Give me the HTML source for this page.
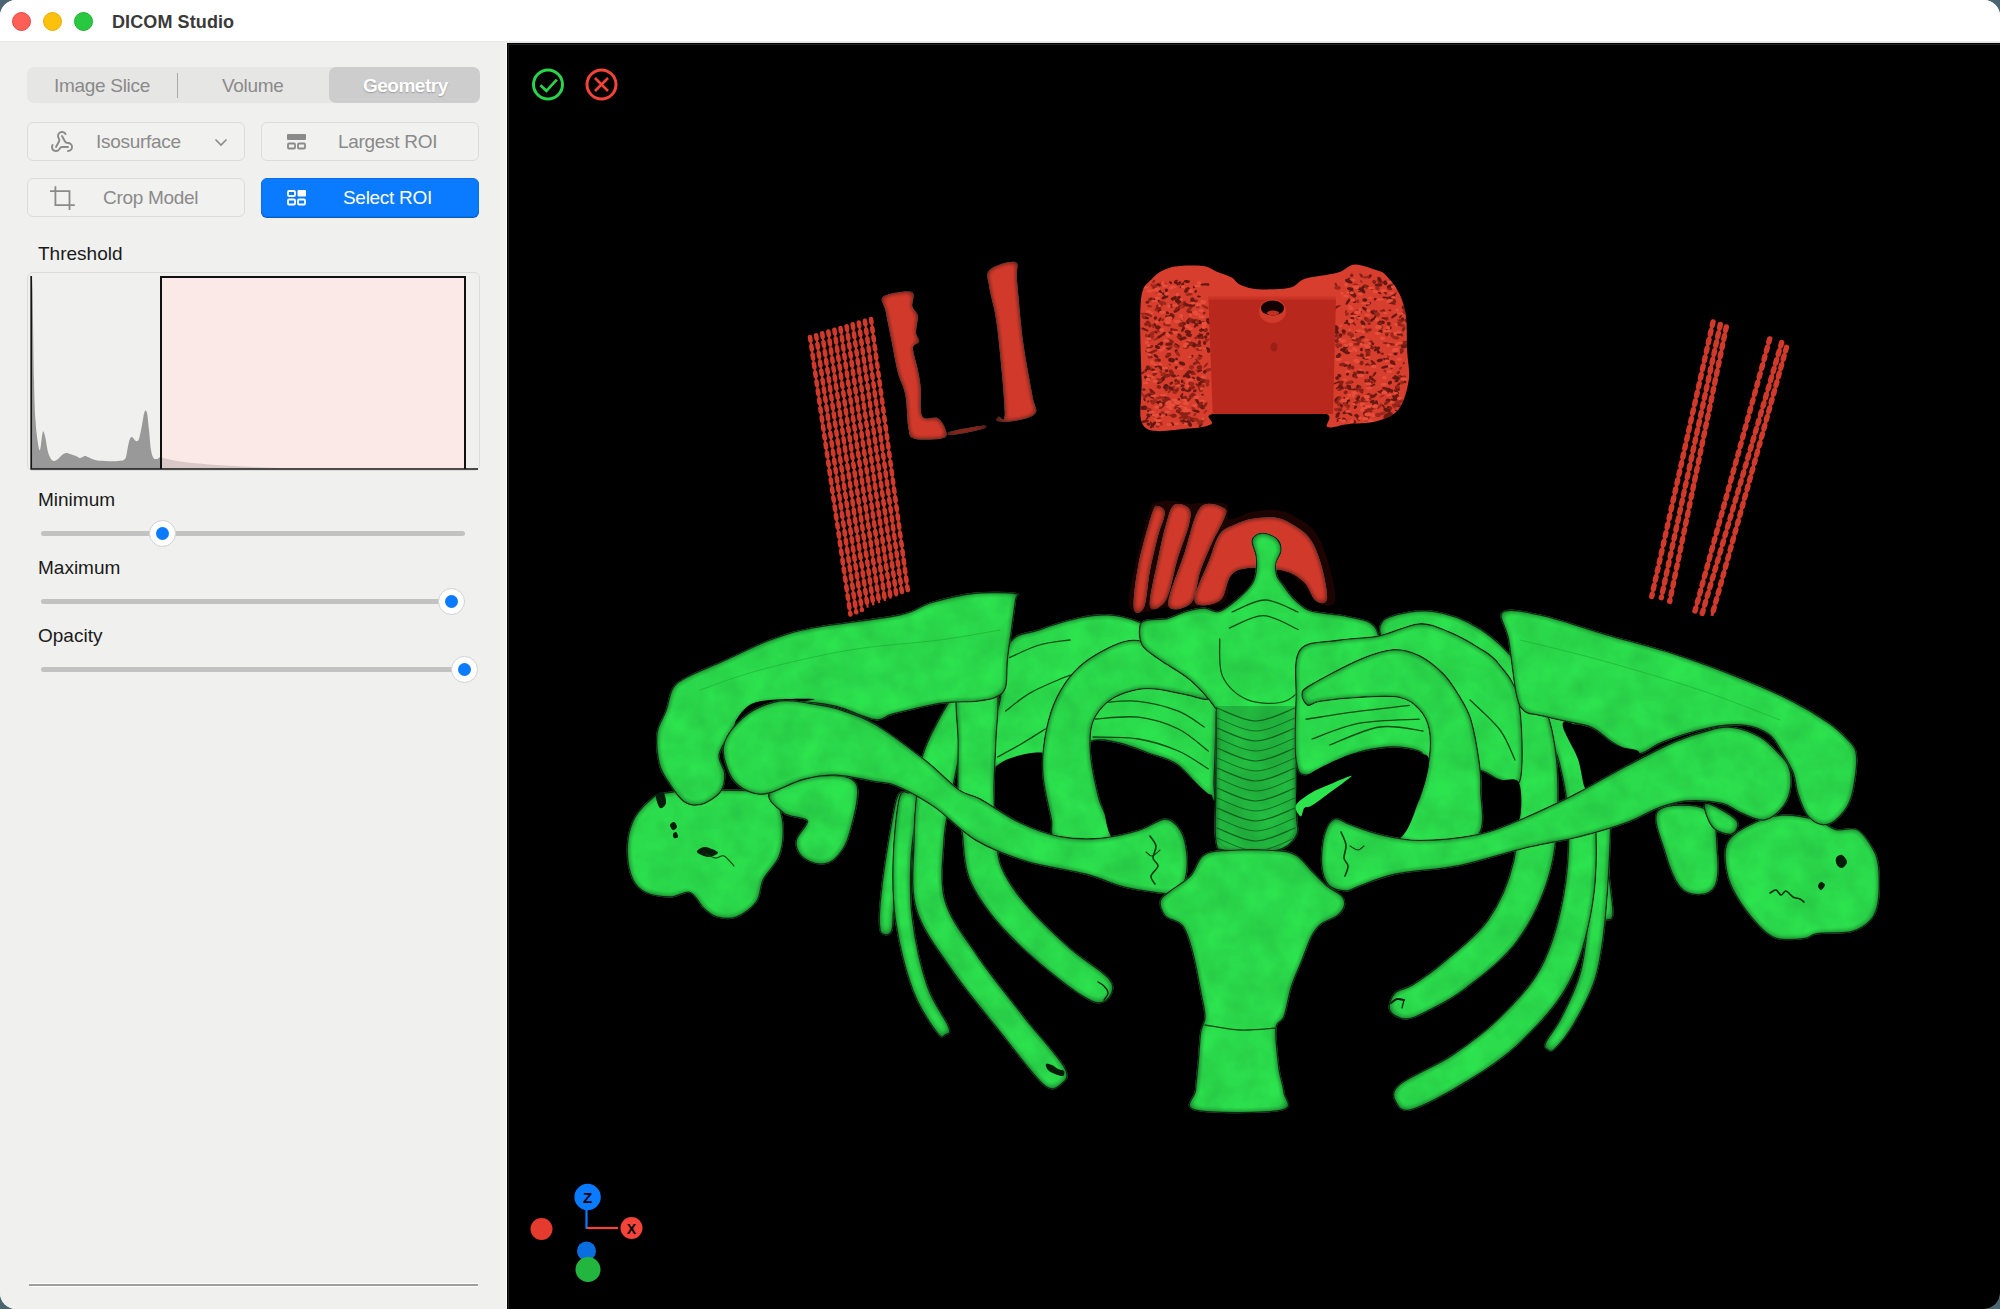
<!DOCTYPE html>
<html><head><meta charset="utf-8">
<style>
*{margin:0;padding:0;box-sizing:border-box}
html,body{width:2000px;height:1309px;overflow:hidden;background:#4a6670}
body{font-family:"Liberation Sans",sans-serif;position:relative}
#win{position:absolute;left:0;top:0;width:2000px;height:1309px;border-radius:16px;overflow:hidden;background:#f0f0ef}
#title{position:absolute;left:0;top:0;width:2000px;height:43px;background:#fff;border-bottom:2px solid #e7e7e6}
.tl{position:absolute;top:11.5px;width:19px;height:19px;border-radius:50%}
#ttext{position:absolute;left:112px;top:12px;font-size:18px;font-weight:bold;color:#3a3a3a;letter-spacing:0.1px}
#side{position:absolute;left:0;top:42px;width:507px;height:1267px;background:#f0f0ef;border-right:1px solid #fafafa}
#view{position:absolute;left:507px;top:43px;width:1493px;height:1266px;background:#000;overflow:hidden}
#view .inb{position:absolute;left:1px;top:1px;right:0;bottom:0;border-left:1px solid #222;border-top:1px solid #222}
.seg{position:absolute;left:27px;top:67px;width:453px;height:36px;border-radius:7px;background:#e6e6e5}
.seg .sel{position:absolute;left:302px;top:0;width:151px;height:36px;border-radius:7px;background:#cdcdcd}
.seg .dv{position:absolute;left:150px;top:6px;width:1px;height:25px;background:#a8a8a8}
.seg span{position:absolute;top:8px;font-size:19px;color:#8a8a8a;white-space:nowrap;letter-spacing:-0.3px}
.btn{position:absolute;width:218px;height:39px;border-radius:6px;border:1px solid #dcdcdc;background:#f1f1f0}
.btn span{position:absolute;top:8px;letter-spacing:-0.3px;font-size:19px;color:#8a8a8a;white-space:nowrap}
.btn svg{position:absolute}
.lbl{position:absolute;left:38px;font-size:19px;color:#1a1a1a}
.track{position:absolute;left:41px;width:424px;height:5px;border-radius:3px;background:#c2c2c2}
.knob{position:absolute;width:27px;height:27px;border-radius:50%;background:#fff;border:1px solid #d2d2d2}
.knob:after{content:"";position:absolute;left:6px;top:6px;width:13px;height:13px;border-radius:50%;background:#0a7aff}
</style></head><body>
<div id="win">
 <div id="title">
  <div class="tl" style="left:11.5px;background:#ff5f57;border:1px solid #e9453e"></div>
  <div class="tl" style="left:42.5px;background:#fbc10c;border:1px solid #e8ab06"></div>
  <div class="tl" style="left:73.5px;background:#28c840;border:1px solid #1eae33"></div>
  <div id="ttext">DICOM Studio</div>
 </div>
 <div id="side"></div>
 <div class="seg"><div class="sel"></div><div class="dv"></div>
  <span style="left:27px">Image Slice</span>
  <span style="left:195px">Volume</span>
  <span style="left:336px;color:#fff;font-weight:bold;letter-spacing:-0.5px;text-shadow:0 0.5px 1.5px rgba(0,0,0,.25)">Geometry</span>
 </div>
 <div class="btn" style="left:27px;top:122px">
  <svg style="left:22px;top:7px" width="24" height="24" viewBox="0 0 24 24" fill="none" stroke="#8a8a8a" stroke-width="1.9" stroke-linecap="round" stroke-linejoin="round"><path d="M18 16.98h-5.99c-1.1 0-1.95.94-2.48 1.9A4 4 0 0 1 2 17c.01-.7.2-1.4.57-2"/><path d="m6 17 3.13-5.78c.53-.97.1-2.18-.5-3.1a4 4 0 1 1 6.89-4.06"/><path d="m12 6 3.13 5.73C15.66 12.7 16.9 13 18 13a4 4 0 0 1 0 8"/></svg>
  <span style="left:68px">Isosurface</span>
  <svg style="left:186px;top:14px" width="14" height="10" viewBox="0 0 14 10" fill="none" stroke="#8a8a8a" stroke-width="1.6"><path d="M1.5 2.5 L7 8 L12.5 2.5"/></svg>
 </div>
 <div class="btn" style="left:261px;top:122px">
  <svg style="left:25px;top:11px" width="20" height="16" viewBox="0 0 20 16"><rect x="0" y="0" width="19" height="6" rx="1" fill="#8a8a8a"/><rect x="1" y="9.5" width="7" height="5" rx="1" fill="none" stroke="#8a8a8a" stroke-width="1.8"/><rect x="11" y="9.5" width="7" height="5" rx="1" fill="none" stroke="#8a8a8a" stroke-width="1.8"/></svg>
  <span style="left:76px">Largest ROI</span>
 </div>
 <div class="btn" style="left:27px;top:178px">
  <svg style="left:22px;top:6px" width="28" height="28" viewBox="0 0 28 28" fill="none" stroke="#8a8a8a" stroke-width="1.8"><path d="M5.4 1.3 V20.2 H24.8 M0 6.2 H19.5 V25"/></svg>
  <span style="left:75px">Crop Model</span>
 </div>
 <div class="btn" style="left:261px;top:178px;background:#0a7aff;border-color:#0a70ea;box-shadow:0 1px 0 #0858c0">
  <svg style="left:25px;top:11px" width="20" height="16" viewBox="0 0 20 16"><rect x="1" y="1" width="7" height="5" rx="1" fill="none" stroke="#fff" stroke-width="1.8"/><rect x="10.5" y="0" width="8.5" height="6.5" rx="1" fill="#fff"/><rect x="1" y="9.5" width="7" height="5" rx="1" fill="none" stroke="#fff" stroke-width="1.8"/><rect x="11" y="9.5" width="7" height="5" rx="1" fill="none" stroke="#fff" stroke-width="1.8"/></svg>
  <span style="left:81px;color:#fff">Select ROI</span>
 </div>
 <div class="lbl" style="top:243px">Threshold</div>
 <div style="position:absolute;left:27px;top:272px;width:453px;height:199px;border:1px solid #dcdcdc;border-radius:6px"></div>
 <svg style="position:absolute;left:0;top:0" width="507" height="700">
  <rect x="160" y="276" width="306" height="193" fill="#fbe9e7"/>
  <path d="M31.5 276.0 C31.7 278.3 32.1 272.7 32.5 290.0 C32.9 307.3 33.5 358.3 34.0 380.0 C34.5 401.7 34.9 410.0 35.5 420.0 C36.1 430.0 36.8 435.0 37.5 440.0 C38.2 445.0 39.1 451.3 40.0 450.0 C40.9 448.7 41.9 434.3 42.7 432.0 C43.5 429.7 44.1 432.7 45.0 436.0 C45.9 439.3 47.0 448.2 48.0 452.0 C49.0 455.8 50.0 457.5 51.0 459.0 C52.0 460.5 52.8 461.0 54.0 461.0 C55.2 461.0 56.7 460.0 58.0 459.0 C59.3 458.0 60.7 456.0 62.0 455.0 C63.3 454.0 64.7 453.2 66.0 453.0 C67.3 452.8 68.3 453.5 70.0 454.0 C71.7 454.5 74.3 455.3 76.0 456.0 C77.7 456.7 78.5 458.0 80.0 458.0 C81.5 458.0 83.4 456.2 84.7 456.0 C86.0 455.8 86.3 456.3 88.0 457.0 C89.7 457.7 92.2 459.3 95.0 460.0 C97.8 460.7 101.2 460.8 105.0 461.0 C108.8 461.2 114.7 461.3 118.0 461.0 C121.3 460.7 123.4 461.0 125.0 459.0 C126.6 457.0 126.8 452.2 127.5 449.0 C128.2 445.8 128.8 442.0 129.5 440.0 C130.2 438.0 130.9 436.8 132.0 437.0 C133.1 437.2 134.8 440.7 136.0 441.0 C137.2 441.3 138.0 441.7 139.0 439.0 C140.0 436.3 141.1 429.5 142.0 425.0 C142.9 420.5 143.7 414.0 144.5 412.0 C145.3 410.0 146.2 410.0 147.0 413.0 C147.8 416.0 148.3 423.8 149.0 430.0 C149.7 436.2 150.2 445.3 151.0 450.0 C151.8 454.7 152.5 456.5 153.5 458.0 C154.5 459.5 155.9 459.2 157.0 459.0 C158.1 458.8 159.5 457.3 160.0 457.0 L160 469 L31 469 Z" fill="#999"/>
  <path d="M160 457 C175 462 200 465 280 468 L160 469 Z" fill="#d8c9c8"/>
  <path d="M31.2 276 V469 H478" fill="none" stroke="#151515" stroke-width="1.7"/>
  <path d="M161 469 V277 H465 V469" fill="none" stroke="#111" stroke-width="2"/>
 </svg>
 <div class="lbl" style="top:489px">Minimum</div>
 <div class="track" style="top:530.5px"></div>
 <div class="knob" style="left:149px;top:519.5px"></div>
 <div class="lbl" style="top:557px">Maximum</div>
 <div class="track" style="top:598.5px"></div>
 <div class="knob" style="left:438px;top:587.5px"></div>
 <div class="lbl" style="top:625px">Opacity</div>
 <div class="track" style="top:666.5px"></div>
 <div class="knob" style="left:451px;top:655.5px"></div>
 <div style="position:absolute;left:29px;top:1283px;width:449px;height:4px;border-top:1px solid #fff;border-bottom:1px solid #fff;background:#9e9e9e"></div>

 <div id="view"><!--SCENE--><svg id="scene" style="position:absolute;left:0;top:0" width="1493" height="1266" viewBox="507 43 1493 1266">
<defs><filter id="sh" x="-10%" y="-10%" width="120%" height="120%" color-interpolation-filters="sRGB">
<feGaussianBlur in="SourceAlpha" stdDeviation="4" result="b"/>
<feColorMatrix in="b" type="matrix" values="0 0 0 0.95 0.12  0 0 0 0.95 0.12  0 0 0 0.95 0.12  0 0 0 0 1" result="g"/>
<feTurbulence type="fractalNoise" baseFrequency="0.035" numOctaves="3" seed="7" result="n"/>
<feColorMatrix in="n" type="matrix" values="0.18 0 0 0 0.86  0.18 0 0 0 0.86  0.18 0 0 0 0.86  0 0 0 0 1" result="n2"/>
<feBlend in="g" in2="n2" mode="multiply" result="g2"/>
<feBlend in="SourceGraphic" in2="g2" mode="multiply" result="m"/>
<feComposite in="m" in2="SourceAlpha" operator="in"/>
</filter><filter id="shr" x="-10%" y="-10%" width="120%" height="120%" color-interpolation-filters="sRGB">
<feGaussianBlur in="SourceAlpha" stdDeviation="3" result="b"/>
<feColorMatrix in="b" type="matrix" values="0 0 0 0.8 0.25  0 0 0 0.8 0.25  0 0 0 0.8 0.25  0 0 0 0 1" result="g"/>
<feBlend in="SourceGraphic" in2="g" mode="multiply" result="m"/>
<feComposite in="m" in2="SourceAlpha" operator="in"/>
</filter></defs>
<path d="M883.3 296.6 C887.6 293.4 906.8 290.4 911.6 292.0 C916.4 293.6 911.3 302.6 912.3 306.5 C913.3 310.4 917.1 311.4 917.7 315.7 C918.3 320.0 915.8 328.2 916.0 332.5 C916.2 336.8 919.7 339.1 919.2 341.7 C918.7 344.2 913.2 343.2 913.0 347.8 C912.8 352.4 916.4 362.6 917.7 369.2 C919.0 375.8 920.0 379.6 920.7 387.5 C921.5 395.4 919.4 411.5 922.2 416.6 C925.0 421.7 933.7 416.0 937.5 418.0 C941.3 420.0 944.2 425.5 945.2 428.8 C946.2 432.1 948.7 436.4 943.6 438.0 C938.5 439.6 920.5 440.2 914.6 438.7 C908.8 437.2 910.0 436.1 908.5 428.8 C907.0 421.6 907.2 404.6 905.4 395.2 C903.6 385.8 900.1 381.2 897.8 372.3 C895.5 363.4 893.7 351.9 891.7 341.7 C889.7 331.5 887.0 318.5 885.6 311.0 C884.2 303.5 879.0 299.8 883.3 296.6 Z" fill="#d13a2b" filter="url(#shr)"/>
<path d="M949.8 431.8 C954.6 430.2 976.2 426.2 981.8 425.7 C987.4 425.2 988.2 427.2 983.4 428.8 C978.6 430.4 958.4 434.5 952.8 435.0 C947.2 435.5 945.0 433.4 949.8 431.8 Z" fill="#d13a2b" filter="url(#shr)"/>
<path d="M989.5 269.9 C993.8 265.6 1010.9 260.4 1015.5 262.2 C1020.1 264.0 1015.7 267.4 1017.0 280.6 C1018.3 293.9 1020.6 322.6 1023.1 341.7 C1025.7 360.8 1030.3 383.2 1032.3 395.2 C1034.3 407.2 1038.3 409.2 1035.3 413.5 C1032.2 417.8 1020.4 419.8 1014.0 421.1 C1007.6 422.4 999.6 421.9 997.1 421.1 C994.6 420.4 997.4 418.1 998.7 416.6 C1000.0 415.1 1005.1 427.0 1004.8 412.0 C1004.5 397.0 999.6 347.0 997.1 326.4 C994.6 305.8 990.8 297.6 989.5 288.2 C988.2 278.8 985.2 274.2 989.5 269.9 Z" fill="#d13a2b" filter="url(#shr)"/>
<path d="M1140.9 300.8 C1142.6 283.9 1146.8 284.6 1151.8 279.0 C1156.8 273.4 1162.1 269.6 1170.6 267.4 C1179.1 265.2 1194.9 265.3 1202.6 266.0 C1210.3 266.7 1212.2 269.9 1217.0 271.8 C1221.8 273.7 1227.7 275.4 1231.6 277.6 C1235.5 279.8 1235.9 282.9 1240.3 284.8 C1244.7 286.7 1249.5 288.7 1257.7 289.2 C1265.9 289.7 1282.0 289.4 1289.7 287.7 C1297.5 286.0 1297.9 281.2 1304.2 279.0 C1310.5 276.8 1321.4 275.9 1327.4 274.7 C1333.4 273.5 1335.8 273.5 1340.4 271.8 C1345.0 270.1 1349.0 264.8 1355.0 264.5 C1361.0 264.2 1371.6 268.6 1376.7 270.3 C1381.8 272.0 1381.8 271.1 1385.4 274.7 C1389.0 278.3 1395.1 285.2 1398.5 292.0 C1401.9 298.8 1404.3 305.4 1405.8 315.3 C1407.2 325.2 1406.7 340.7 1407.2 351.6 C1407.7 362.5 1410.2 370.9 1408.7 380.6 C1407.2 390.3 1403.8 402.8 1398.5 409.6 C1393.2 416.4 1385.2 418.9 1376.7 421.3 C1368.2 423.7 1355.9 423.2 1347.7 424.2 C1339.5 425.1 1331.0 428.7 1327.4 427.0 C1323.8 425.3 1334.7 416.2 1326.0 414.0 C1317.3 411.8 1293.9 414.0 1275.0 414.0 C1256.1 414.0 1223.3 412.3 1212.7 414.0 C1202.1 415.7 1215.4 421.8 1211.3 424.2 C1207.2 426.6 1199.1 428.0 1188.0 428.5 C1176.9 429.0 1152.2 435.0 1144.5 427.0 C1136.8 419.0 1142.2 401.6 1141.6 380.6 C1141.0 359.6 1139.2 317.7 1140.9 300.8 Z" fill="#d83e2e" />
<clipPath id="blkclip"><path d="M1140.9 300.8 C1142.6 283.9 1146.8 284.6 1151.8 279.0 C1156.8 273.4 1162.1 269.6 1170.6 267.4 C1179.1 265.2 1194.9 265.3 1202.6 266.0 C1210.3 266.7 1212.2 269.9 1217.0 271.8 C1221.8 273.7 1227.7 275.4 1231.6 277.6 C1235.5 279.8 1235.9 282.9 1240.3 284.8 C1244.7 286.7 1249.5 288.7 1257.7 289.2 C1265.9 289.7 1282.0 289.4 1289.7 287.7 C1297.5 286.0 1297.9 281.2 1304.2 279.0 C1310.5 276.8 1321.4 275.9 1327.4 274.7 C1333.4 273.5 1335.8 273.5 1340.4 271.8 C1345.0 270.1 1349.0 264.8 1355.0 264.5 C1361.0 264.2 1371.6 268.6 1376.7 270.3 C1381.8 272.0 1381.8 271.1 1385.4 274.7 C1389.0 278.3 1395.1 285.2 1398.5 292.0 C1401.9 298.8 1404.3 305.4 1405.8 315.3 C1407.2 325.2 1406.7 340.7 1407.2 351.6 C1407.7 362.5 1410.2 370.9 1408.7 380.6 C1407.2 390.3 1403.8 402.8 1398.5 409.6 C1393.2 416.4 1385.2 418.9 1376.7 421.3 C1368.2 423.7 1355.9 423.2 1347.7 424.2 C1339.5 425.1 1331.0 428.7 1327.4 427.0 C1323.8 425.3 1334.7 416.2 1326.0 414.0 C1317.3 411.8 1293.9 414.0 1275.0 414.0 C1256.1 414.0 1223.3 412.3 1212.7 414.0 C1202.1 415.7 1215.4 421.8 1211.3 424.2 C1207.2 426.6 1199.1 428.0 1188.0 428.5 C1176.9 429.0 1152.2 435.0 1144.5 427.0 C1136.8 419.0 1142.2 401.6 1141.6 380.6 C1141.0 359.6 1139.2 317.7 1140.9 300.8 Z"/></clipPath>
<g opacity="0.62" clip-path="url(#blkclip)"><ellipse cx="1158.7" cy="360.0" rx="2.2" ry="1.6" fill="#2a0402" transform="rotate(13 1158.7 360.0)"/><ellipse cx="1399.6" cy="344.9" rx="2.7" ry="1.1" fill="#7a1a10" transform="rotate(5 1399.6 344.9)"/><ellipse cx="1179.3" cy="338.4" rx="3.6" ry="1.1" fill="#5a0f08" transform="rotate(44 1179.3 338.4)"/><ellipse cx="1372.6" cy="385.4" rx="3.1" ry="0.9" fill="#2a0402" transform="rotate(-24 1372.6 385.4)"/><ellipse cx="1145.0" cy="407.2" rx="2.5" ry="1.8" fill="#7a1a10" transform="rotate(26 1145.0 407.2)"/><ellipse cx="1400.5" cy="333.8" rx="3.4" ry="1.4" fill="#5a0f08" transform="rotate(45 1400.5 333.8)"/><ellipse cx="1149.4" cy="300.0" rx="1.8" ry="2.2" fill="#7a1a10" transform="rotate(33 1149.4 300.0)"/><ellipse cx="1395.9" cy="337.8" rx="3.5" ry="1.6" fill="#7a1a10" transform="rotate(10 1395.9 337.8)"/><ellipse cx="1202.7" cy="380.3" rx="3.8" ry="2.0" fill="#5a0f08" transform="rotate(24 1202.7 380.3)"/><ellipse cx="1358.8" cy="355.7" rx="2.8" ry="0.9" fill="#5a0f08" transform="rotate(16 1358.8 355.7)"/><ellipse cx="1208.2" cy="319.3" rx="1.5" ry="1.5" fill="#7a1a10" transform="rotate(-49 1208.2 319.3)"/><ellipse cx="1392.0" cy="336.2" rx="1.6" ry="1.2" fill="#7a1a10" transform="rotate(45 1392.0 336.2)"/><ellipse cx="1145.9" cy="370.3" rx="1.3" ry="1.8" fill="#1a0200" transform="rotate(6 1145.9 370.3)"/><ellipse cx="1400.5" cy="316.6" rx="1.9" ry="0.9" fill="#2a0402" transform="rotate(-51 1400.5 316.6)"/><ellipse cx="1182.6" cy="284.6" rx="1.8" ry="1.4" fill="#1a0200" transform="rotate(-41 1182.6 284.6)"/><ellipse cx="1339.0" cy="404.3" rx="2.1" ry="2.1" fill="#7a1a10" transform="rotate(-15 1339.0 404.3)"/><ellipse cx="1200.4" cy="336.8" rx="3.6" ry="1.8" fill="#2a0402" transform="rotate(14 1200.4 336.8)"/><ellipse cx="1401.8" cy="350.5" rx="2.4" ry="1.8" fill="#5a0f08" transform="rotate(52 1401.8 350.5)"/><ellipse cx="1171.9" cy="318.0" rx="2.0" ry="1.3" fill="#7a1a10" transform="rotate(58 1171.9 318.0)"/><ellipse cx="1358.0" cy="331.1" rx="2.8" ry="1.0" fill="#1a0200" transform="rotate(-4 1358.0 331.1)"/><ellipse cx="1187.8" cy="331.8" rx="3.2" ry="1.8" fill="#2a0402" transform="rotate(11 1187.8 331.8)"/><ellipse cx="1402.8" cy="278.2" rx="2.2" ry="1.7" fill="#1a0200" transform="rotate(11 1402.8 278.2)"/><ellipse cx="1164.1" cy="333.5" rx="2.1" ry="1.3" fill="#1a0200" transform="rotate(-24 1164.1 333.5)"/><ellipse cx="1362.4" cy="390.1" rx="1.3" ry="1.6" fill="#5a0f08" transform="rotate(-23 1362.4 390.1)"/><ellipse cx="1157.7" cy="398.2" rx="1.9" ry="1.1" fill="#7a1a10" transform="rotate(18 1157.7 398.2)"/><ellipse cx="1342.8" cy="364.5" rx="3.9" ry="1.7" fill="#5a0f08" transform="rotate(-7 1342.8 364.5)"/><ellipse cx="1199.5" cy="304.9" rx="2.1" ry="1.7" fill="#7a1a10" transform="rotate(-28 1199.5 304.9)"/><ellipse cx="1391.1" cy="280.1" rx="3.9" ry="1.2" fill="#5a0f08" transform="rotate(44 1391.1 280.1)"/><ellipse cx="1165.4" cy="401.7" rx="1.4" ry="1.7" fill="#5a0f08" transform="rotate(-9 1165.4 401.7)"/><ellipse cx="1372.3" cy="401.6" rx="2.5" ry="1.7" fill="#1a0200" transform="rotate(-10 1372.3 401.6)"/><ellipse cx="1170.0" cy="415.3" rx="1.6" ry="0.8" fill="#7a1a10" transform="rotate(7 1170.0 415.3)"/><ellipse cx="1405.0" cy="381.9" rx="1.3" ry="1.4" fill="#1a0200" transform="rotate(5 1405.0 381.9)"/><ellipse cx="1201.7" cy="406.6" rx="3.6" ry="2.2" fill="#2a0402" transform="rotate(37 1201.7 406.6)"/><ellipse cx="1339.2" cy="409.6" rx="3.1" ry="2.1" fill="#7a1a10" transform="rotate(9 1339.2 409.6)"/><ellipse cx="1143.9" cy="389.6" rx="1.7" ry="1.2" fill="#2a0402" transform="rotate(3 1143.9 389.6)"/><ellipse cx="1365.0" cy="414.9" rx="2.9" ry="1.3" fill="#1a0200" transform="rotate(57 1365.0 414.9)"/><ellipse cx="1178.7" cy="399.3" rx="1.4" ry="1.1" fill="#2a0402" transform="rotate(4 1178.7 399.3)"/><ellipse cx="1393.2" cy="300.5" rx="3.4" ry="2.1" fill="#5a0f08" transform="rotate(39 1393.2 300.5)"/><ellipse cx="1143.5" cy="372.4" rx="3.6" ry="0.9" fill="#1a0200" transform="rotate(-30 1143.5 372.4)"/><ellipse cx="1379.3" cy="352.4" rx="1.3" ry="1.3" fill="#2a0402" transform="rotate(43 1379.3 352.4)"/><ellipse cx="1194.2" cy="286.8" rx="1.3" ry="1.5" fill="#2a0402" transform="rotate(43 1194.2 286.8)"/><ellipse cx="1342.0" cy="349.8" rx="2.1" ry="1.2" fill="#1a0200" transform="rotate(-14 1342.0 349.8)"/><ellipse cx="1168.7" cy="324.7" rx="1.9" ry="2.2" fill="#7a1a10" transform="rotate(-45 1168.7 324.7)"/><ellipse cx="1374.9" cy="381.7" rx="2.3" ry="0.9" fill="#5a0f08" transform="rotate(-55 1374.9 381.7)"/><ellipse cx="1173.4" cy="375.6" rx="2.7" ry="1.7" fill="#2a0402" transform="rotate(15 1173.4 375.6)"/><ellipse cx="1366.2" cy="330.5" rx="2.6" ry="1.8" fill="#7a1a10" transform="rotate(54 1366.2 330.5)"/><ellipse cx="1170.6" cy="282.6" rx="1.8" ry="1.2" fill="#2a0402" transform="rotate(36 1170.6 282.6)"/><ellipse cx="1351.7" cy="294.4" rx="1.3" ry="1.3" fill="#1a0200" transform="rotate(-45 1351.7 294.4)"/><ellipse cx="1188.6" cy="418.0" rx="3.2" ry="2.0" fill="#7a1a10" transform="rotate(20 1188.6 418.0)"/><ellipse cx="1387.4" cy="359.0" rx="1.5" ry="1.6" fill="#2a0402" transform="rotate(-3 1387.4 359.0)"/><ellipse cx="1158.6" cy="337.1" rx="2.7" ry="1.6" fill="#7a1a10" transform="rotate(-39 1158.6 337.1)"/><ellipse cx="1337.6" cy="400.4" rx="1.5" ry="2.0" fill="#7a1a10" transform="rotate(40 1337.6 400.4)"/><ellipse cx="1205.9" cy="365.1" rx="3.4" ry="0.9" fill="#5a0f08" transform="rotate(-47 1205.9 365.1)"/><ellipse cx="1388.4" cy="414.2" rx="1.4" ry="1.3" fill="#5a0f08" transform="rotate(39 1388.4 414.2)"/><ellipse cx="1159.0" cy="306.4" rx="1.9" ry="1.7" fill="#7a1a10" transform="rotate(-30 1159.0 306.4)"/><ellipse cx="1378.0" cy="414.9" rx="2.8" ry="2.2" fill="#7a1a10" transform="rotate(0 1378.0 414.9)"/><ellipse cx="1207.2" cy="340.7" rx="3.3" ry="1.0" fill="#7a1a10" transform="rotate(-41 1207.2 340.7)"/><ellipse cx="1364.1" cy="407.2" rx="1.7" ry="1.5" fill="#7a1a10" transform="rotate(50 1364.1 407.2)"/><ellipse cx="1177.1" cy="345.1" rx="3.2" ry="1.1" fill="#1a0200" transform="rotate(30 1177.1 345.1)"/><ellipse cx="1346.3" cy="351.8" rx="3.8" ry="2.0" fill="#1a0200" transform="rotate(21 1346.3 351.8)"/><ellipse cx="1199.4" cy="367.5" rx="2.8" ry="2.2" fill="#5a0f08" transform="rotate(-23 1199.4 367.5)"/><ellipse cx="1354.8" cy="394.8" rx="1.8" ry="1.6" fill="#5a0f08" transform="rotate(-21 1354.8 394.8)"/><ellipse cx="1194.1" cy="301.1" rx="4.0" ry="1.5" fill="#5a0f08" transform="rotate(-4 1194.1 301.1)"/><ellipse cx="1394.4" cy="397.4" rx="2.8" ry="1.5" fill="#2a0402" transform="rotate(43 1394.4 397.4)"/><ellipse cx="1169.4" cy="387.8" rx="3.9" ry="1.5" fill="#5a0f08" transform="rotate(47 1169.4 387.8)"/><ellipse cx="1381.4" cy="390.8" rx="1.4" ry="1.1" fill="#1a0200" transform="rotate(-31 1381.4 390.8)"/><ellipse cx="1155.5" cy="318.0" rx="1.7" ry="1.8" fill="#2a0402" transform="rotate(48 1155.5 318.0)"/><ellipse cx="1353.9" cy="403.9" rx="2.1" ry="1.4" fill="#2a0402" transform="rotate(-46 1353.9 403.9)"/><ellipse cx="1160.4" cy="414.3" rx="1.3" ry="1.4" fill="#1a0200" transform="rotate(-59 1160.4 414.3)"/><ellipse cx="1359.4" cy="340.0" rx="2.6" ry="1.1" fill="#7a1a10" transform="rotate(-13 1359.4 340.0)"/><ellipse cx="1178.9" cy="297.5" rx="2.0" ry="1.7" fill="#2a0402" transform="rotate(-7 1178.9 297.5)"/><ellipse cx="1372.9" cy="312.4" rx="2.7" ry="1.8" fill="#1a0200" transform="rotate(31 1372.9 312.4)"/><ellipse cx="1162.5" cy="379.4" rx="3.0" ry="1.9" fill="#1a0200" transform="rotate(-47 1162.5 379.4)"/><ellipse cx="1402.1" cy="325.4" rx="2.8" ry="1.5" fill="#7a1a10" transform="rotate(1 1402.1 325.4)"/><ellipse cx="1146.9" cy="323.3" rx="3.2" ry="1.8" fill="#5a0f08" transform="rotate(-39 1146.9 323.3)"/><ellipse cx="1398.3" cy="372.7" rx="1.5" ry="2.1" fill="#5a0f08" transform="rotate(50 1398.3 372.7)"/><ellipse cx="1185.6" cy="375.5" rx="2.4" ry="1.2" fill="#5a0f08" transform="rotate(-5 1185.6 375.5)"/><ellipse cx="1357.9" cy="301.3" rx="1.4" ry="1.8" fill="#7a1a10" transform="rotate(-17 1357.9 301.3)"/><ellipse cx="1160.5" cy="336.4" rx="3.6" ry="0.9" fill="#1a0200" transform="rotate(-30 1160.5 336.4)"/><ellipse cx="1389.8" cy="327.8" rx="2.1" ry="1.4" fill="#2a0402" transform="rotate(-18 1389.8 327.8)"/><ellipse cx="1198.9" cy="296.5" rx="2.0" ry="0.9" fill="#2a0402" transform="rotate(8 1198.9 296.5)"/><ellipse cx="1399.7" cy="291.7" rx="3.2" ry="1.6" fill="#7a1a10" transform="rotate(38 1399.7 291.7)"/><ellipse cx="1192.4" cy="367.0" rx="1.6" ry="1.4" fill="#5a0f08" transform="rotate(5 1192.4 367.0)"/><ellipse cx="1347.9" cy="301.7" rx="3.6" ry="1.3" fill="#1a0200" transform="rotate(-56 1347.9 301.7)"/><ellipse cx="1196.0" cy="411.0" rx="3.9" ry="1.3" fill="#1a0200" transform="rotate(16 1196.0 411.0)"/><ellipse cx="1404.4" cy="377.3" rx="2.0" ry="2.0" fill="#7a1a10" transform="rotate(-56 1404.4 377.3)"/><ellipse cx="1155.6" cy="373.2" rx="1.5" ry="1.9" fill="#5a0f08" transform="rotate(-1 1155.6 373.2)"/><ellipse cx="1372.7" cy="343.6" rx="1.7" ry="1.5" fill="#2a0402" transform="rotate(38 1372.7 343.6)"/><ellipse cx="1204.1" cy="419.2" rx="1.5" ry="1.2" fill="#5a0f08" transform="rotate(-44 1204.1 419.2)"/><ellipse cx="1391.5" cy="367.9" rx="1.3" ry="1.3" fill="#5a0f08" transform="rotate(1 1391.5 367.9)"/><ellipse cx="1175.9" cy="282.8" rx="2.2" ry="1.3" fill="#1a0200" transform="rotate(23 1175.9 282.8)"/><ellipse cx="1345.4" cy="402.9" rx="2.9" ry="2.1" fill="#2a0402" transform="rotate(29 1345.4 402.9)"/><ellipse cx="1165.7" cy="398.6" rx="3.8" ry="2.0" fill="#7a1a10" transform="rotate(24 1165.7 398.6)"/><ellipse cx="1351.5" cy="322.1" rx="3.4" ry="1.4" fill="#5a0f08" transform="rotate(25 1351.5 322.1)"/><ellipse cx="1168.8" cy="349.6" rx="1.4" ry="2.0" fill="#5a0f08" transform="rotate(18 1168.8 349.6)"/><ellipse cx="1357.3" cy="344.2" rx="3.3" ry="1.4" fill="#5a0f08" transform="rotate(-5 1357.3 344.2)"/><ellipse cx="1145.5" cy="317.7" rx="3.6" ry="1.4" fill="#1a0200" transform="rotate(12 1145.5 317.7)"/><ellipse cx="1351.7" cy="275.4" rx="1.8" ry="1.9" fill="#5a0f08" transform="rotate(43 1351.7 275.4)"/><ellipse cx="1178.2" cy="303.4" rx="1.3" ry="1.6" fill="#5a0f08" transform="rotate(16 1178.2 303.4)"/><ellipse cx="1345.7" cy="365.7" rx="2.4" ry="1.1" fill="#2a0402" transform="rotate(-12 1345.7 365.7)"/><ellipse cx="1164.0" cy="284.8" rx="3.2" ry="1.1" fill="#2a0402" transform="rotate(-12 1164.0 284.8)"/><ellipse cx="1337.9" cy="418.9" rx="1.8" ry="0.9" fill="#7a1a10" transform="rotate(-37 1337.9 418.9)"/><ellipse cx="1165.0" cy="297.1" rx="3.8" ry="1.6" fill="#1a0200" transform="rotate(-27 1165.0 297.1)"/><ellipse cx="1391.1" cy="344.3" rx="3.8" ry="1.2" fill="#5a0f08" transform="rotate(7 1391.1 344.3)"/><ellipse cx="1145.0" cy="329.5" rx="4.0" ry="1.2" fill="#2a0402" transform="rotate(22 1145.0 329.5)"/><ellipse cx="1403.8" cy="363.2" rx="1.2" ry="0.8" fill="#2a0402" transform="rotate(-58 1403.8 363.2)"/><ellipse cx="1176.2" cy="350.8" rx="1.7" ry="1.5" fill="#1a0200" transform="rotate(-36 1176.2 350.8)"/><ellipse cx="1404.2" cy="346.1" rx="3.5" ry="2.1" fill="#2a0402" transform="rotate(-14 1404.2 346.1)"/><ellipse cx="1192.6" cy="372.8" rx="2.3" ry="2.1" fill="#5a0f08" transform="rotate(42 1192.6 372.8)"/><ellipse cx="1344.0" cy="333.1" rx="2.1" ry="1.8" fill="#7a1a10" transform="rotate(-39 1344.0 333.1)"/><ellipse cx="1191.8" cy="387.9" rx="3.5" ry="1.6" fill="#5a0f08" transform="rotate(-16 1191.8 387.9)"/><ellipse cx="1365.0" cy="309.2" rx="3.4" ry="1.5" fill="#1a0200" transform="rotate(39 1365.0 309.2)"/><ellipse cx="1176.5" cy="390.7" rx="3.8" ry="1.8" fill="#7a1a10" transform="rotate(-55 1176.5 390.7)"/><ellipse cx="1348.0" cy="387.0" rx="3.5" ry="0.9" fill="#2a0402" transform="rotate(-22 1348.0 387.0)"/><ellipse cx="1182.6" cy="397.8" rx="1.4" ry="1.7" fill="#2a0402" transform="rotate(-6 1182.6 397.8)"/><ellipse cx="1398.8" cy="384.2" rx="2.1" ry="1.3" fill="#2a0402" transform="rotate(-37 1398.8 384.2)"/><ellipse cx="1194.9" cy="414.6" rx="2.1" ry="1.2" fill="#7a1a10" transform="rotate(-50 1194.9 414.6)"/><ellipse cx="1381.4" cy="310.9" rx="1.3" ry="1.0" fill="#5a0f08" transform="rotate(10 1381.4 310.9)"/><ellipse cx="1143.8" cy="313.8" rx="3.9" ry="1.1" fill="#7a1a10" transform="rotate(1 1143.8 313.8)"/><ellipse cx="1399.5" cy="322.5" rx="3.7" ry="1.9" fill="#7a1a10" transform="rotate(-39 1399.5 322.5)"/><ellipse cx="1148.2" cy="401.4" rx="1.5" ry="0.8" fill="#2a0402" transform="rotate(-36 1148.2 401.4)"/><ellipse cx="1398.5" cy="287.8" rx="2.5" ry="1.1" fill="#2a0402" transform="rotate(17 1398.5 287.8)"/><ellipse cx="1193.3" cy="408.1" rx="2.2" ry="1.6" fill="#7a1a10" transform="rotate(33 1193.3 408.1)"/><ellipse cx="1356.4" cy="415.8" rx="2.4" ry="1.3" fill="#2a0402" transform="rotate(5 1356.4 415.8)"/><ellipse cx="1173.6" cy="387.0" rx="1.4" ry="1.3" fill="#7a1a10" transform="rotate(30 1173.6 387.0)"/><ellipse cx="1400.7" cy="377.3" rx="2.2" ry="1.9" fill="#2a0402" transform="rotate(13 1400.7 377.3)"/><ellipse cx="1157.1" cy="331.5" rx="4.0" ry="1.3" fill="#7a1a10" transform="rotate(-7 1157.1 331.5)"/><ellipse cx="1353.6" cy="323.2" rx="3.3" ry="1.1" fill="#5a0f08" transform="rotate(45 1353.6 323.2)"/><ellipse cx="1208.1" cy="370.0" rx="3.8" ry="1.6" fill="#7a1a10" transform="rotate(-16 1208.1 370.0)"/><ellipse cx="1349.4" cy="367.9" rx="2.3" ry="2.1" fill="#7a1a10" transform="rotate(-4 1349.4 367.9)"/><ellipse cx="1181.8" cy="285.1" rx="3.9" ry="0.8" fill="#2a0402" transform="rotate(-57 1181.8 285.1)"/><ellipse cx="1346.5" cy="350.0" rx="1.4" ry="1.5" fill="#5a0f08" transform="rotate(29 1346.5 350.0)"/><ellipse cx="1161.2" cy="343.6" rx="2.2" ry="1.8" fill="#1a0200" transform="rotate(-43 1161.2 343.6)"/><ellipse cx="1367.1" cy="410.4" rx="2.4" ry="1.1" fill="#7a1a10" transform="rotate(32 1367.1 410.4)"/><ellipse cx="1189.2" cy="423.5" rx="3.9" ry="2.0" fill="#1a0200" transform="rotate(53 1189.2 423.5)"/><ellipse cx="1366.2" cy="415.1" rx="2.5" ry="2.2" fill="#5a0f08" transform="rotate(-17 1366.2 415.1)"/><ellipse cx="1199.3" cy="321.9" rx="2.5" ry="2.0" fill="#1a0200" transform="rotate(30 1199.3 321.9)"/><ellipse cx="1401.1" cy="352.4" rx="1.2" ry="1.7" fill="#5a0f08" transform="rotate(4 1401.1 352.4)"/><ellipse cx="1153.9" cy="287.4" rx="1.8" ry="1.9" fill="#7a1a10" transform="rotate(-17 1153.9 287.4)"/><ellipse cx="1403.6" cy="329.1" rx="2.7" ry="1.5" fill="#5a0f08" transform="rotate(-58 1403.6 329.1)"/><ellipse cx="1171.5" cy="329.7" rx="1.3" ry="1.6" fill="#2a0402" transform="rotate(-6 1171.5 329.7)"/><ellipse cx="1354.3" cy="375.1" rx="2.6" ry="1.8" fill="#1a0200" transform="rotate(-55 1354.3 375.1)"/><ellipse cx="1171.4" cy="372.2" rx="3.1" ry="2.1" fill="#5a0f08" transform="rotate(54 1171.4 372.2)"/><ellipse cx="1388.1" cy="400.4" rx="2.4" ry="1.9" fill="#1a0200" transform="rotate(6 1388.1 400.4)"/><ellipse cx="1161.5" cy="304.8" rx="1.2" ry="1.7" fill="#7a1a10" transform="rotate(-4 1161.5 304.8)"/><ellipse cx="1382.6" cy="413.4" rx="3.5" ry="1.6" fill="#7a1a10" transform="rotate(-15 1382.6 413.4)"/><ellipse cx="1184.7" cy="323.2" rx="1.4" ry="1.0" fill="#2a0402" transform="rotate(-11 1184.7 323.2)"/><ellipse cx="1360.6" cy="342.8" rx="3.4" ry="1.4" fill="#5a0f08" transform="rotate(9 1360.6 342.8)"/><ellipse cx="1152.2" cy="285.6" rx="2.6" ry="1.1" fill="#7a1a10" transform="rotate(52 1152.2 285.6)"/><ellipse cx="1378.9" cy="279.6" rx="2.8" ry="1.6" fill="#7a1a10" transform="rotate(-45 1378.9 279.6)"/><ellipse cx="1194.8" cy="390.8" rx="1.9" ry="1.4" fill="#2a0402" transform="rotate(-15 1194.8 390.8)"/><ellipse cx="1372.0" cy="408.5" rx="3.9" ry="1.7" fill="#5a0f08" transform="rotate(-23 1372.0 408.5)"/><ellipse cx="1165.8" cy="376.1" rx="3.8" ry="1.4" fill="#2a0402" transform="rotate(-27 1165.8 376.1)"/><ellipse cx="1402.5" cy="415.6" rx="2.1" ry="1.3" fill="#1a0200" transform="rotate(-56 1402.5 415.6)"/><ellipse cx="1170.5" cy="340.8" rx="3.7" ry="1.5" fill="#5a0f08" transform="rotate(28 1170.5 340.8)"/><ellipse cx="1384.9" cy="292.2" rx="3.0" ry="1.0" fill="#2a0402" transform="rotate(53 1384.9 292.2)"/><ellipse cx="1207.3" cy="381.7" rx="2.4" ry="2.2" fill="#7a1a10" transform="rotate(-28 1207.3 381.7)"/><ellipse cx="1374.2" cy="282.0" rx="1.9" ry="2.1" fill="#5a0f08" transform="rotate(-42 1374.2 282.0)"/><ellipse cx="1189.6" cy="381.4" rx="2.5" ry="1.4" fill="#2a0402" transform="rotate(-43 1189.6 381.4)"/><ellipse cx="1339.8" cy="388.2" rx="1.7" ry="1.1" fill="#5a0f08" transform="rotate(45 1339.8 388.2)"/><ellipse cx="1146.2" cy="421.2" rx="2.7" ry="1.3" fill="#2a0402" transform="rotate(-8 1146.2 421.2)"/><ellipse cx="1348.7" cy="278.9" rx="1.5" ry="1.0" fill="#1a0200" transform="rotate(-45 1348.7 278.9)"/><ellipse cx="1166.3" cy="414.5" rx="1.4" ry="1.1" fill="#1a0200" transform="rotate(60 1166.3 414.5)"/><ellipse cx="1404.6" cy="311.6" rx="2.2" ry="2.1" fill="#7a1a10" transform="rotate(-48 1404.6 311.6)"/><ellipse cx="1198.9" cy="349.5" rx="3.3" ry="1.5" fill="#7a1a10" transform="rotate(8 1198.9 349.5)"/><ellipse cx="1368.5" cy="355.2" rx="2.4" ry="1.5" fill="#7a1a10" transform="rotate(-36 1368.5 355.2)"/><ellipse cx="1182.2" cy="417.1" rx="3.6" ry="1.1" fill="#5a0f08" transform="rotate(-22 1182.2 417.1)"/><ellipse cx="1394.8" cy="294.4" rx="2.9" ry="0.9" fill="#5a0f08" transform="rotate(-46 1394.8 294.4)"/><ellipse cx="1143.9" cy="407.9" rx="3.4" ry="2.2" fill="#1a0200" transform="rotate(3 1143.9 407.9)"/><ellipse cx="1389.6" cy="288.8" rx="2.7" ry="1.4" fill="#5a0f08" transform="rotate(11 1389.6 288.8)"/><ellipse cx="1157.4" cy="347.1" rx="2.8" ry="1.7" fill="#1a0200" transform="rotate(24 1157.4 347.1)"/><ellipse cx="1390.0" cy="382.7" rx="2.2" ry="1.8" fill="#1a0200" transform="rotate(-26 1390.0 382.7)"/><ellipse cx="1207.5" cy="319.7" rx="1.5" ry="1.5" fill="#1a0200" transform="rotate(27 1207.5 319.7)"/><ellipse cx="1353.4" cy="339.8" rx="1.9" ry="1.0" fill="#1a0200" transform="rotate(4 1353.4 339.8)"/><ellipse cx="1200.7" cy="425.0" rx="2.7" ry="1.4" fill="#2a0402" transform="rotate(-52 1200.7 425.0)"/><ellipse cx="1365.8" cy="401.3" rx="3.4" ry="0.9" fill="#7a1a10" transform="rotate(-14 1365.8 401.3)"/><ellipse cx="1207.8" cy="333.9" rx="1.8" ry="1.6" fill="#2a0402" transform="rotate(-8 1207.8 333.9)"/><ellipse cx="1396.7" cy="381.0" rx="2.2" ry="1.2" fill="#1a0200" transform="rotate(-12 1396.7 381.0)"/><ellipse cx="1167.6" cy="375.8" rx="3.7" ry="1.6" fill="#5a0f08" transform="rotate(-21 1167.6 375.8)"/><ellipse cx="1336.0" cy="284.6" rx="1.2" ry="2.0" fill="#5a0f08" transform="rotate(-22 1336.0 284.6)"/><ellipse cx="1161.7" cy="284.3" rx="2.7" ry="2.1" fill="#7a1a10" transform="rotate(28 1161.7 284.3)"/><ellipse cx="1394.0" cy="399.8" rx="3.8" ry="1.4" fill="#2a0402" transform="rotate(1 1394.0 399.8)"/><ellipse cx="1204.2" cy="313.1" rx="1.6" ry="1.2" fill="#5a0f08" transform="rotate(-46 1204.2 313.1)"/><ellipse cx="1348.2" cy="406.5" rx="2.4" ry="1.9" fill="#7a1a10" transform="rotate(-59 1348.2 406.5)"/><ellipse cx="1197.9" cy="307.0" rx="2.0" ry="1.3" fill="#7a1a10" transform="rotate(10 1197.9 307.0)"/><ellipse cx="1402.5" cy="319.4" rx="2.0" ry="1.7" fill="#2a0402" transform="rotate(-52 1402.5 319.4)"/><ellipse cx="1200.9" cy="389.7" rx="2.1" ry="2.0" fill="#1a0200" transform="rotate(-2 1200.9 389.7)"/><ellipse cx="1365.5" cy="408.3" rx="3.5" ry="1.3" fill="#7a1a10" transform="rotate(46 1365.5 408.3)"/><ellipse cx="1157.9" cy="327.4" rx="3.0" ry="2.1" fill="#2a0402" transform="rotate(17 1157.9 327.4)"/><ellipse cx="1337.9" cy="414.3" rx="2.7" ry="1.6" fill="#2a0402" transform="rotate(-38 1337.9 414.3)"/><ellipse cx="1197.2" cy="401.2" rx="3.8" ry="1.4" fill="#1a0200" transform="rotate(58 1197.2 401.2)"/><ellipse cx="1382.3" cy="353.7" rx="1.8" ry="1.2" fill="#5a0f08" transform="rotate(10 1382.3 353.7)"/><ellipse cx="1167.1" cy="356.2" rx="2.1" ry="2.0" fill="#5a0f08" transform="rotate(-6 1167.1 356.2)"/><ellipse cx="1386.5" cy="402.8" rx="3.0" ry="1.5" fill="#5a0f08" transform="rotate(-38 1386.5 402.8)"/><ellipse cx="1149.8" cy="347.2" rx="3.8" ry="1.5" fill="#5a0f08" transform="rotate(-22 1149.8 347.2)"/><ellipse cx="1388.8" cy="323.7" rx="1.9" ry="2.0" fill="#2a0402" transform="rotate(-32 1388.8 323.7)"/><ellipse cx="1167.2" cy="312.8" rx="2.0" ry="1.3" fill="#2a0402" transform="rotate(23 1167.2 312.8)"/><ellipse cx="1359.8" cy="291.6" rx="1.8" ry="1.4" fill="#5a0f08" transform="rotate(-31 1359.8 291.6)"/><ellipse cx="1189.2" cy="311.7" rx="3.1" ry="1.7" fill="#5a0f08" transform="rotate(22 1189.2 311.7)"/><ellipse cx="1373.1" cy="364.2" rx="2.4" ry="1.0" fill="#1a0200" transform="rotate(-7 1373.1 364.2)"/><ellipse cx="1146.7" cy="395.6" rx="3.6" ry="1.5" fill="#5a0f08" transform="rotate(-28 1146.7 395.6)"/><ellipse cx="1398.9" cy="377.2" rx="1.8" ry="1.9" fill="#7a1a10" transform="rotate(-18 1398.9 377.2)"/><ellipse cx="1208.7" cy="351.0" rx="1.7" ry="1.8" fill="#1a0200" transform="rotate(44 1208.7 351.0)"/><ellipse cx="1346.1" cy="322.9" rx="2.2" ry="1.0" fill="#1a0200" transform="rotate(-3 1346.1 322.9)"/><ellipse cx="1178.6" cy="406.9" rx="2.5" ry="1.5" fill="#1a0200" transform="rotate(39 1178.6 406.9)"/><ellipse cx="1350.2" cy="288.9" rx="3.3" ry="1.6" fill="#1a0200" transform="rotate(10 1350.2 288.9)"/><ellipse cx="1187.7" cy="322.4" rx="2.1" ry="1.4" fill="#1a0200" transform="rotate(51 1187.7 322.4)"/><ellipse cx="1365.6" cy="358.2" rx="3.3" ry="1.4" fill="#1a0200" transform="rotate(8 1365.6 358.2)"/><ellipse cx="1159.5" cy="382.5" rx="2.8" ry="1.3" fill="#2a0402" transform="rotate(-21 1159.5 382.5)"/><ellipse cx="1347.3" cy="411.4" rx="2.6" ry="1.6" fill="#7a1a10" transform="rotate(-36 1347.3 411.4)"/><ellipse cx="1169.9" cy="364.7" rx="1.5" ry="0.9" fill="#7a1a10" transform="rotate(24 1169.9 364.7)"/><ellipse cx="1347.6" cy="374.2" rx="1.5" ry="1.6" fill="#2a0402" transform="rotate(51 1347.6 374.2)"/><ellipse cx="1200.3" cy="355.8" rx="2.3" ry="0.9" fill="#1a0200" transform="rotate(22 1200.3 355.8)"/><ellipse cx="1352.1" cy="313.9" rx="1.8" ry="1.0" fill="#1a0200" transform="rotate(-8 1352.1 313.9)"/><ellipse cx="1160.3" cy="421.5" rx="1.7" ry="1.6" fill="#5a0f08" transform="rotate(20 1160.3 421.5)"/><ellipse cx="1353.3" cy="313.5" rx="2.2" ry="1.3" fill="#2a0402" transform="rotate(-48 1353.3 313.5)"/><ellipse cx="1189.4" cy="390.3" rx="1.8" ry="1.4" fill="#2a0402" transform="rotate(-21 1189.4 390.3)"/><ellipse cx="1389.4" cy="299.6" rx="3.1" ry="1.2" fill="#5a0f08" transform="rotate(-15 1389.4 299.6)"/><ellipse cx="1200.4" cy="389.5" rx="2.6" ry="1.8" fill="#7a1a10" transform="rotate(57 1200.4 389.5)"/><ellipse cx="1366.1" cy="319.0" rx="2.0" ry="2.1" fill="#5a0f08" transform="rotate(-54 1366.1 319.0)"/><ellipse cx="1154.2" cy="374.1" rx="1.8" ry="1.9" fill="#5a0f08" transform="rotate(42 1154.2 374.1)"/><ellipse cx="1386.9" cy="330.5" rx="1.3" ry="1.6" fill="#1a0200" transform="rotate(-36 1386.9 330.5)"/><ellipse cx="1153.5" cy="424.1" rx="3.3" ry="1.5" fill="#1a0200" transform="rotate(-42 1153.5 424.1)"/><ellipse cx="1374.1" cy="374.6" rx="2.9" ry="1.0" fill="#5a0f08" transform="rotate(-50 1374.1 374.6)"/><ellipse cx="1148.3" cy="380.0" rx="1.5" ry="1.8" fill="#7a1a10" transform="rotate(25 1148.3 380.0)"/><ellipse cx="1374.7" cy="373.8" rx="2.4" ry="1.0" fill="#2a0402" transform="rotate(-52 1374.7 373.8)"/><ellipse cx="1188.0" cy="341.0" rx="1.2" ry="1.3" fill="#1a0200" transform="rotate(40 1188.0 341.0)"/><ellipse cx="1361.3" cy="281.6" rx="1.8" ry="0.8" fill="#7a1a10" transform="rotate(52 1361.3 281.6)"/><ellipse cx="1190.6" cy="372.2" rx="2.4" ry="1.1" fill="#2a0402" transform="rotate(-19 1190.6 372.2)"/><ellipse cx="1352.1" cy="337.0" rx="1.5" ry="1.2" fill="#2a0402" transform="rotate(5 1352.1 337.0)"/><ellipse cx="1182.4" cy="322.6" rx="1.3" ry="0.8" fill="#1a0200" transform="rotate(-33 1182.4 322.6)"/><ellipse cx="1367.8" cy="351.1" rx="3.0" ry="2.2" fill="#7a1a10" transform="rotate(19 1367.8 351.1)"/><ellipse cx="1191.5" cy="356.7" rx="2.4" ry="1.2" fill="#2a0402" transform="rotate(-39 1191.5 356.7)"/><ellipse cx="1367.6" cy="354.0" rx="2.0" ry="2.1" fill="#5a0f08" transform="rotate(-7 1367.6 354.0)"/><ellipse cx="1151.3" cy="426.9" rx="1.7" ry="1.3" fill="#1a0200" transform="rotate(-45 1151.3 426.9)"/><ellipse cx="1371.0" cy="346.5" rx="1.9" ry="2.1" fill="#7a1a10" transform="rotate(-58 1371.0 346.5)"/><ellipse cx="1144.5" cy="371.4" rx="1.4" ry="1.5" fill="#7a1a10" transform="rotate(49 1144.5 371.4)"/><ellipse cx="1339.4" cy="375.6" rx="2.1" ry="1.5" fill="#1a0200" transform="rotate(33 1339.4 375.6)"/><ellipse cx="1195.9" cy="325.4" rx="2.8" ry="1.4" fill="#2a0402" transform="rotate(-46 1195.9 325.4)"/><ellipse cx="1383.7" cy="310.4" rx="1.6" ry="1.3" fill="#5a0f08" transform="rotate(16 1383.7 310.4)"/><ellipse cx="1148.5" cy="379.1" rx="2.6" ry="2.1" fill="#2a0402" transform="rotate(-0 1148.5 379.1)"/><ellipse cx="1361.4" cy="349.5" rx="1.4" ry="1.7" fill="#1a0200" transform="rotate(7 1361.4 349.5)"/><ellipse cx="1168.8" cy="348.4" rx="2.9" ry="0.8" fill="#1a0200" transform="rotate(-2 1168.8 348.4)"/><ellipse cx="1380.5" cy="392.2" rx="3.3" ry="1.1" fill="#2a0402" transform="rotate(18 1380.5 392.2)"/><ellipse cx="1192.1" cy="420.7" rx="2.5" ry="1.1" fill="#1a0200" transform="rotate(12 1192.1 420.7)"/><ellipse cx="1382.4" cy="423.7" rx="1.3" ry="1.4" fill="#7a1a10" transform="rotate(-38 1382.4 423.7)"/><ellipse cx="1149.5" cy="306.3" rx="2.6" ry="1.2" fill="#7a1a10" transform="rotate(8 1149.5 306.3)"/><ellipse cx="1359.8" cy="339.2" rx="1.3" ry="1.8" fill="#7a1a10" transform="rotate(-16 1359.8 339.2)"/><ellipse cx="1190.9" cy="320.1" rx="1.8" ry="1.1" fill="#5a0f08" transform="rotate(32 1190.9 320.1)"/><ellipse cx="1338.2" cy="336.6" rx="3.6" ry="1.6" fill="#7a1a10" transform="rotate(-3 1338.2 336.6)"/><ellipse cx="1168.0" cy="354.0" rx="2.4" ry="1.1" fill="#7a1a10" transform="rotate(-53 1168.0 354.0)"/><ellipse cx="1375.2" cy="299.1" rx="1.3" ry="1.6" fill="#2a0402" transform="rotate(58 1375.2 299.1)"/><ellipse cx="1152.1" cy="394.2" rx="3.7" ry="1.0" fill="#5a0f08" transform="rotate(54 1152.1 394.2)"/><ellipse cx="1356.5" cy="402.4" rx="3.7" ry="1.4" fill="#5a0f08" transform="rotate(-41 1356.5 402.4)"/><ellipse cx="1188.6" cy="372.1" rx="2.6" ry="1.7" fill="#2a0402" transform="rotate(-30 1188.6 372.1)"/><ellipse cx="1337.3" cy="416.4" rx="2.1" ry="1.3" fill="#2a0402" transform="rotate(-26 1337.3 416.4)"/><ellipse cx="1148.7" cy="410.5" rx="1.9" ry="1.1" fill="#1a0200" transform="rotate(-32 1148.7 410.5)"/><ellipse cx="1399.1" cy="324.6" rx="2.0" ry="1.1" fill="#5a0f08" transform="rotate(7 1399.1 324.6)"/><ellipse cx="1169.3" cy="354.6" rx="2.0" ry="2.0" fill="#5a0f08" transform="rotate(30 1169.3 354.6)"/><ellipse cx="1393.4" cy="285.5" rx="1.9" ry="1.1" fill="#5a0f08" transform="rotate(-19 1393.4 285.5)"/><ellipse cx="1157.3" cy="309.4" rx="3.0" ry="1.9" fill="#7a1a10" transform="rotate(-9 1157.3 309.4)"/><ellipse cx="1339.9" cy="409.8" rx="1.9" ry="1.2" fill="#5a0f08" transform="rotate(-6 1339.9 409.8)"/><ellipse cx="1156.5" cy="331.4" rx="1.4" ry="1.4" fill="#7a1a10" transform="rotate(26 1156.5 331.4)"/><ellipse cx="1391.6" cy="391.0" rx="1.9" ry="1.8" fill="#2a0402" transform="rotate(-57 1391.6 391.0)"/><ellipse cx="1200.5" cy="330.5" rx="1.7" ry="1.3" fill="#2a0402" transform="rotate(34 1200.5 330.5)"/><ellipse cx="1378.5" cy="285.1" rx="3.7" ry="1.6" fill="#2a0402" transform="rotate(-2 1378.5 285.1)"/><ellipse cx="1194.4" cy="344.3" rx="3.4" ry="1.5" fill="#2a0402" transform="rotate(34 1194.4 344.3)"/><ellipse cx="1361.9" cy="402.3" rx="2.0" ry="2.0" fill="#5a0f08" transform="rotate(42 1361.9 402.3)"/><ellipse cx="1167.8" cy="333.2" rx="2.2" ry="0.8" fill="#1a0200" transform="rotate(-3 1167.8 333.2)"/><ellipse cx="1370.7" cy="342.3" rx="2.5" ry="1.8" fill="#5a0f08" transform="rotate(-32 1370.7 342.3)"/><ellipse cx="1178.1" cy="377.0" rx="1.7" ry="1.8" fill="#1a0200" transform="rotate(-22 1178.1 377.0)"/><ellipse cx="1361.4" cy="275.7" rx="1.8" ry="1.3" fill="#2a0402" transform="rotate(58 1361.4 275.7)"/><ellipse cx="1146.5" cy="335.7" rx="1.5" ry="1.9" fill="#7a1a10" transform="rotate(-18 1146.5 335.7)"/><ellipse cx="1369.9" cy="276.3" rx="2.5" ry="1.4" fill="#2a0402" transform="rotate(-47 1369.9 276.3)"/><ellipse cx="1193.4" cy="377.9" rx="1.8" ry="0.9" fill="#2a0402" transform="rotate(19 1193.4 377.9)"/><ellipse cx="1338.0" cy="306.4" rx="3.2" ry="0.9" fill="#5a0f08" transform="rotate(-21 1338.0 306.4)"/><ellipse cx="1172.4" cy="424.0" rx="2.1" ry="1.3" fill="#2a0402" transform="rotate(43 1172.4 424.0)"/><ellipse cx="1385.1" cy="371.2" rx="1.2" ry="1.9" fill="#7a1a10" transform="rotate(-45 1385.1 371.2)"/><ellipse cx="1198.9" cy="345.4" rx="2.7" ry="1.7" fill="#5a0f08" transform="rotate(14 1198.9 345.4)"/><ellipse cx="1400.0" cy="320.1" rx="3.0" ry="0.9" fill="#5a0f08" transform="rotate(5 1400.0 320.1)"/><ellipse cx="1165.0" cy="398.6" rx="1.9" ry="2.1" fill="#1a0200" transform="rotate(-25 1165.0 398.6)"/><ellipse cx="1360.1" cy="386.9" rx="1.7" ry="1.3" fill="#5a0f08" transform="rotate(51 1360.1 386.9)"/><ellipse cx="1191.2" cy="367.4" rx="2.3" ry="2.1" fill="#7a1a10" transform="rotate(39 1191.2 367.4)"/><ellipse cx="1400.5" cy="368.3" rx="1.2" ry="1.8" fill="#7a1a10" transform="rotate(54 1400.5 368.3)"/><ellipse cx="1185.9" cy="347.4" rx="3.0" ry="1.6" fill="#7a1a10" transform="rotate(4 1185.9 347.4)"/><ellipse cx="1388.1" cy="390.8" rx="3.3" ry="2.0" fill="#1a0200" transform="rotate(-50 1388.1 390.8)"/><ellipse cx="1188.6" cy="399.5" rx="3.4" ry="1.4" fill="#5a0f08" transform="rotate(-36 1188.6 399.5)"/><ellipse cx="1354.4" cy="294.8" rx="2.8" ry="1.6" fill="#2a0402" transform="rotate(59 1354.4 294.8)"/><ellipse cx="1204.8" cy="371.9" rx="1.9" ry="1.7" fill="#2a0402" transform="rotate(-25 1204.8 371.9)"/><ellipse cx="1382.2" cy="396.1" rx="3.1" ry="0.8" fill="#7a1a10" transform="rotate(-24 1382.2 396.1)"/><ellipse cx="1182.5" cy="414.1" rx="3.0" ry="1.9" fill="#5a0f08" transform="rotate(15 1182.5 414.1)"/><ellipse cx="1376.9" cy="349.0" rx="3.6" ry="1.5" fill="#1a0200" transform="rotate(-31 1376.9 349.0)"/><ellipse cx="1156.3" cy="285.2" rx="3.7" ry="0.9" fill="#2a0402" transform="rotate(-39 1156.3 285.2)"/><ellipse cx="1369.2" cy="323.7" rx="1.7" ry="1.3" fill="#5a0f08" transform="rotate(-3 1369.2 323.7)"/><ellipse cx="1176.6" cy="359.1" rx="1.2" ry="1.6" fill="#1a0200" transform="rotate(-43 1176.6 359.1)"/><ellipse cx="1356.0" cy="312.1" rx="3.6" ry="1.9" fill="#7a1a10" transform="rotate(-42 1356.0 312.1)"/><ellipse cx="1171.3" cy="383.2" rx="1.4" ry="2.1" fill="#2a0402" transform="rotate(52 1171.3 383.2)"/><ellipse cx="1384.9" cy="367.0" rx="3.9" ry="1.2" fill="#1a0200" transform="rotate(-16 1384.9 367.0)"/><ellipse cx="1143.5" cy="421.6" rx="3.4" ry="1.4" fill="#2a0402" transform="rotate(-12 1143.5 421.6)"/><ellipse cx="1397.4" cy="388.2" rx="3.1" ry="2.0" fill="#2a0402" transform="rotate(54 1397.4 388.2)"/><ellipse cx="1205.2" cy="307.0" rx="3.7" ry="1.3" fill="#7a1a10" transform="rotate(29 1205.2 307.0)"/><ellipse cx="1401.0" cy="378.7" rx="2.2" ry="1.5" fill="#7a1a10" transform="rotate(-16 1401.0 378.7)"/><ellipse cx="1166.5" cy="370.3" rx="1.8" ry="2.0" fill="#2a0402" transform="rotate(-31 1166.5 370.3)"/><ellipse cx="1347.0" cy="314.2" rx="1.6" ry="2.0" fill="#7a1a10" transform="rotate(46 1347.0 314.2)"/><ellipse cx="1153.9" cy="401.6" rx="3.5" ry="2.2" fill="#7a1a10" transform="rotate(-49 1153.9 401.6)"/><ellipse cx="1362.4" cy="290.8" rx="3.6" ry="1.7" fill="#1a0200" transform="rotate(39 1362.4 290.8)"/><ellipse cx="1166.5" cy="324.5" rx="3.7" ry="1.7" fill="#7a1a10" transform="rotate(17 1166.5 324.5)"/><ellipse cx="1390.1" cy="297.9" rx="2.2" ry="0.9" fill="#1a0200" transform="rotate(46 1390.1 297.9)"/><ellipse cx="1193.1" cy="320.9" rx="1.7" ry="1.8" fill="#7a1a10" transform="rotate(18 1193.1 320.9)"/><ellipse cx="1350.9" cy="382.3" rx="2.7" ry="1.3" fill="#1a0200" transform="rotate(-6 1350.9 382.3)"/><ellipse cx="1185.8" cy="390.5" rx="4.0" ry="1.0" fill="#2a0402" transform="rotate(19 1185.8 390.5)"/><ellipse cx="1376.6" cy="402.1" rx="1.3" ry="1.9" fill="#1a0200" transform="rotate(-23 1376.6 402.1)"/><ellipse cx="1166.5" cy="389.3" rx="1.6" ry="2.1" fill="#5a0f08" transform="rotate(37 1166.5 389.3)"/><ellipse cx="1369.1" cy="387.5" rx="2.3" ry="1.5" fill="#5a0f08" transform="rotate(21 1369.1 387.5)"/><ellipse cx="1181.7" cy="395.2" rx="2.5" ry="1.1" fill="#1a0200" transform="rotate(-59 1181.7 395.2)"/><ellipse cx="1375.6" cy="347.7" rx="1.4" ry="1.4" fill="#2a0402" transform="rotate(15 1375.6 347.7)"/><ellipse cx="1163.8" cy="399.7" rx="2.2" ry="2.1" fill="#7a1a10" transform="rotate(43 1163.8 399.7)"/><ellipse cx="1368.5" cy="304.0" rx="3.1" ry="1.4" fill="#2a0402" transform="rotate(-28 1368.5 304.0)"/><ellipse cx="1147.5" cy="314.5" rx="2.7" ry="1.2" fill="#5a0f08" transform="rotate(10 1147.5 314.5)"/><ellipse cx="1379.9" cy="323.0" rx="2.3" ry="2.2" fill="#2a0402" transform="rotate(-42 1379.9 323.0)"/><ellipse cx="1184.2" cy="376.2" rx="1.5" ry="1.3" fill="#2a0402" transform="rotate(-40 1184.2 376.2)"/><ellipse cx="1404.4" cy="342.9" rx="3.7" ry="1.9" fill="#5a0f08" transform="rotate(-14 1404.4 342.9)"/><ellipse cx="1202.5" cy="394.7" rx="1.5" ry="0.9" fill="#2a0402" transform="rotate(7 1202.5 394.7)"/><ellipse cx="1357.2" cy="399.1" rx="1.8" ry="1.4" fill="#2a0402" transform="rotate(23 1357.2 399.1)"/><ellipse cx="1147.8" cy="351.5" rx="3.0" ry="1.0" fill="#5a0f08" transform="rotate(17 1147.8 351.5)"/><ellipse cx="1355.4" cy="407.2" rx="1.4" ry="2.0" fill="#1a0200" transform="rotate(39 1355.4 407.2)"/><ellipse cx="1166.4" cy="290.2" rx="1.7" ry="1.7" fill="#2a0402" transform="rotate(-6 1166.4 290.2)"/><ellipse cx="1389.9" cy="310.2" rx="1.5" ry="1.0" fill="#5a0f08" transform="rotate(7 1389.9 310.2)"/><ellipse cx="1200.8" cy="382.5" rx="2.8" ry="1.4" fill="#2a0402" transform="rotate(-25 1200.8 382.5)"/><ellipse cx="1366.7" cy="349.8" rx="1.9" ry="1.4" fill="#5a0f08" transform="rotate(-33 1366.7 349.8)"/><ellipse cx="1201.5" cy="420.8" rx="1.9" ry="1.0" fill="#7a1a10" transform="rotate(-57 1201.5 420.8)"/><ellipse cx="1363.0" cy="399.0" rx="2.7" ry="2.0" fill="#5a0f08" transform="rotate(-49 1363.0 399.0)"/><ellipse cx="1204.3" cy="284.4" rx="3.9" ry="1.1" fill="#1a0200" transform="rotate(-4 1204.3 284.4)"/><ellipse cx="1384.9" cy="318.5" rx="3.5" ry="1.0" fill="#1a0200" transform="rotate(11 1384.9 318.5)"/><ellipse cx="1147.1" cy="418.4" rx="2.1" ry="0.9" fill="#1a0200" transform="rotate(-46 1147.1 418.4)"/><ellipse cx="1396.3" cy="377.4" rx="2.9" ry="1.5" fill="#2a0402" transform="rotate(42 1396.3 377.4)"/><ellipse cx="1197.3" cy="385.1" rx="2.3" ry="1.2" fill="#5a0f08" transform="rotate(41 1197.3 385.1)"/><ellipse cx="1360.6" cy="371.8" rx="1.4" ry="1.9" fill="#1a0200" transform="rotate(6 1360.6 371.8)"/><ellipse cx="1184.4" cy="302.8" rx="1.9" ry="1.8" fill="#5a0f08" transform="rotate(-1 1184.4 302.8)"/><ellipse cx="1371.6" cy="288.4" rx="2.1" ry="0.9" fill="#1a0200" transform="rotate(22 1371.6 288.4)"/><ellipse cx="1155.9" cy="356.1" rx="2.8" ry="1.4" fill="#1a0200" transform="rotate(35 1155.9 356.1)"/><ellipse cx="1392.9" cy="296.4" rx="3.2" ry="1.7" fill="#2a0402" transform="rotate(-31 1392.9 296.4)"/><ellipse cx="1176.4" cy="346.6" rx="3.3" ry="1.4" fill="#7a1a10" transform="rotate(29 1176.4 346.6)"/><ellipse cx="1371.9" cy="320.0" rx="2.3" ry="1.3" fill="#1a0200" transform="rotate(-51 1371.9 320.0)"/><ellipse cx="1197.3" cy="370.7" rx="2.1" ry="0.9" fill="#7a1a10" transform="rotate(13 1197.3 370.7)"/><ellipse cx="1354.2" cy="344.2" rx="1.5" ry="1.1" fill="#7a1a10" transform="rotate(-41 1354.2 344.2)"/><ellipse cx="1150.1" cy="335.8" rx="2.6" ry="1.8" fill="#1a0200" transform="rotate(-58 1150.1 335.8)"/><ellipse cx="1397.4" cy="421.6" rx="3.1" ry="1.2" fill="#5a0f08" transform="rotate(11 1397.4 421.6)"/><ellipse cx="1155.4" cy="286.3" rx="2.5" ry="1.5" fill="#7a1a10" transform="rotate(43 1155.4 286.3)"/><ellipse cx="1366.1" cy="277.2" rx="3.3" ry="1.3" fill="#7a1a10" transform="rotate(-6 1366.1 277.2)"/><ellipse cx="1159.1" cy="402.8" rx="3.1" ry="1.7" fill="#2a0402" transform="rotate(21 1159.1 402.8)"/><ellipse cx="1360.7" cy="372.4" rx="3.9" ry="1.9" fill="#1a0200" transform="rotate(15 1360.7 372.4)"/><ellipse cx="1163.4" cy="374.1" rx="3.0" ry="1.6" fill="#7a1a10" transform="rotate(-20 1163.4 374.1)"/><ellipse cx="1336.2" cy="331.4" rx="3.2" ry="2.1" fill="#1a0200" transform="rotate(53 1336.2 331.4)"/><ellipse cx="1143.5" cy="316.6" rx="2.1" ry="1.5" fill="#7a1a10" transform="rotate(16 1143.5 316.6)"/><ellipse cx="1336.5" cy="401.5" rx="2.0" ry="2.1" fill="#5a0f08" transform="rotate(20 1336.5 401.5)"/><ellipse cx="1159.3" cy="343.9" rx="2.6" ry="0.9" fill="#2a0402" transform="rotate(-30 1159.3 343.9)"/><ellipse cx="1337.3" cy="378.0" rx="2.1" ry="1.9" fill="#2a0402" transform="rotate(-10 1337.3 378.0)"/><ellipse cx="1205.5" cy="330.1" rx="2.5" ry="2.0" fill="#5a0f08" transform="rotate(-14 1205.5 330.1)"/><ellipse cx="1394.6" cy="398.4" rx="1.7" ry="2.1" fill="#1a0200" transform="rotate(-15 1394.6 398.4)"/><ellipse cx="1165.0" cy="294.9" rx="3.6" ry="1.4" fill="#1a0200" transform="rotate(40 1165.0 294.9)"/><ellipse cx="1360.6" cy="288.9" rx="3.9" ry="1.5" fill="#1a0200" transform="rotate(15 1360.6 288.9)"/><ellipse cx="1177.3" cy="353.8" rx="2.3" ry="1.1" fill="#2a0402" transform="rotate(48 1177.3 353.8)"/><ellipse cx="1375.5" cy="312.5" rx="3.8" ry="1.1" fill="#5a0f08" transform="rotate(57 1375.5 312.5)"/><ellipse cx="1191.4" cy="395.7" rx="2.7" ry="1.8" fill="#5a0f08" transform="rotate(-36 1191.4 395.7)"/><ellipse cx="1380.5" cy="323.0" rx="3.8" ry="1.1" fill="#5a0f08" transform="rotate(-12 1380.5 323.0)"/><ellipse cx="1143.7" cy="396.0" rx="3.8" ry="0.9" fill="#7a1a10" transform="rotate(60 1143.7 396.0)"/><ellipse cx="1361.9" cy="355.1" rx="2.1" ry="1.6" fill="#2a0402" transform="rotate(43 1361.9 355.1)"/><ellipse cx="1189.7" cy="308.6" rx="3.1" ry="1.6" fill="#7a1a10" transform="rotate(-33 1189.7 308.6)"/><ellipse cx="1367.3" cy="380.9" rx="3.1" ry="2.2" fill="#2a0402" transform="rotate(-3 1367.3 380.9)"/><ellipse cx="1150.7" cy="353.2" rx="1.7" ry="1.7" fill="#2a0402" transform="rotate(-20 1150.7 353.2)"/><ellipse cx="1394.3" cy="315.8" rx="3.8" ry="1.2" fill="#1a0200" transform="rotate(-39 1394.3 315.8)"/><ellipse cx="1172.3" cy="298.9" rx="1.6" ry="1.5" fill="#1a0200" transform="rotate(11 1172.3 298.9)"/><ellipse cx="1372.1" cy="379.2" rx="3.7" ry="1.4" fill="#2a0402" transform="rotate(35 1372.1 379.2)"/><ellipse cx="1158.4" cy="424.0" rx="1.5" ry="1.6" fill="#2a0402" transform="rotate(41 1158.4 424.0)"/><ellipse cx="1372.1" cy="347.7" rx="1.9" ry="1.2" fill="#5a0f08" transform="rotate(-26 1372.1 347.7)"/><ellipse cx="1195.7" cy="291.4" rx="1.2" ry="1.7" fill="#2a0402" transform="rotate(35 1195.7 291.4)"/><ellipse cx="1402.3" cy="382.6" rx="1.6" ry="1.5" fill="#5a0f08" transform="rotate(-27 1402.3 382.6)"/><ellipse cx="1184.1" cy="382.9" rx="1.4" ry="1.1" fill="#7a1a10" transform="rotate(40 1184.1 382.9)"/><ellipse cx="1374.9" cy="317.1" rx="3.9" ry="1.0" fill="#1a0200" transform="rotate(-58 1374.9 317.1)"/><ellipse cx="1191.8" cy="305.4" rx="3.4" ry="1.7" fill="#2a0402" transform="rotate(-10 1191.8 305.4)"/><ellipse cx="1367.0" cy="418.0" rx="3.9" ry="1.9" fill="#5a0f08" transform="rotate(-49 1367.0 418.0)"/><ellipse cx="1193.7" cy="373.8" rx="2.6" ry="0.8" fill="#5a0f08" transform="rotate(7 1193.7 373.8)"/><ellipse cx="1392.9" cy="363.4" rx="2.9" ry="1.7" fill="#2a0402" transform="rotate(29 1392.9 363.4)"/><ellipse cx="1175.9" cy="380.6" rx="1.7" ry="1.3" fill="#2a0402" transform="rotate(-18 1175.9 380.6)"/><ellipse cx="1337.7" cy="340.1" rx="2.4" ry="1.3" fill="#2a0402" transform="rotate(-56 1337.7 340.1)"/><ellipse cx="1179.3" cy="301.1" rx="3.8" ry="0.9" fill="#7a1a10" transform="rotate(39 1179.3 301.1)"/><ellipse cx="1367.3" cy="287.6" rx="2.0" ry="0.9" fill="#7a1a10" transform="rotate(-27 1367.3 287.6)"/><ellipse cx="1157.8" cy="425.6" rx="2.2" ry="2.0" fill="#7a1a10" transform="rotate(-36 1157.8 425.6)"/><ellipse cx="1362.1" cy="370.1" rx="1.3" ry="1.5" fill="#7a1a10" transform="rotate(-26 1362.1 370.1)"/><ellipse cx="1181.4" cy="385.8" rx="3.2" ry="1.3" fill="#1a0200" transform="rotate(-5 1181.4 385.8)"/><ellipse cx="1380.5" cy="282.8" rx="2.6" ry="1.5" fill="#5a0f08" transform="rotate(10 1380.5 282.8)"/><ellipse cx="1153.0" cy="326.1" rx="1.4" ry="2.2" fill="#7a1a10" transform="rotate(-29 1153.0 326.1)"/><ellipse cx="1402.6" cy="379.9" rx="1.2" ry="0.8" fill="#7a1a10" transform="rotate(-49 1402.6 379.9)"/><ellipse cx="1182.0" cy="325.2" rx="3.9" ry="2.1" fill="#5a0f08" transform="rotate(10 1182.0 325.2)"/><ellipse cx="1344.7" cy="397.9" rx="1.7" ry="1.0" fill="#5a0f08" transform="rotate(7 1344.7 397.9)"/><ellipse cx="1187.6" cy="375.9" rx="3.6" ry="2.0" fill="#1a0200" transform="rotate(49 1187.6 375.9)"/><ellipse cx="1382.8" cy="322.3" rx="2.1" ry="1.7" fill="#1a0200" transform="rotate(22 1382.8 322.3)"/><ellipse cx="1178.3" cy="382.2" rx="1.7" ry="1.9" fill="#5a0f08" transform="rotate(-26 1178.3 382.2)"/><ellipse cx="1399.5" cy="411.2" rx="3.3" ry="1.4" fill="#1a0200" transform="rotate(-4 1399.5 411.2)"/><ellipse cx="1189.0" cy="294.4" rx="3.7" ry="1.4" fill="#7a1a10" transform="rotate(-6 1189.0 294.4)"/><ellipse cx="1395.5" cy="353.3" rx="2.2" ry="2.1" fill="#1a0200" transform="rotate(-56 1395.5 353.3)"/><ellipse cx="1159.9" cy="401.4" rx="1.5" ry="0.9" fill="#1a0200" transform="rotate(-15 1159.9 401.4)"/><ellipse cx="1373.1" cy="362.5" rx="3.2" ry="1.2" fill="#2a0402" transform="rotate(43 1373.1 362.5)"/><ellipse cx="1156.5" cy="365.3" rx="2.5" ry="2.1" fill="#7a1a10" transform="rotate(-32 1156.5 365.3)"/><ellipse cx="1392.2" cy="334.4" rx="2.2" ry="1.9" fill="#7a1a10" transform="rotate(53 1392.2 334.4)"/><ellipse cx="1158.7" cy="308.0" rx="3.8" ry="2.1" fill="#5a0f08" transform="rotate(60 1158.7 308.0)"/><ellipse cx="1340.7" cy="381.8" rx="3.3" ry="1.4" fill="#5a0f08" transform="rotate(1 1340.7 381.8)"/><ellipse cx="1174.2" cy="298.3" rx="3.0" ry="1.8" fill="#1a0200" transform="rotate(-32 1174.2 298.3)"/><ellipse cx="1370.0" cy="407.7" rx="1.4" ry="1.1" fill="#7a1a10" transform="rotate(48 1370.0 407.7)"/><ellipse cx="1192.5" cy="299.6" rx="2.3" ry="2.1" fill="#2a0402" transform="rotate(38 1192.5 299.6)"/><ellipse cx="1385.8" cy="388.7" rx="3.8" ry="1.4" fill="#2a0402" transform="rotate(12 1385.8 388.7)"/><ellipse cx="1151.0" cy="369.2" rx="3.0" ry="1.3" fill="#5a0f08" transform="rotate(22 1151.0 369.2)"/><ellipse cx="1375.2" cy="403.9" rx="3.2" ry="2.0" fill="#2a0402" transform="rotate(-3 1375.2 403.9)"/><ellipse cx="1179.6" cy="335.3" rx="2.7" ry="1.4" fill="#2a0402" transform="rotate(38 1179.6 335.3)"/><ellipse cx="1336.2" cy="409.6" rx="2.1" ry="1.7" fill="#7a1a10" transform="rotate(12 1336.2 409.6)"/><ellipse cx="1152.1" cy="333.8" rx="2.9" ry="2.0" fill="#7a1a10" transform="rotate(-47 1152.1 333.8)"/><ellipse cx="1371.7" cy="396.3" rx="1.9" ry="2.0" fill="#2a0402" transform="rotate(41 1371.7 396.3)"/><ellipse cx="1185.3" cy="397.8" rx="2.0" ry="2.0" fill="#5a0f08" transform="rotate(4 1185.3 397.8)"/><ellipse cx="1337.6" cy="287.8" rx="3.3" ry="2.0" fill="#7a1a10" transform="rotate(5 1337.6 287.8)"/><ellipse cx="1150.6" cy="368.0" rx="4.0" ry="1.1" fill="#7a1a10" transform="rotate(42 1150.6 368.0)"/><ellipse cx="1381.5" cy="327.2" rx="1.9" ry="1.8" fill="#7a1a10" transform="rotate(-51 1381.5 327.2)"/><ellipse cx="1206.0" cy="339.9" rx="1.8" ry="1.1" fill="#7a1a10" transform="rotate(-36 1206.0 339.9)"/><ellipse cx="1336.0" cy="383.0" rx="3.3" ry="0.9" fill="#2a0402" transform="rotate(-19 1336.0 383.0)"/><ellipse cx="1150.2" cy="357.1" rx="2.5" ry="1.2" fill="#1a0200" transform="rotate(6 1150.2 357.1)"/><ellipse cx="1360.4" cy="402.4" rx="2.4" ry="1.5" fill="#7a1a10" transform="rotate(56 1360.4 402.4)"/><ellipse cx="1167.8" cy="317.9" rx="3.3" ry="1.4" fill="#1a0200" transform="rotate(-58 1167.8 317.9)"/><ellipse cx="1366.8" cy="356.4" rx="1.5" ry="1.0" fill="#1a0200" transform="rotate(-1 1366.8 356.4)"/><ellipse cx="1160.0" cy="367.0" rx="3.5" ry="1.6" fill="#2a0402" transform="rotate(58 1160.0 367.0)"/><ellipse cx="1392.4" cy="362.1" rx="2.7" ry="1.9" fill="#1a0200" transform="rotate(26 1392.4 362.1)"/><ellipse cx="1175.5" cy="407.4" rx="1.3" ry="2.0" fill="#5a0f08" transform="rotate(18 1175.5 407.4)"/><ellipse cx="1365.8" cy="411.7" rx="3.0" ry="1.8" fill="#5a0f08" transform="rotate(-22 1365.8 411.7)"/><ellipse cx="1162.0" cy="334.9" rx="1.8" ry="1.0" fill="#2a0402" transform="rotate(0 1162.0 334.9)"/><ellipse cx="1404.5" cy="288.4" rx="1.4" ry="1.1" fill="#1a0200" transform="rotate(-33 1404.5 288.4)"/><ellipse cx="1195.7" cy="338.1" rx="1.3" ry="1.2" fill="#5a0f08" transform="rotate(24 1195.7 338.1)"/><ellipse cx="1396.5" cy="396.8" rx="2.9" ry="2.0" fill="#2a0402" transform="rotate(-51 1396.5 396.8)"/><ellipse cx="1183.0" cy="389.3" rx="1.8" ry="2.1" fill="#2a0402" transform="rotate(35 1183.0 389.3)"/><ellipse cx="1368.9" cy="350.7" rx="1.4" ry="1.1" fill="#5a0f08" transform="rotate(-34 1368.9 350.7)"/><ellipse cx="1182.7" cy="338.4" rx="4.0" ry="1.7" fill="#2a0402" transform="rotate(-14 1182.7 338.4)"/><ellipse cx="1337.9" cy="345.8" rx="1.6" ry="2.1" fill="#1a0200" transform="rotate(20 1337.9 345.8)"/><ellipse cx="1198.4" cy="378.9" rx="2.5" ry="1.8" fill="#1a0200" transform="rotate(59 1198.4 378.9)"/><ellipse cx="1385.3" cy="282.7" rx="2.5" ry="2.1" fill="#1a0200" transform="rotate(54 1385.3 282.7)"/><ellipse cx="1144.5" cy="399.7" rx="1.8" ry="0.9" fill="#1a0200" transform="rotate(56 1144.5 399.7)"/><ellipse cx="1345.8" cy="347.0" rx="4.0" ry="1.6" fill="#1a0200" transform="rotate(-45 1345.8 347.0)"/><ellipse cx="1185.8" cy="304.7" rx="3.5" ry="1.7" fill="#2a0402" transform="rotate(12 1185.8 304.7)"/><ellipse cx="1370.1" cy="411.0" rx="1.8" ry="1.5" fill="#7a1a10" transform="rotate(30 1370.1 411.0)"/><ellipse cx="1160.1" cy="291.5" rx="4.0" ry="1.2" fill="#1a0200" transform="rotate(58 1160.1 291.5)"/><ellipse cx="1403.8" cy="307.5" rx="2.2" ry="2.1" fill="#2a0402" transform="rotate(27 1403.8 307.5)"/><ellipse cx="1176.8" cy="310.2" rx="3.7" ry="1.6" fill="#2a0402" transform="rotate(-34 1176.8 310.2)"/><ellipse cx="1352.7" cy="367.5" rx="1.7" ry="2.0" fill="#5a0f08" transform="rotate(-23 1352.7 367.5)"/><ellipse cx="1154.8" cy="324.7" rx="1.6" ry="1.3" fill="#2a0402" transform="rotate(58 1154.8 324.7)"/><ellipse cx="1349.2" cy="382.5" rx="3.8" ry="1.7" fill="#7a1a10" transform="rotate(-20 1349.2 382.5)"/><ellipse cx="1199.2" cy="371.2" rx="2.3" ry="0.9" fill="#2a0402" transform="rotate(-18 1199.2 371.2)"/><ellipse cx="1336.2" cy="335.2" rx="3.7" ry="1.0" fill="#5a0f08" transform="rotate(-44 1336.2 335.2)"/><ellipse cx="1160.9" cy="371.8" rx="1.5" ry="1.4" fill="#7a1a10" transform="rotate(-48 1160.9 371.8)"/><ellipse cx="1395.2" cy="280.9" rx="1.8" ry="2.2" fill="#7a1a10" transform="rotate(12 1395.2 280.9)"/><ellipse cx="1182.0" cy="363.5" rx="3.3" ry="1.8" fill="#1a0200" transform="rotate(20 1182.0 363.5)"/><ellipse cx="1386.0" cy="343.3" rx="3.4" ry="1.0" fill="#5a0f08" transform="rotate(8 1386.0 343.3)"/><ellipse cx="1182.8" cy="307.1" rx="3.1" ry="1.0" fill="#7a1a10" transform="rotate(-23 1182.8 307.1)"/><ellipse cx="1347.1" cy="387.1" rx="1.8" ry="2.1" fill="#7a1a10" transform="rotate(52 1347.1 387.1)"/><ellipse cx="1156.4" cy="366.0" rx="1.7" ry="1.4" fill="#1a0200" transform="rotate(-23 1156.4 366.0)"/><ellipse cx="1352.4" cy="318.1" rx="2.0" ry="1.5" fill="#1a0200" transform="rotate(2 1352.4 318.1)"/><ellipse cx="1178.1" cy="411.3" rx="2.4" ry="1.6" fill="#1a0200" transform="rotate(28 1178.1 411.3)"/><ellipse cx="1386.7" cy="334.5" rx="1.7" ry="1.9" fill="#5a0f08" transform="rotate(-18 1386.7 334.5)"/><ellipse cx="1187.0" cy="289.9" rx="3.4" ry="2.1" fill="#2a0402" transform="rotate(-47 1187.0 289.9)"/><ellipse cx="1405.1" cy="307.3" rx="3.0" ry="1.3" fill="#5a0f08" transform="rotate(27 1405.1 307.3)"/><ellipse cx="1185.2" cy="325.2" rx="3.4" ry="1.1" fill="#2a0402" transform="rotate(56 1185.2 325.2)"/><ellipse cx="1346.6" cy="401.2" rx="3.7" ry="1.7" fill="#1a0200" transform="rotate(-19 1346.6 401.2)"/><ellipse cx="1192.3" cy="419.2" rx="2.6" ry="1.8" fill="#5a0f08" transform="rotate(16 1192.3 419.2)"/><ellipse cx="1354.1" cy="300.7" rx="2.6" ry="1.8" fill="#1a0200" transform="rotate(48 1354.1 300.7)"/><ellipse cx="1193.0" cy="345.0" rx="3.3" ry="1.7" fill="#1a0200" transform="rotate(49 1193.0 345.0)"/><ellipse cx="1338.7" cy="345.2" rx="3.6" ry="2.0" fill="#7a1a10" transform="rotate(5 1338.7 345.2)"/><ellipse cx="1147.9" cy="367.9" rx="2.5" ry="1.9" fill="#2a0402" transform="rotate(60 1147.9 367.9)"/><ellipse cx="1341.2" cy="388.9" rx="4.0" ry="1.2" fill="#5a0f08" transform="rotate(-25 1341.2 388.9)"/><ellipse cx="1152.6" cy="413.8" rx="3.3" ry="2.2" fill="#1a0200" transform="rotate(36 1152.6 413.8)"/><ellipse cx="1404.1" cy="284.7" rx="1.7" ry="1.9" fill="#1a0200" transform="rotate(26 1404.1 284.7)"/><ellipse cx="1197.6" cy="321.0" rx="1.3" ry="2.2" fill="#7a1a10" transform="rotate(-24 1197.6 321.0)"/><ellipse cx="1397.4" cy="405.3" rx="3.9" ry="1.8" fill="#5a0f08" transform="rotate(12 1397.4 405.3)"/><ellipse cx="1185.0" cy="417.5" rx="3.5" ry="1.2" fill="#5a0f08" transform="rotate(-45 1185.0 417.5)"/><ellipse cx="1385.6" cy="418.3" rx="2.1" ry="1.7" fill="#7a1a10" transform="rotate(27 1385.6 418.3)"/><ellipse cx="1159.8" cy="301.9" rx="3.3" ry="1.1" fill="#1a0200" transform="rotate(47 1159.8 301.9)"/><ellipse cx="1373.3" cy="347.9" rx="1.9" ry="0.9" fill="#5a0f08" transform="rotate(-43 1373.3 347.9)"/><ellipse cx="1204.5" cy="343.0" rx="1.3" ry="2.0" fill="#1a0200" transform="rotate(-29 1204.5 343.0)"/><ellipse cx="1355.8" cy="372.8" rx="3.1" ry="1.1" fill="#5a0f08" transform="rotate(-1 1355.8 372.8)"/><ellipse cx="1171.8" cy="360.1" rx="3.7" ry="2.2" fill="#1a0200" transform="rotate(10 1171.8 360.1)"/><ellipse cx="1377.5" cy="288.3" rx="2.4" ry="1.9" fill="#7a1a10" transform="rotate(16 1377.5 288.3)"/><ellipse cx="1159.5" cy="319.9" rx="3.1" ry="1.1" fill="#2a0402" transform="rotate(-59 1159.5 319.9)"/><ellipse cx="1360.9" cy="275.3" rx="2.4" ry="1.0" fill="#5a0f08" transform="rotate(52 1360.9 275.3)"/><ellipse cx="1200.6" cy="335.2" rx="2.8" ry="1.1" fill="#5a0f08" transform="rotate(54 1200.6 335.2)"/><ellipse cx="1386.5" cy="417.2" rx="1.5" ry="1.7" fill="#5a0f08" transform="rotate(5 1386.5 417.2)"/><ellipse cx="1147.3" cy="302.3" rx="1.9" ry="1.4" fill="#2a0402" transform="rotate(4 1147.3 302.3)"/><ellipse cx="1405.8" cy="320.3" rx="1.3" ry="1.6" fill="#2a0402" transform="rotate(36 1405.8 320.3)"/><ellipse cx="1188.9" cy="334.9" rx="3.1" ry="1.9" fill="#2a0402" transform="rotate(14 1188.9 334.9)"/><ellipse cx="1344.3" cy="419.8" rx="2.6" ry="1.9" fill="#2a0402" transform="rotate(42 1344.3 419.8)"/><ellipse cx="1159.2" cy="380.2" rx="3.1" ry="1.9" fill="#7a1a10" transform="rotate(17 1159.2 380.2)"/><ellipse cx="1342.2" cy="349.9" rx="1.3" ry="1.8" fill="#1a0200" transform="rotate(-32 1342.2 349.9)"/><ellipse cx="1162.0" cy="396.9" rx="2.2" ry="1.2" fill="#7a1a10" transform="rotate(8 1162.0 396.9)"/><ellipse cx="1388.5" cy="355.9" rx="1.3" ry="1.5" fill="#7a1a10" transform="rotate(1 1388.5 355.9)"/><ellipse cx="1183.8" cy="421.2" rx="3.6" ry="1.2" fill="#1a0200" transform="rotate(13 1183.8 421.2)"/><ellipse cx="1364.8" cy="300.0" rx="2.5" ry="1.8" fill="#1a0200" transform="rotate(8 1364.8 300.0)"/><ellipse cx="1171.9" cy="333.7" rx="2.4" ry="0.8" fill="#5a0f08" transform="rotate(-15 1171.9 333.7)"/><ellipse cx="1385.6" cy="331.9" rx="1.2" ry="1.1" fill="#5a0f08" transform="rotate(17 1385.6 331.9)"/><ellipse cx="1150.9" cy="396.0" rx="3.6" ry="1.6" fill="#2a0402" transform="rotate(42 1150.9 396.0)"/><ellipse cx="1383.4" cy="406.2" rx="1.9" ry="1.0" fill="#2a0402" transform="rotate(46 1383.4 406.2)"/><ellipse cx="1176.3" cy="367.6" rx="1.7" ry="1.7" fill="#1a0200" transform="rotate(1 1176.3 367.6)"/><ellipse cx="1392.8" cy="415.7" rx="3.2" ry="0.9" fill="#1a0200" transform="rotate(-31 1392.8 415.7)"/><ellipse cx="1192.6" cy="384.4" rx="1.6" ry="2.2" fill="#7a1a10" transform="rotate(26 1192.6 384.4)"/><ellipse cx="1358.5" cy="419.0" rx="2.4" ry="1.7" fill="#7a1a10" transform="rotate(40 1358.5 419.0)"/><ellipse cx="1154.6" cy="299.1" rx="1.8" ry="1.0" fill="#2a0402" transform="rotate(5 1154.6 299.1)"/><ellipse cx="1369.3" cy="330.0" rx="2.6" ry="1.4" fill="#5a0f08" transform="rotate(-10 1369.3 330.0)"/><ellipse cx="1200.2" cy="404.4" rx="3.6" ry="1.8" fill="#5a0f08" transform="rotate(-51 1200.2 404.4)"/><ellipse cx="1364.0" cy="286.8" rx="2.9" ry="1.3" fill="#1a0200" transform="rotate(-20 1364.0 286.8)"/><ellipse cx="1166.9" cy="400.2" rx="1.4" ry="0.8" fill="#7a1a10" transform="rotate(-41 1166.9 400.2)"/><ellipse cx="1367.1" cy="372.6" rx="1.6" ry="1.3" fill="#2a0402" transform="rotate(-5 1367.1 372.6)"/><ellipse cx="1203.8" cy="323.7" rx="2.0" ry="1.6" fill="#1a0200" transform="rotate(-28 1203.8 323.7)"/><ellipse cx="1359.9" cy="342.0" rx="1.7" ry="0.8" fill="#7a1a10" transform="rotate(-19 1359.9 342.0)"/><ellipse cx="1176.0" cy="281.0" rx="2.0" ry="1.1" fill="#2a0402" transform="rotate(-22 1176.0 281.0)"/><ellipse cx="1367.9" cy="395.0" rx="3.0" ry="1.6" fill="#5a0f08" transform="rotate(-29 1367.9 395.0)"/><ellipse cx="1179.0" cy="410.5" rx="2.7" ry="1.3" fill="#5a0f08" transform="rotate(-16 1179.0 410.5)"/><ellipse cx="1355.9" cy="376.6" rx="1.7" ry="2.2" fill="#5a0f08" transform="rotate(-57 1355.9 376.6)"/><ellipse cx="1182.1" cy="381.3" rx="1.3" ry="1.7" fill="#1a0200" transform="rotate(8 1182.1 381.3)"/><ellipse cx="1381.8" cy="281.9" rx="1.3" ry="1.2" fill="#7a1a10" transform="rotate(-6 1381.8 281.9)"/><ellipse cx="1199.7" cy="384.4" rx="2.0" ry="1.4" fill="#1a0200" transform="rotate(-2 1199.7 384.4)"/><ellipse cx="1371.4" cy="382.6" rx="1.6" ry="1.4" fill="#2a0402" transform="rotate(8 1371.4 382.6)"/><ellipse cx="1188.7" cy="319.8" rx="2.5" ry="1.4" fill="#2a0402" transform="rotate(-44 1188.7 319.8)"/><ellipse cx="1397.5" cy="386.9" rx="2.8" ry="1.4" fill="#7a1a10" transform="rotate(12 1397.5 386.9)"/><ellipse cx="1166.8" cy="367.9" rx="1.9" ry="1.1" fill="#5a0f08" transform="rotate(19 1166.8 367.9)"/><ellipse cx="1336.4" cy="327.6" rx="2.8" ry="1.9" fill="#1a0200" transform="rotate(58 1336.4 327.6)"/><ellipse cx="1159.0" cy="285.1" rx="1.5" ry="1.3" fill="#1a0200" transform="rotate(12 1159.0 285.1)"/><ellipse cx="1357.0" cy="339.7" rx="3.3" ry="2.0" fill="#5a0f08" transform="rotate(2 1357.0 339.7)"/><ellipse cx="1191.5" cy="320.7" rx="3.1" ry="2.1" fill="#5a0f08" transform="rotate(-8 1191.5 320.7)"/><ellipse cx="1379.6" cy="279.5" rx="3.1" ry="1.5" fill="#1a0200" transform="rotate(52 1379.6 279.5)"/><ellipse cx="1169.1" cy="344.2" rx="3.8" ry="1.6" fill="#2a0402" transform="rotate(-5 1169.1 344.2)"/><ellipse cx="1369.6" cy="347.9" rx="3.1" ry="1.1" fill="#1a0200" transform="rotate(-46 1369.6 347.9)"/><ellipse cx="1193.8" cy="395.5" rx="3.3" ry="2.1" fill="#5a0f08" transform="rotate(49 1193.8 395.5)"/><ellipse cx="1375.4" cy="312.5" rx="2.7" ry="1.2" fill="#1a0200" transform="rotate(-46 1375.4 312.5)"/><ellipse cx="1158.9" cy="387.0" rx="2.3" ry="1.9" fill="#5a0f08" transform="rotate(14 1158.9 387.0)"/><ellipse cx="1338.9" cy="398.4" rx="2.9" ry="1.8" fill="#7a1a10" transform="rotate(-32 1338.9 398.4)"/><ellipse cx="1197.8" cy="361.4" rx="3.9" ry="0.8" fill="#5a0f08" transform="rotate(50 1197.8 361.4)"/><ellipse cx="1355.4" cy="284.5" rx="2.8" ry="1.0" fill="#7a1a10" transform="rotate(2 1355.4 284.5)"/><ellipse cx="1156.0" cy="332.5" rx="1.4" ry="0.8" fill="#2a0402" transform="rotate(44 1156.0 332.5)"/><ellipse cx="1338.6" cy="419.9" rx="2.8" ry="1.0" fill="#1a0200" transform="rotate(-45 1338.6 419.9)"/><ellipse cx="1208.0" cy="284.5" rx="1.4" ry="1.5" fill="#2a0402" transform="rotate(-22 1208.0 284.5)"/><ellipse cx="1336.5" cy="398.7" rx="3.1" ry="1.0" fill="#1a0200" transform="rotate(-44 1336.5 398.7)"/><ellipse cx="1203.3" cy="322.6" rx="1.8" ry="1.4" fill="#1a0200" transform="rotate(-21 1203.3 322.6)"/><ellipse cx="1369.0" cy="365.1" rx="1.9" ry="1.0" fill="#7a1a10" transform="rotate(24 1369.0 365.1)"/><ellipse cx="1148.4" cy="415.5" rx="2.2" ry="1.7" fill="#2a0402" transform="rotate(24 1148.4 415.5)"/><ellipse cx="1348.8" cy="281.3" rx="4.0" ry="1.8" fill="#1a0200" transform="rotate(24 1348.8 281.3)"/><ellipse cx="1151.2" cy="298.9" rx="1.7" ry="1.4" fill="#2a0402" transform="rotate(-14 1151.2 298.9)"/><ellipse cx="1362.9" cy="323.3" rx="3.3" ry="2.0" fill="#1a0200" transform="rotate(58 1362.9 323.3)"/><ellipse cx="1173.7" cy="415.8" rx="3.0" ry="2.0" fill="#5a0f08" transform="rotate(-8 1173.7 415.8)"/><ellipse cx="1340.7" cy="386.3" rx="2.6" ry="2.0" fill="#2a0402" transform="rotate(46 1340.7 386.3)"/><ellipse cx="1168.3" cy="398.9" rx="2.6" ry="1.7" fill="#5a0f08" transform="rotate(39 1168.3 398.9)"/><ellipse cx="1394.5" cy="282.4" rx="1.3" ry="0.8" fill="#1a0200" transform="rotate(39 1394.5 282.4)"/><ellipse cx="1199.5" cy="342.5" rx="1.4" ry="2.2" fill="#1a0200" transform="rotate(1 1199.5 342.5)"/><ellipse cx="1385.3" cy="359.7" rx="2.6" ry="1.2" fill="#2a0402" transform="rotate(34 1385.3 359.7)"/><ellipse cx="1181.8" cy="304.6" rx="2.7" ry="0.9" fill="#7a1a10" transform="rotate(-39 1181.8 304.6)"/><ellipse cx="1361.5" cy="363.0" rx="2.2" ry="2.1" fill="#5a0f08" transform="rotate(-20 1361.5 363.0)"/><ellipse cx="1171.3" cy="388.5" rx="2.6" ry="1.7" fill="#1a0200" transform="rotate(20 1171.3 388.5)"/><ellipse cx="1403.9" cy="419.6" rx="1.2" ry="1.5" fill="#5a0f08" transform="rotate(21 1403.9 419.6)"/><ellipse cx="1170.8" cy="346.6" rx="1.7" ry="2.0" fill="#7a1a10" transform="rotate(-45 1170.8 346.6)"/><ellipse cx="1386.4" cy="416.2" rx="3.4" ry="2.2" fill="#2a0402" transform="rotate(-43 1386.4 416.2)"/><ellipse cx="1151.1" cy="401.1" rx="1.2" ry="0.9" fill="#5a0f08" transform="rotate(-53 1151.1 401.1)"/><ellipse cx="1356.8" cy="331.0" rx="2.4" ry="0.9" fill="#2a0402" transform="rotate(-55 1356.8 331.0)"/><ellipse cx="1155.8" cy="339.1" rx="3.0" ry="1.0" fill="#7a1a10" transform="rotate(-25 1155.8 339.1)"/><ellipse cx="1345.9" cy="311.6" rx="1.7" ry="0.8" fill="#5a0f08" transform="rotate(-59 1345.9 311.6)"/><ellipse cx="1153.5" cy="370.2" rx="1.8" ry="1.6" fill="#1a0200" transform="rotate(40 1153.5 370.2)"/><ellipse cx="1401.5" cy="293.2" rx="2.0" ry="0.8" fill="#7a1a10" transform="rotate(33 1401.5 293.2)"/><ellipse cx="1190.3" cy="383.7" rx="2.6" ry="2.1" fill="#7a1a10" transform="rotate(-21 1190.3 383.7)"/><ellipse cx="1341.5" cy="405.7" rx="1.6" ry="2.0" fill="#2a0402" transform="rotate(-25 1341.5 405.7)"/><ellipse cx="1169.4" cy="391.3" rx="2.2" ry="1.3" fill="#7a1a10" transform="rotate(-51 1169.4 391.3)"/><ellipse cx="1354.3" cy="422.0" rx="1.9" ry="1.9" fill="#2a0402" transform="rotate(31 1354.3 422.0)"/><ellipse cx="1195.5" cy="363.1" rx="3.1" ry="1.6" fill="#5a0f08" transform="rotate(-24 1195.5 363.1)"/><ellipse cx="1345.6" cy="412.1" rx="3.4" ry="1.5" fill="#2a0402" transform="rotate(-29 1345.6 412.1)"/><ellipse cx="1201.3" cy="386.9" rx="3.8" ry="1.9" fill="#7a1a10" transform="rotate(-27 1201.3 386.9)"/><ellipse cx="1362.0" cy="337.3" rx="2.9" ry="1.4" fill="#1a0200" transform="rotate(-11 1362.0 337.3)"/><ellipse cx="1149.6" cy="409.5" rx="2.3" ry="1.5" fill="#7a1a10" transform="rotate(18 1149.6 409.5)"/><ellipse cx="1352.2" cy="295.2" rx="3.5" ry="1.0" fill="#2a0402" transform="rotate(40 1352.2 295.2)"/><ellipse cx="1175.5" cy="390.5" rx="2.8" ry="1.5" fill="#5a0f08" transform="rotate(-3 1175.5 390.5)"/><ellipse cx="1346.3" cy="401.4" rx="3.1" ry="1.2" fill="#1a0200" transform="rotate(-41 1346.3 401.4)"/><ellipse cx="1152.3" cy="391.3" rx="3.8" ry="1.2" fill="#2a0402" transform="rotate(41 1152.3 391.3)"/><ellipse cx="1358.4" cy="317.6" rx="2.2" ry="1.5" fill="#2a0402" transform="rotate(-37 1358.4 317.6)"/><ellipse cx="1161.1" cy="424.0" rx="1.6" ry="1.6" fill="#7a1a10" transform="rotate(-1 1161.1 424.0)"/><ellipse cx="1341.1" cy="383.4" rx="2.3" ry="2.0" fill="#5a0f08" transform="rotate(-42 1341.1 383.4)"/><ellipse cx="1156.2" cy="360.3" rx="1.8" ry="1.3" fill="#5a0f08" transform="rotate(20 1156.2 360.3)"/><ellipse cx="1357.8" cy="386.6" rx="1.7" ry="2.0" fill="#2a0402" transform="rotate(33 1357.8 386.6)"/><ellipse cx="1161.4" cy="406.3" rx="3.7" ry="1.9" fill="#5a0f08" transform="rotate(-34 1161.4 406.3)"/><ellipse cx="1390.4" cy="286.2" rx="3.7" ry="1.7" fill="#1a0200" transform="rotate(-15 1390.4 286.2)"/><ellipse cx="1202.2" cy="322.7" rx="1.5" ry="0.9" fill="#2a0402" transform="rotate(-23 1202.2 322.7)"/><ellipse cx="1402.2" cy="276.6" rx="2.3" ry="1.8" fill="#5a0f08" transform="rotate(18 1402.2 276.6)"/><ellipse cx="1200.6" cy="422.3" rx="3.6" ry="1.6" fill="#7a1a10" transform="rotate(-32 1200.6 422.3)"/><ellipse cx="1379.8" cy="360.3" rx="3.2" ry="1.7" fill="#1a0200" transform="rotate(-13 1379.8 360.3)"/><ellipse cx="1148.6" cy="424.2" rx="2.1" ry="1.5" fill="#1a0200" transform="rotate(14 1148.6 424.2)"/><ellipse cx="1360.3" cy="312.0" rx="1.8" ry="1.2" fill="#2a0402" transform="rotate(-16 1360.3 312.0)"/><ellipse cx="1174.2" cy="329.7" rx="3.9" ry="1.0" fill="#5a0f08" transform="rotate(9 1174.2 329.7)"/><ellipse cx="1368.2" cy="320.5" rx="2.3" ry="2.1" fill="#7a1a10" transform="rotate(22 1368.2 320.5)"/><ellipse cx="1179.0" cy="283.3" rx="2.8" ry="1.6" fill="#2a0402" transform="rotate(-33 1179.0 283.3)"/><ellipse cx="1349.4" cy="413.5" rx="3.7" ry="1.3" fill="#2a0402" transform="rotate(37 1349.4 413.5)"/><ellipse cx="1182.3" cy="318.2" rx="1.8" ry="1.8" fill="#2a0402" transform="rotate(-59 1182.3 318.2)"/><ellipse cx="1377.1" cy="314.0" rx="3.3" ry="2.0" fill="#7a1a10" transform="rotate(34 1377.1 314.0)"/><ellipse cx="1148.8" cy="376.6" rx="2.8" ry="1.2" fill="#5a0f08" transform="rotate(-37 1148.8 376.6)"/><ellipse cx="1374.5" cy="395.8" rx="3.2" ry="1.4" fill="#2a0402" transform="rotate(-43 1374.5 395.8)"/><ellipse cx="1188.5" cy="345.1" rx="2.3" ry="1.5" fill="#5a0f08" transform="rotate(-48 1188.5 345.1)"/><ellipse cx="1379.5" cy="293.0" rx="2.1" ry="0.9" fill="#1a0200" transform="rotate(23 1379.5 293.0)"/><ellipse cx="1153.7" cy="281.5" rx="1.4" ry="2.0" fill="#7a1a10" transform="rotate(38 1153.7 281.5)"/><ellipse cx="1393.8" cy="406.1" rx="2.9" ry="1.4" fill="#7a1a10" transform="rotate(54 1393.8 406.1)"/><ellipse cx="1163.1" cy="403.4" rx="1.7" ry="2.0" fill="#2a0402" transform="rotate(-8 1163.1 403.4)"/><ellipse cx="1345.7" cy="404.7" rx="2.5" ry="1.8" fill="#7a1a10" transform="rotate(29 1345.7 404.7)"/><ellipse cx="1162.6" cy="319.6" rx="1.7" ry="1.2" fill="#7a1a10" transform="rotate(-19 1162.6 319.6)"/><ellipse cx="1336.2" cy="307.7" rx="3.0" ry="0.9" fill="#2a0402" transform="rotate(-42 1336.2 307.7)"/><ellipse cx="1167.5" cy="317.8" rx="3.0" ry="1.7" fill="#2a0402" transform="rotate(56 1167.5 317.8)"/><ellipse cx="1357.5" cy="390.4" rx="3.1" ry="1.1" fill="#7a1a10" transform="rotate(-56 1357.5 390.4)"/><ellipse cx="1187.4" cy="413.1" rx="3.0" ry="1.8" fill="#5a0f08" transform="rotate(-11 1187.4 413.1)"/><ellipse cx="1343.7" cy="331.3" rx="2.1" ry="1.9" fill="#1a0200" transform="rotate(13 1343.7 331.3)"/><ellipse cx="1202.4" cy="329.4" rx="1.6" ry="1.8" fill="#1a0200" transform="rotate(-50 1202.4 329.4)"/><ellipse cx="1367.0" cy="380.1" rx="1.7" ry="1.3" fill="#7a1a10" transform="rotate(-25 1367.0 380.1)"/><ellipse cx="1151.9" cy="424.4" rx="3.6" ry="1.0" fill="#1a0200" transform="rotate(59 1151.9 424.4)"/><ellipse cx="1349.0" cy="387.5" rx="3.0" ry="2.0" fill="#2a0402" transform="rotate(57 1349.0 387.5)"/><ellipse cx="1174.2" cy="392.3" rx="1.6" ry="1.7" fill="#7a1a10" transform="rotate(-42 1174.2 392.3)"/><ellipse cx="1336.5" cy="341.0" rx="2.3" ry="1.9" fill="#5a0f08" transform="rotate(28 1336.5 341.0)"/><ellipse cx="1172.0" cy="315.7" rx="3.0" ry="2.2" fill="#2a0402" transform="rotate(36 1172.0 315.7)"/><ellipse cx="1347.5" cy="321.4" rx="2.0" ry="1.6" fill="#1a0200" transform="rotate(10 1347.5 321.4)"/><ellipse cx="1171.2" cy="305.9" rx="1.9" ry="2.2" fill="#5a0f08" transform="rotate(27 1171.2 305.9)"/><ellipse cx="1365.8" cy="285.8" rx="3.1" ry="1.2" fill="#5a0f08" transform="rotate(9 1365.8 285.8)"/><ellipse cx="1157.5" cy="293.4" rx="1.2" ry="0.8" fill="#5a0f08" transform="rotate(29 1157.5 293.4)"/><ellipse cx="1397.6" cy="413.8" rx="2.7" ry="1.3" fill="#5a0f08" transform="rotate(-44 1397.6 413.8)"/><ellipse cx="1194.0" cy="321.2" rx="3.0" ry="1.2" fill="#2a0402" transform="rotate(-37 1194.0 321.2)"/><ellipse cx="1348.6" cy="323.9" rx="1.2" ry="1.8" fill="#2a0402" transform="rotate(-44 1348.6 323.9)"/><ellipse cx="1189.4" cy="343.9" rx="4.0" ry="2.2" fill="#5a0f08" transform="rotate(-17 1189.4 343.9)"/><ellipse cx="1389.1" cy="407.4" rx="2.3" ry="1.2" fill="#1a0200" transform="rotate(14 1389.1 407.4)"/><ellipse cx="1165.5" cy="386.5" rx="2.8" ry="2.0" fill="#1a0200" transform="rotate(-50 1165.5 386.5)"/><ellipse cx="1345.7" cy="392.4" rx="2.1" ry="1.7" fill="#5a0f08" transform="rotate(-17 1345.7 392.4)"/><ellipse cx="1200.1" cy="370.7" rx="2.3" ry="1.0" fill="#2a0402" transform="rotate(-24 1200.1 370.7)"/><ellipse cx="1386.6" cy="318.7" rx="1.8" ry="2.0" fill="#5a0f08" transform="rotate(8 1386.6 318.7)"/><ellipse cx="1186.9" cy="281.5" rx="3.1" ry="1.5" fill="#1a0200" transform="rotate(5 1186.9 281.5)"/><ellipse cx="1388.1" cy="332.0" rx="1.5" ry="2.2" fill="#5a0f08" transform="rotate(44 1388.1 332.0)"/><ellipse cx="1177.9" cy="353.7" rx="3.2" ry="1.5" fill="#7a1a10" transform="rotate(52 1177.9 353.7)"/><ellipse cx="1370.8" cy="377.5" rx="1.5" ry="2.1" fill="#2a0402" transform="rotate(-43 1370.8 377.5)"/><ellipse cx="1200.5" cy="337.2" rx="3.1" ry="0.9" fill="#5a0f08" transform="rotate(-31 1200.5 337.2)"/><ellipse cx="1369.9" cy="410.2" rx="3.0" ry="0.9" fill="#5a0f08" transform="rotate(34 1369.9 410.2)"/><ellipse cx="1205.8" cy="337.0" rx="1.6" ry="1.8" fill="#1a0200" transform="rotate(-9 1205.8 337.0)"/><ellipse cx="1396.4" cy="410.6" rx="1.8" ry="0.8" fill="#2a0402" transform="rotate(27 1396.4 410.6)"/><ellipse cx="1199.7" cy="335.7" rx="3.5" ry="1.2" fill="#1a0200" transform="rotate(-23 1199.7 335.7)"/><ellipse cx="1379.8" cy="406.1" rx="3.6" ry="1.4" fill="#7a1a10" transform="rotate(-49 1379.8 406.1)"/><ellipse cx="1199.5" cy="358.1" rx="2.3" ry="2.0" fill="#7a1a10" transform="rotate(-12 1199.5 358.1)"/><ellipse cx="1350.6" cy="334.5" rx="3.6" ry="2.1" fill="#7a1a10" transform="rotate(19 1350.6 334.5)"/><ellipse cx="1208.8" cy="322.5" rx="3.3" ry="1.6" fill="#2a0402" transform="rotate(33 1208.8 322.5)"/><ellipse cx="1369.9" cy="398.5" rx="1.6" ry="1.8" fill="#7a1a10" transform="rotate(-36 1369.9 398.5)"/><ellipse cx="1158.1" cy="419.3" rx="3.0" ry="1.5" fill="#5a0f08" transform="rotate(-26 1158.1 419.3)"/><ellipse cx="1380.5" cy="331.5" rx="2.3" ry="1.9" fill="#2a0402" transform="rotate(-21 1380.5 331.5)"/><ellipse cx="1207.5" cy="384.7" rx="1.7" ry="1.9" fill="#7a1a10" transform="rotate(39 1207.5 384.7)"/><ellipse cx="1390.2" cy="414.1" rx="2.7" ry="2.1" fill="#2a0402" transform="rotate(5 1390.2 414.1)"/><ellipse cx="1197.2" cy="420.2" rx="3.7" ry="1.7" fill="#7a1a10" transform="rotate(33 1197.2 420.2)"/><ellipse cx="1386.0" cy="297.7" rx="3.7" ry="0.9" fill="#1a0200" transform="rotate(8 1386.0 297.7)"/><ellipse cx="1150.7" cy="316.0" rx="1.3" ry="1.4" fill="#5a0f08" transform="rotate(16 1150.7 316.0)"/><ellipse cx="1349.6" cy="365.8" rx="1.4" ry="2.1" fill="#2a0402" transform="rotate(41 1349.6 365.8)"/><ellipse cx="1178.0" cy="301.1" rx="3.2" ry="2.2" fill="#1a0200" transform="rotate(25 1178.0 301.1)"/><ellipse cx="1354.1" cy="299.6" rx="2.4" ry="1.3" fill="#7a1a10" transform="rotate(40 1354.1 299.6)"/><ellipse cx="1205.2" cy="405.3" rx="3.6" ry="1.3" fill="#5a0f08" transform="rotate(-55 1205.2 405.3)"/><ellipse cx="1398.8" cy="334.0" rx="2.4" ry="1.6" fill="#2a0402" transform="rotate(1 1398.8 334.0)"/><ellipse cx="1149.7" cy="357.0" rx="2.0" ry="1.6" fill="#7a1a10" transform="rotate(-16 1149.7 357.0)"/><ellipse cx="1395.9" cy="378.2" rx="3.8" ry="1.6" fill="#1a0200" transform="rotate(7 1395.9 378.2)"/><ellipse cx="1162.7" cy="302.8" rx="3.8" ry="1.7" fill="#7a1a10" transform="rotate(17 1162.7 302.8)"/><ellipse cx="1338.3" cy="387.1" rx="3.3" ry="0.9" fill="#2a0402" transform="rotate(-39 1338.3 387.1)"/><ellipse cx="1176.5" cy="384.6" rx="2.6" ry="1.3" fill="#7a1a10" transform="rotate(55 1176.5 384.6)"/><ellipse cx="1402.1" cy="289.6" rx="4.0" ry="1.7" fill="#7a1a10" transform="rotate(51 1402.1 289.6)"/><ellipse cx="1169.6" cy="332.5" rx="2.4" ry="0.9" fill="#1a0200" transform="rotate(-5 1169.6 332.5)"/><ellipse cx="1340.6" cy="335.1" rx="1.8" ry="1.6" fill="#1a0200" transform="rotate(41 1340.6 335.1)"/><ellipse cx="1195.6" cy="323.8" rx="3.8" ry="0.9" fill="#2a0402" transform="rotate(42 1195.6 323.8)"/><ellipse cx="1398.0" cy="419.4" rx="1.8" ry="1.0" fill="#7a1a10" transform="rotate(2 1398.0 419.4)"/><ellipse cx="1153.9" cy="351.3" rx="3.7" ry="1.3" fill="#5a0f08" transform="rotate(-24 1153.9 351.3)"/><ellipse cx="1392.1" cy="303.4" rx="3.9" ry="1.0" fill="#2a0402" transform="rotate(14 1392.1 303.4)"/><ellipse cx="1177.9" cy="307.4" rx="3.8" ry="1.4" fill="#5a0f08" transform="rotate(-44 1177.9 307.4)"/><ellipse cx="1378.0" cy="351.6" rx="1.3" ry="2.0" fill="#1a0200" transform="rotate(5 1378.0 351.6)"/><ellipse cx="1183.1" cy="329.2" rx="2.9" ry="1.3" fill="#1a0200" transform="rotate(-58 1183.1 329.2)"/><ellipse cx="1390.0" cy="409.0" rx="2.8" ry="1.7" fill="#5a0f08" transform="rotate(-57 1390.0 409.0)"/><ellipse cx="1150.9" cy="338.1" rx="3.9" ry="2.1" fill="#7a1a10" transform="rotate(-47 1150.9 338.1)"/><ellipse cx="1396.4" cy="391.6" rx="3.2" ry="1.1" fill="#1a0200" transform="rotate(41 1396.4 391.6)"/><ellipse cx="1160.3" cy="397.4" rx="2.1" ry="1.7" fill="#7a1a10" transform="rotate(-1 1160.3 397.4)"/><ellipse cx="1360.9" cy="391.0" rx="3.2" ry="1.5" fill="#5a0f08" transform="rotate(51 1360.9 391.0)"/><ellipse cx="1180.4" cy="321.6" rx="2.0" ry="1.0" fill="#5a0f08" transform="rotate(-43 1180.4 321.6)"/><ellipse cx="1397.2" cy="403.1" rx="2.3" ry="2.0" fill="#7a1a10" transform="rotate(19 1397.2 403.1)"/><ellipse cx="1185.7" cy="417.4" rx="2.7" ry="1.6" fill="#5a0f08" transform="rotate(-41 1185.7 417.4)"/><ellipse cx="1366.9" cy="364.3" rx="2.0" ry="1.0" fill="#2a0402" transform="rotate(-25 1366.9 364.3)"/><ellipse cx="1159.0" cy="311.1" rx="1.8" ry="1.1" fill="#2a0402" transform="rotate(-52 1159.0 311.1)"/><ellipse cx="1400.1" cy="401.7" rx="3.4" ry="1.9" fill="#7a1a10" transform="rotate(-29 1400.1 401.7)"/><ellipse cx="1181.9" cy="421.8" rx="2.9" ry="1.0" fill="#5a0f08" transform="rotate(42 1181.9 421.8)"/><ellipse cx="1387.0" cy="410.1" rx="3.8" ry="2.1" fill="#1a0200" transform="rotate(20 1387.0 410.1)"/><ellipse cx="1166.9" cy="401.3" rx="3.8" ry="1.9" fill="#5a0f08" transform="rotate(15 1166.9 401.3)"/><ellipse cx="1351.4" cy="291.7" rx="2.4" ry="2.0" fill="#1a0200" transform="rotate(-40 1351.4 291.7)"/><ellipse cx="1145.5" cy="377.2" rx="1.6" ry="1.6" fill="#1a0200" transform="rotate(-55 1145.5 377.2)"/><ellipse cx="1358.5" cy="397.3" rx="1.8" ry="1.9" fill="#2a0402" transform="rotate(-19 1358.5 397.3)"/><ellipse cx="1162.6" cy="413.2" rx="2.2" ry="2.1" fill="#7a1a10" transform="rotate(15 1162.6 413.2)"/><ellipse cx="1338.6" cy="355.7" rx="3.0" ry="2.0" fill="#2a0402" transform="rotate(-41 1338.6 355.7)"/><ellipse cx="1148.8" cy="324.0" rx="3.7" ry="1.9" fill="#5a0f08" transform="rotate(59 1148.8 324.0)"/><ellipse cx="1401.5" cy="382.9" rx="1.9" ry="1.1" fill="#7a1a10" transform="rotate(32 1401.5 382.9)"/><ellipse cx="1205.5" cy="411.7" rx="2.5" ry="0.9" fill="#7a1a10" transform="rotate(-47 1205.5 411.7)"/><ellipse cx="1357.6" cy="416.8" rx="3.5" ry="1.7" fill="#2a0402" transform="rotate(53 1357.6 416.8)"/><ellipse cx="1208.2" cy="348.9" rx="2.5" ry="1.5" fill="#1a0200" transform="rotate(35 1208.2 348.9)"/><ellipse cx="1354.4" cy="389.3" rx="3.6" ry="0.9" fill="#2a0402" transform="rotate(-3 1354.4 389.3)"/><ellipse cx="1192.8" cy="303.4" rx="2.8" ry="1.0" fill="#f05a44"/><ellipse cx="1340.2" cy="339.6" rx="2.2" ry="1.4" fill="#f05a44"/><ellipse cx="1158.0" cy="424.3" rx="2.3" ry="1.5" fill="#f05a44"/><ellipse cx="1361.6" cy="404.7" rx="1.8" ry="1.9" fill="#f05a44"/><ellipse cx="1156.9" cy="407.2" rx="2.4" ry="1.6" fill="#f05a44"/><ellipse cx="1353.6" cy="395.6" rx="1.9" ry="1.8" fill="#f05a44"/><ellipse cx="1185.8" cy="410.5" rx="3.5" ry="1.8" fill="#f05a44"/><ellipse cx="1349.4" cy="395.3" rx="1.7" ry="1.8" fill="#f05a44"/><ellipse cx="1202.2" cy="301.7" rx="1.6" ry="1.8" fill="#f05a44"/><ellipse cx="1361.1" cy="375.4" rx="3.1" ry="1.9" fill="#f05a44"/><ellipse cx="1177.1" cy="402.4" rx="3.3" ry="1.8" fill="#f05a44"/><ellipse cx="1362.4" cy="409.9" rx="2.3" ry="1.9" fill="#f05a44"/><ellipse cx="1168.8" cy="351.4" rx="1.6" ry="1.1" fill="#f05a44"/><ellipse cx="1399.3" cy="343.1" rx="3.0" ry="1.5" fill="#f05a44"/><ellipse cx="1190.0" cy="356.9" rx="1.8" ry="1.3" fill="#f05a44"/><ellipse cx="1379.9" cy="299.7" rx="3.4" ry="1.1" fill="#f05a44"/><ellipse cx="1180.0" cy="406.6" rx="3.0" ry="1.1" fill="#f05a44"/><ellipse cx="1345.0" cy="379.5" rx="2.3" ry="1.1" fill="#f05a44"/><ellipse cx="1152.8" cy="377.2" rx="1.6" ry="1.3" fill="#f05a44"/><ellipse cx="1400.1" cy="313.5" rx="3.2" ry="1.0" fill="#f05a44"/><ellipse cx="1157.4" cy="289.1" rx="3.0" ry="1.6" fill="#f05a44"/><ellipse cx="1388.7" cy="395.1" rx="2.9" ry="1.1" fill="#f05a44"/><ellipse cx="1173.4" cy="286.8" rx="3.1" ry="1.4" fill="#f05a44"/><ellipse cx="1368.6" cy="406.3" rx="3.5" ry="1.6" fill="#f05a44"/><ellipse cx="1169.0" cy="406.8" rx="3.2" ry="1.2" fill="#f05a44"/><ellipse cx="1368.0" cy="414.5" rx="3.5" ry="1.9" fill="#f05a44"/><ellipse cx="1175.2" cy="305.4" rx="3.3" ry="1.2" fill="#f05a44"/><ellipse cx="1377.8" cy="333.4" rx="3.2" ry="1.4" fill="#f05a44"/><ellipse cx="1168.4" cy="403.3" rx="3.0" ry="2.0" fill="#f05a44"/><ellipse cx="1345.9" cy="296.0" rx="2.9" ry="1.5" fill="#f05a44"/><ellipse cx="1200.4" cy="348.3" rx="1.6" ry="1.5" fill="#f05a44"/><ellipse cx="1354.4" cy="393.0" rx="3.1" ry="1.9" fill="#f05a44"/><ellipse cx="1151.8" cy="362.6" rx="1.9" ry="2.0" fill="#f05a44"/><ellipse cx="1347.9" cy="371.4" rx="2.9" ry="1.2" fill="#f05a44"/><ellipse cx="1181.2" cy="299.4" rx="1.6" ry="1.3" fill="#f05a44"/><ellipse cx="1343.2" cy="340.8" rx="2.9" ry="1.9" fill="#f05a44"/><ellipse cx="1161.2" cy="350.1" rx="2.9" ry="1.3" fill="#f05a44"/><ellipse cx="1358.4" cy="330.7" rx="3.2" ry="1.4" fill="#f05a44"/><ellipse cx="1192.6" cy="303.0" rx="2.1" ry="1.3" fill="#f05a44"/><ellipse cx="1353.1" cy="299.9" rx="2.3" ry="1.8" fill="#f05a44"/><ellipse cx="1185.9" cy="423.9" rx="2.1" ry="1.3" fill="#f05a44"/><ellipse cx="1354.0" cy="348.5" rx="1.7" ry="1.8" fill="#f05a44"/><ellipse cx="1171.2" cy="288.0" rx="2.5" ry="1.4" fill="#f05a44"/><ellipse cx="1350.8" cy="320.9" rx="2.8" ry="2.0" fill="#f05a44"/><ellipse cx="1182.4" cy="318.8" rx="1.6" ry="1.3" fill="#f05a44"/><ellipse cx="1353.9" cy="338.3" rx="2.4" ry="1.3" fill="#f05a44"/><ellipse cx="1155.2" cy="415.0" rx="3.4" ry="1.7" fill="#f05a44"/><ellipse cx="1399.3" cy="359.4" rx="3.0" ry="1.4" fill="#f05a44"/><ellipse cx="1186.1" cy="403.2" rx="2.9" ry="1.8" fill="#f05a44"/><ellipse cx="1378.4" cy="327.0" rx="3.1" ry="1.9" fill="#f05a44"/><ellipse cx="1159.5" cy="305.7" rx="1.5" ry="1.2" fill="#f05a44"/><ellipse cx="1349.9" cy="306.2" rx="1.8" ry="1.3" fill="#f05a44"/><ellipse cx="1155.5" cy="419.4" rx="1.6" ry="1.0" fill="#f05a44"/><ellipse cx="1398.8" cy="332.4" rx="3.0" ry="1.3" fill="#f05a44"/><ellipse cx="1145.8" cy="287.4" rx="3.3" ry="1.0" fill="#f05a44"/><ellipse cx="1367.3" cy="315.1" rx="2.8" ry="1.4" fill="#f05a44"/><ellipse cx="1195.1" cy="312.6" rx="2.6" ry="2.0" fill="#f05a44"/><ellipse cx="1373.1" cy="415.2" rx="1.6" ry="1.9" fill="#f05a44"/><ellipse cx="1169.2" cy="424.6" rx="2.9" ry="1.3" fill="#f05a44"/><ellipse cx="1388.8" cy="301.3" rx="2.6" ry="1.7" fill="#f05a44"/><ellipse cx="1155.4" cy="290.3" rx="3.2" ry="1.2" fill="#f05a44"/><ellipse cx="1388.2" cy="345.3" rx="1.9" ry="1.9" fill="#f05a44"/><ellipse cx="1168.1" cy="319.5" rx="3.3" ry="2.0" fill="#f05a44"/><ellipse cx="1359.9" cy="418.3" rx="1.7" ry="1.8" fill="#f05a44"/><ellipse cx="1181.3" cy="316.9" rx="2.3" ry="1.3" fill="#f05a44"/><ellipse cx="1382.5" cy="338.2" rx="2.4" ry="1.7" fill="#f05a44"/><ellipse cx="1166.6" cy="293.8" rx="2.5" ry="1.9" fill="#f05a44"/><ellipse cx="1353.8" cy="316.1" rx="3.3" ry="1.2" fill="#f05a44"/><ellipse cx="1204.5" cy="325.4" rx="1.9" ry="1.7" fill="#f05a44"/><ellipse cx="1396.8" cy="344.7" rx="2.0" ry="1.1" fill="#f05a44"/><ellipse cx="1145.5" cy="382.7" rx="3.0" ry="1.3" fill="#f05a44"/><ellipse cx="1369.3" cy="387.9" rx="2.9" ry="1.7" fill="#f05a44"/><ellipse cx="1201.9" cy="316.8" rx="3.4" ry="1.6" fill="#f05a44"/><ellipse cx="1359.1" cy="375.8" rx="2.1" ry="1.4" fill="#f05a44"/><ellipse cx="1196.0" cy="397.4" rx="2.7" ry="1.8" fill="#f05a44"/><ellipse cx="1395.1" cy="333.4" rx="1.7" ry="1.9" fill="#f05a44"/><ellipse cx="1148.7" cy="345.6" rx="1.7" ry="1.5" fill="#f05a44"/><ellipse cx="1389.5" cy="282.1" rx="2.5" ry="1.4" fill="#f05a44"/><ellipse cx="1186.5" cy="410.5" rx="2.8" ry="1.1" fill="#f05a44"/><ellipse cx="1361.3" cy="344.4" rx="1.8" ry="1.9" fill="#f05a44"/><ellipse cx="1167.3" cy="333.4" rx="1.9" ry="1.5" fill="#f05a44"/><ellipse cx="1391.3" cy="293.1" rx="2.5" ry="1.3" fill="#f05a44"/><ellipse cx="1148.9" cy="338.9" rx="2.8" ry="1.6" fill="#f05a44"/><ellipse cx="1403.7" cy="378.9" rx="3.4" ry="1.7" fill="#f05a44"/><ellipse cx="1187.5" cy="410.5" rx="3.2" ry="1.8" fill="#f05a44"/><ellipse cx="1359.6" cy="317.9" rx="3.2" ry="1.0" fill="#f05a44"/><ellipse cx="1169.2" cy="401.8" rx="2.1" ry="1.5" fill="#f05a44"/><ellipse cx="1360.9" cy="369.8" rx="3.2" ry="1.1" fill="#f05a44"/><ellipse cx="1170.4" cy="404.4" rx="2.3" ry="2.0" fill="#f05a44"/><ellipse cx="1355.9" cy="350.1" rx="1.8" ry="1.9" fill="#f05a44"/><ellipse cx="1174.8" cy="399.9" rx="2.9" ry="1.3" fill="#f05a44"/><ellipse cx="1394.3" cy="286.8" rx="3.4" ry="1.8" fill="#f05a44"/><ellipse cx="1160.2" cy="364.3" rx="2.2" ry="1.5" fill="#f05a44"/><ellipse cx="1400.6" cy="342.7" rx="2.7" ry="1.0" fill="#f05a44"/><ellipse cx="1148.5" cy="350.1" rx="2.3" ry="1.9" fill="#f05a44"/><ellipse cx="1375.6" cy="405.9" rx="2.6" ry="1.9" fill="#f05a44"/><ellipse cx="1164.8" cy="285.7" rx="3.0" ry="1.7" fill="#f05a44"/><ellipse cx="1350.9" cy="308.3" rx="2.4" ry="1.9" fill="#f05a44"/><ellipse cx="1186.5" cy="343.8" rx="2.6" ry="1.3" fill="#f05a44"/><ellipse cx="1364.0" cy="303.5" rx="2.9" ry="1.0" fill="#f05a44"/><ellipse cx="1177.5" cy="294.6" rx="1.8" ry="1.8" fill="#f05a44"/><ellipse cx="1395.0" cy="350.9" rx="3.4" ry="1.7" fill="#f05a44"/><ellipse cx="1178.4" cy="368.7" rx="1.5" ry="1.1" fill="#f05a44"/><ellipse cx="1387.4" cy="331.3" rx="3.4" ry="1.3" fill="#f05a44"/><ellipse cx="1162.5" cy="312.3" rx="3.4" ry="1.5" fill="#f05a44"/><ellipse cx="1354.9" cy="286.4" rx="2.7" ry="1.0" fill="#f05a44"/><ellipse cx="1198.5" cy="304.7" rx="3.0" ry="1.9" fill="#f05a44"/><ellipse cx="1357.1" cy="361.8" rx="2.9" ry="1.5" fill="#f05a44"/><ellipse cx="1170.6" cy="408.4" rx="2.0" ry="1.6" fill="#f05a44"/><ellipse cx="1338.5" cy="359.5" rx="3.4" ry="1.4" fill="#f05a44"/><ellipse cx="1190.6" cy="328.7" rx="2.3" ry="1.4" fill="#f05a44"/><ellipse cx="1396.1" cy="324.3" rx="1.6" ry="1.5" fill="#f05a44"/><ellipse cx="1181.1" cy="368.6" rx="2.4" ry="1.3" fill="#f05a44"/><ellipse cx="1385.3" cy="313.1" rx="2.0" ry="1.2" fill="#f05a44"/><ellipse cx="1148.6" cy="311.6" rx="2.9" ry="1.4" fill="#f05a44"/><ellipse cx="1368.2" cy="310.5" rx="2.0" ry="1.7" fill="#f05a44"/><ellipse cx="1203.2" cy="302.1" rx="2.9" ry="2.0" fill="#f05a44"/><ellipse cx="1374.0" cy="406.7" rx="1.9" ry="1.8" fill="#f05a44"/><ellipse cx="1151.8" cy="312.9" rx="1.7" ry="1.0" fill="#f05a44"/><ellipse cx="1388.1" cy="327.7" rx="2.2" ry="1.7" fill="#f05a44"/><ellipse cx="1160.6" cy="404.8" rx="1.9" ry="2.0" fill="#f05a44"/><ellipse cx="1395.6" cy="349.5" rx="3.4" ry="1.8" fill="#f05a44"/><ellipse cx="1204.0" cy="324.3" rx="2.3" ry="1.3" fill="#f05a44"/><ellipse cx="1367.4" cy="357.5" rx="3.2" ry="1.3" fill="#f05a44"/><ellipse cx="1179.5" cy="321.5" rx="2.4" ry="1.1" fill="#f05a44"/><ellipse cx="1373.8" cy="366.3" rx="2.7" ry="1.9" fill="#f05a44"/><ellipse cx="1177.3" cy="321.5" rx="3.4" ry="1.4" fill="#f05a44"/><ellipse cx="1350.8" cy="350.7" rx="2.9" ry="1.3" fill="#f05a44"/><ellipse cx="1159.5" cy="294.1" rx="2.6" ry="1.4" fill="#f05a44"/><ellipse cx="1390.5" cy="300.2" rx="2.7" ry="1.2" fill="#f05a44"/><ellipse cx="1157.3" cy="298.2" rx="2.8" ry="1.7" fill="#f05a44"/><ellipse cx="1366.7" cy="396.7" rx="3.1" ry="1.9" fill="#f05a44"/><ellipse cx="1184.9" cy="346.1" rx="2.3" ry="1.8" fill="#f05a44"/><ellipse cx="1357.5" cy="312.3" rx="3.5" ry="1.9" fill="#f05a44"/><ellipse cx="1185.6" cy="401.0" rx="1.6" ry="1.8" fill="#f05a44"/><ellipse cx="1377.1" cy="319.8" rx="2.1" ry="1.7" fill="#f05a44"/><ellipse cx="1201.6" cy="388.7" rx="1.6" ry="1.6" fill="#f05a44"/><ellipse cx="1360.2" cy="309.9" rx="1.6" ry="1.6" fill="#f05a44"/><ellipse cx="1161.7" cy="330.0" rx="2.5" ry="1.9" fill="#f05a44"/><ellipse cx="1356.2" cy="360.5" rx="2.8" ry="1.8" fill="#f05a44"/><ellipse cx="1197.6" cy="314.5" rx="3.2" ry="1.1" fill="#f05a44"/><ellipse cx="1368.3" cy="383.6" rx="3.3" ry="1.3" fill="#f05a44"/><ellipse cx="1187.1" cy="382.0" rx="1.6" ry="1.8" fill="#f05a44"/><ellipse cx="1393.2" cy="297.3" rx="2.1" ry="1.4" fill="#f05a44"/><ellipse cx="1203.1" cy="418.9" rx="1.9" ry="1.4" fill="#f05a44"/><ellipse cx="1346.1" cy="284.7" rx="1.9" ry="1.9" fill="#f05a44"/><ellipse cx="1201.1" cy="310.6" rx="2.7" ry="1.6" fill="#f05a44"/><ellipse cx="1367.5" cy="399.8" rx="1.7" ry="1.3" fill="#f05a44"/><ellipse cx="1152.1" cy="412.2" rx="3.1" ry="1.5" fill="#f05a44"/><ellipse cx="1343.9" cy="400.7" rx="3.1" ry="1.9" fill="#f05a44"/><ellipse cx="1203.4" cy="377.0" rx="2.5" ry="1.8" fill="#f05a44"/><ellipse cx="1347.1" cy="398.6" rx="2.1" ry="1.4" fill="#f05a44"/><ellipse cx="1199.1" cy="282.9" rx="2.2" ry="1.8" fill="#f05a44"/><ellipse cx="1364.5" cy="408.0" rx="2.9" ry="1.2" fill="#f05a44"/><ellipse cx="1175.6" cy="332.7" rx="2.8" ry="1.7" fill="#f05a44"/><ellipse cx="1371.1" cy="287.9" rx="3.2" ry="1.2" fill="#f05a44"/><ellipse cx="1184.3" cy="399.8" rx="2.4" ry="1.1" fill="#f05a44"/><ellipse cx="1374.3" cy="291.3" rx="1.8" ry="1.2" fill="#f05a44"/><ellipse cx="1155.6" cy="364.6" rx="3.0" ry="1.4" fill="#f05a44"/><ellipse cx="1400.9" cy="287.5" rx="2.2" ry="1.3" fill="#f05a44"/><ellipse cx="1178.3" cy="377.7" rx="2.1" ry="1.4" fill="#f05a44"/><ellipse cx="1363.2" cy="326.4" rx="1.6" ry="1.7" fill="#f05a44"/><ellipse cx="1146.7" cy="342.4" rx="2.0" ry="1.4" fill="#f05a44"/><ellipse cx="1384.5" cy="392.7" rx="3.2" ry="1.6" fill="#f05a44"/><ellipse cx="1162.6" cy="283.4" rx="1.8" ry="1.9" fill="#f05a44"/><ellipse cx="1363.1" cy="331.9" rx="2.2" ry="1.3" fill="#f05a44"/><ellipse cx="1157.0" cy="322.1" rx="2.4" ry="1.5" fill="#f05a44"/><ellipse cx="1342.0" cy="293.2" rx="1.6" ry="1.5" fill="#f05a44"/><ellipse cx="1185.1" cy="408.0" rx="2.3" ry="1.6" fill="#f05a44"/><ellipse cx="1389.9" cy="354.6" rx="2.6" ry="1.1" fill="#f05a44"/><ellipse cx="1187.3" cy="386.0" rx="2.1" ry="1.7" fill="#f05a44"/><ellipse cx="1351.8" cy="292.7" rx="2.2" ry="1.5" fill="#f05a44"/><ellipse cx="1169.1" cy="317.9" rx="3.4" ry="1.7" fill="#f05a44"/><ellipse cx="1356.5" cy="287.3" rx="2.9" ry="1.9" fill="#f05a44"/><ellipse cx="1189.6" cy="380.0" rx="3.4" ry="1.7" fill="#f05a44"/><ellipse cx="1346.1" cy="345.4" rx="2.3" ry="1.6" fill="#f05a44"/><ellipse cx="1154.8" cy="371.7" rx="2.9" ry="1.3" fill="#f05a44"/><ellipse cx="1379.2" cy="326.9" rx="2.8" ry="1.5" fill="#f05a44"/><ellipse cx="1204.5" cy="348.6" rx="1.6" ry="1.1" fill="#f05a44"/><ellipse cx="1383.5" cy="290.6" rx="3.0" ry="1.5" fill="#f05a44"/><ellipse cx="1166.4" cy="340.4" rx="3.2" ry="1.5" fill="#f05a44"/><ellipse cx="1365.5" cy="345.3" rx="2.7" ry="1.5" fill="#f05a44"/><ellipse cx="1189.0" cy="340.4" rx="2.1" ry="1.1" fill="#f05a44"/><ellipse cx="1368.0" cy="303.4" rx="1.9" ry="1.2" fill="#f05a44"/><ellipse cx="1167.1" cy="412.1" rx="2.5" ry="1.3" fill="#f05a44"/><ellipse cx="1369.3" cy="343.5" rx="1.6" ry="1.8" fill="#f05a44"/><ellipse cx="1176.5" cy="423.7" rx="2.8" ry="1.2" fill="#f05a44"/><ellipse cx="1402.9" cy="293.1" rx="1.8" ry="1.1" fill="#f05a44"/><ellipse cx="1154.6" cy="301.1" rx="3.3" ry="1.1" fill="#f05a44"/><ellipse cx="1370.2" cy="297.9" rx="2.1" ry="1.1" fill="#f05a44"/><ellipse cx="1167.9" cy="322.3" rx="3.0" ry="2.0" fill="#f05a44"/><ellipse cx="1350.6" cy="344.5" rx="2.7" ry="2.0" fill="#f05a44"/><ellipse cx="1149.0" cy="375.7" rx="2.3" ry="1.5" fill="#f05a44"/><ellipse cx="1384.3" cy="377.7" rx="2.3" ry="1.8" fill="#f05a44"/><ellipse cx="1181.0" cy="315.1" rx="1.9" ry="1.2" fill="#f05a44"/><ellipse cx="1391.6" cy="402.1" rx="1.8" ry="1.6" fill="#f05a44"/><ellipse cx="1149.6" cy="290.9" rx="2.9" ry="1.6" fill="#f05a44"/><ellipse cx="1366.3" cy="340.1" rx="2.4" ry="1.4" fill="#f05a44"/><ellipse cx="1162.7" cy="415.7" rx="1.6" ry="1.6" fill="#f05a44"/><ellipse cx="1349.7" cy="329.8" rx="1.6" ry="1.1" fill="#f05a44"/><ellipse cx="1182.9" cy="286.6" rx="2.3" ry="1.6" fill="#f05a44"/><ellipse cx="1375.7" cy="291.9" rx="2.3" ry="1.3" fill="#f05a44"/><ellipse cx="1194.8" cy="405.7" rx="2.7" ry="1.8" fill="#f05a44"/><ellipse cx="1365.3" cy="418.8" rx="2.9" ry="1.9" fill="#f05a44"/><ellipse cx="1155.2" cy="381.3" rx="2.8" ry="1.7" fill="#f05a44"/><ellipse cx="1397.0" cy="310.0" rx="1.7" ry="1.6" fill="#f05a44"/><ellipse cx="1158.7" cy="420.5" rx="3.3" ry="1.5" fill="#f05a44"/><ellipse cx="1391.3" cy="366.1" rx="3.3" ry="1.6" fill="#f05a44"/><ellipse cx="1157.7" cy="423.9" rx="2.0" ry="1.1" fill="#f05a44"/><ellipse cx="1389.4" cy="371.6" rx="3.2" ry="1.2" fill="#f05a44"/><ellipse cx="1202.2" cy="400.7" rx="2.8" ry="1.0" fill="#f05a44"/><ellipse cx="1388.5" cy="331.0" rx="1.8" ry="1.3" fill="#f05a44"/><ellipse cx="1203.7" cy="327.1" rx="2.4" ry="1.9" fill="#f05a44"/><ellipse cx="1385.0" cy="330.9" rx="2.2" ry="1.5" fill="#f05a44"/><ellipse cx="1178.3" cy="385.7" rx="2.8" ry="1.2" fill="#f05a44"/><ellipse cx="1395.7" cy="393.1" rx="2.5" ry="1.1" fill="#f05a44"/><ellipse cx="1173.1" cy="405.4" rx="2.0" ry="1.3" fill="#f05a44"/><ellipse cx="1383.7" cy="384.4" rx="3.2" ry="1.4" fill="#f05a44"/><ellipse cx="1190.4" cy="314.9" rx="1.6" ry="1.7" fill="#f05a44"/><ellipse cx="1353.6" cy="404.2" rx="2.2" ry="1.3" fill="#f05a44"/><ellipse cx="1197.4" cy="286.0" rx="3.4" ry="1.3" fill="#f05a44"/><ellipse cx="1340.7" cy="325.7" rx="1.7" ry="1.3" fill="#f05a44"/><ellipse cx="1176.1" cy="362.2" rx="1.9" ry="2.0" fill="#f05a44"/><ellipse cx="1347.6" cy="292.4" rx="2.0" ry="1.0" fill="#f05a44"/><ellipse cx="1199.4" cy="304.2" rx="1.5" ry="1.6" fill="#f05a44"/><ellipse cx="1360.4" cy="294.3" rx="2.4" ry="1.2" fill="#f05a44"/><ellipse cx="1149.8" cy="354.6" rx="2.0" ry="1.3" fill="#f05a44"/><ellipse cx="1370.6" cy="421.0" rx="2.7" ry="1.6" fill="#f05a44"/><ellipse cx="1163.7" cy="347.9" rx="2.0" ry="1.8" fill="#f05a44"/><ellipse cx="1399.4" cy="398.3" rx="2.3" ry="1.7" fill="#f05a44"/><ellipse cx="1163.3" cy="395.3" rx="3.4" ry="1.2" fill="#f05a44"/><ellipse cx="1343.6" cy="421.1" rx="2.6" ry="1.8" fill="#f05a44"/><ellipse cx="1197.5" cy="397.0" rx="1.7" ry="1.3" fill="#f05a44"/><ellipse cx="1362.4" cy="403.5" rx="3.0" ry="1.2" fill="#f05a44"/><ellipse cx="1153.6" cy="395.9" rx="3.3" ry="1.0" fill="#f05a44"/><ellipse cx="1359.8" cy="293.2" rx="2.4" ry="1.0" fill="#f05a44"/><ellipse cx="1169.0" cy="306.3" rx="1.6" ry="2.0" fill="#f05a44"/><ellipse cx="1348.0" cy="411.4" rx="3.0" ry="1.3" fill="#f05a44"/><ellipse cx="1168.4" cy="335.3" rx="2.1" ry="1.6" fill="#f05a44"/><ellipse cx="1346.8" cy="362.5" rx="2.5" ry="1.2" fill="#f05a44"/><ellipse cx="1204.3" cy="323.2" rx="2.8" ry="1.7" fill="#f05a44"/><ellipse cx="1386.7" cy="361.0" rx="2.4" ry="1.4" fill="#f05a44"/><ellipse cx="1190.8" cy="290.9" rx="2.6" ry="1.8" fill="#f05a44"/><ellipse cx="1367.9" cy="347.0" rx="2.9" ry="1.8" fill="#f05a44"/><ellipse cx="1165.2" cy="368.0" rx="3.1" ry="1.6" fill="#f05a44"/><ellipse cx="1351.8" cy="421.4" rx="2.2" ry="1.6" fill="#f05a44"/><ellipse cx="1148.3" cy="379.4" rx="2.6" ry="1.9" fill="#f05a44"/><ellipse cx="1353.2" cy="280.1" rx="2.2" ry="1.4" fill="#f05a44"/><ellipse cx="1187.4" cy="326.2" rx="3.0" ry="1.9" fill="#f05a44"/><ellipse cx="1340.1" cy="420.0" rx="1.6" ry="1.3" fill="#f05a44"/></g>
<path d="M1208.4 297.9 L1336 297.9 L1333 414 L1212.7 414 Z" fill="#b9281d"/>
<path d="M1208.4 297.9 L1336 297.9" stroke="#c93424" stroke-width="3"/>
<ellipse cx="1272.5" cy="311" rx="13.5" ry="12" fill="#d03a2a"/>
<ellipse cx="1272.5" cy="308" rx="11.5" ry="7.5" fill="#120202"/>
<ellipse cx="1273" cy="313" rx="6" ry="2.5" fill="#c23022"/>
<ellipse cx="1274" cy="347" rx="3.5" ry="4.5" fill="#9a1f15"/>
<path d="M1131.0 610.0 C1125.3 602.5 1132.8 578.7 1136.0 562.0 C1139.2 545.3 1146.3 520.0 1150.0 510.0 C1153.7 500.0 1154.0 503.5 1158.0 502.0 C1162.0 500.5 1168.8 500.7 1174.0 501.0 C1179.2 501.3 1184.7 503.7 1189.0 504.0 C1193.3 504.3 1193.8 503.0 1200.0 503.0 C1206.2 503.0 1221.3 501.5 1226.0 504.0 C1230.7 506.5 1226.3 515.7 1228.0 518.0 C1229.7 520.3 1232.0 519.0 1236.0 518.0 C1240.0 517.0 1245.3 513.3 1252.0 512.0 C1258.7 510.7 1268.7 509.2 1276.0 510.0 C1283.3 510.8 1289.3 513.2 1296.0 517.0 C1302.7 520.8 1310.7 525.5 1316.0 533.0 C1321.3 540.5 1324.8 550.7 1328.0 562.0 C1331.2 573.3 1336.7 594.2 1335.0 601.0 C1333.3 607.8 1323.8 606.2 1318.0 603.0 C1312.2 599.8 1305.8 587.2 1300.0 582.0 C1294.2 576.8 1292.0 574.2 1283.0 572.0 C1274.0 569.8 1254.8 568.2 1246.0 569.0 C1237.2 569.8 1234.0 571.3 1230.0 577.0 C1226.0 582.7 1232.0 598.0 1222.0 603.0 C1212.0 608.0 1185.2 605.8 1170.0 607.0 C1154.8 608.2 1136.7 617.5 1131.0 610.0 Z" fill="#1c0403"/>
<path d="M1133.8 608.4 C1132.8 601.3 1135.3 580.6 1138.4 564.7 C1141.5 548.8 1148.9 522.8 1152.2 513.0 C1155.5 503.2 1155.9 506.0 1158.0 506.0 C1160.1 506.0 1164.8 508.0 1164.8 513.0 C1164.8 518.0 1160.5 526.4 1158.0 536.0 C1155.5 545.6 1152.3 558.6 1150.0 570.5 C1147.7 582.4 1146.8 601.0 1144.1 607.3 C1141.4 613.6 1134.8 615.5 1133.8 608.4 Z" fill="#d13a2b" filter="url(#shr)"/>
<path d="M1149.9 606.0 C1148.6 599.2 1155.3 572.6 1158.0 559.0 C1160.7 545.4 1163.3 533.5 1166.0 524.5 C1168.7 515.5 1170.2 507.7 1174.0 505.0 C1177.8 502.3 1186.5 505.1 1189.0 508.4 C1191.5 511.6 1190.9 516.1 1189.0 524.5 C1187.1 532.9 1181.3 546.4 1177.5 559.0 C1173.7 571.6 1170.6 592.2 1166.0 600.0 C1161.4 607.8 1151.2 612.8 1149.9 606.0 Z" fill="#d13a2b" filter="url(#shr)"/>
<path d="M1168.3 605.0 C1167.2 596.8 1179.0 569.5 1184.4 553.2 C1189.8 536.9 1193.8 514.7 1200.5 507.2 C1207.2 499.7 1220.8 506.3 1224.6 508.4 C1228.4 510.5 1225.6 514.2 1223.5 520.0 C1221.4 525.8 1215.8 534.5 1212.0 542.9 C1208.2 551.3 1204.0 560.5 1200.5 570.5 C1197.0 580.5 1196.7 597.0 1191.3 602.7 C1185.9 608.5 1169.4 613.2 1168.3 605.0 Z" fill="#d13a2b" filter="url(#shr)"/>
<path d="M1194.7 601.5 C1193.0 594.6 1205.5 570.3 1209.7 559.0 C1213.9 547.7 1215.8 539.5 1220.0 533.7 C1224.2 528.0 1229.6 527.0 1235.0 524.5 C1240.4 522.0 1245.6 519.9 1252.3 518.7 C1259.0 517.6 1268.5 516.6 1275.2 517.6 C1281.9 518.6 1286.8 521.0 1292.5 524.5 C1298.2 528.0 1304.9 531.6 1309.7 538.3 C1314.5 545.0 1318.3 554.6 1321.2 564.7 C1324.1 574.9 1328.0 593.2 1327.0 599.2 C1326.0 605.2 1319.3 603.3 1315.5 600.4 C1311.7 597.5 1309.4 587.0 1304.0 582.0 C1298.6 577.0 1292.9 572.8 1283.3 570.5 C1273.7 568.2 1255.3 567.2 1246.5 568.2 C1237.7 569.2 1234.8 570.8 1230.4 576.2 C1226.0 581.6 1226.0 596.2 1220.0 600.4 C1214.0 604.6 1196.4 608.4 1194.7 601.5 Z" fill="#d13a2b" filter="url(#shr)"/>
<line x1="810.0" y1="337.0" x2="850.4" y2="614.4" stroke="#d13a2b" stroke-width="2.2"/>
<line x1="810.0" y1="337.0" x2="850.4" y2="614.4" stroke="#d13a2b" stroke-width="4.6" stroke-dasharray="3.5 5.5" stroke-linecap="round"/>
<line x1="816.1" y1="335.2" x2="856.2" y2="612.2" stroke="#d13a2b" stroke-width="2.2"/>
<line x1="816.1" y1="335.2" x2="856.2" y2="612.2" stroke="#d13a2b" stroke-width="4.6" stroke-dasharray="3.5 5.5" stroke-linecap="round"/>
<line x1="822.2" y1="333.4" x2="861.9" y2="609.9" stroke="#d13a2b" stroke-width="2.2"/>
<line x1="822.2" y1="333.4" x2="861.9" y2="609.9" stroke="#d13a2b" stroke-width="4.6" stroke-dasharray="3.5 5.5" stroke-linecap="round"/>
<line x1="828.3" y1="331.6" x2="867.7" y2="607.7" stroke="#d13a2b" stroke-width="2.2"/>
<line x1="828.3" y1="331.6" x2="867.7" y2="607.7" stroke="#d13a2b" stroke-width="4.6" stroke-dasharray="3.5 5.5" stroke-linecap="round"/>
<line x1="834.4" y1="329.8" x2="873.4" y2="605.4" stroke="#d13a2b" stroke-width="2.2"/>
<line x1="834.4" y1="329.8" x2="873.4" y2="605.4" stroke="#d13a2b" stroke-width="4.6" stroke-dasharray="3.5 5.5" stroke-linecap="round"/>
<line x1="840.5" y1="328.0" x2="879.2" y2="603.2" stroke="#d13a2b" stroke-width="2.2"/>
<line x1="840.5" y1="328.0" x2="879.2" y2="603.2" stroke="#d13a2b" stroke-width="4.6" stroke-dasharray="3.5 5.5" stroke-linecap="round"/>
<line x1="846.6" y1="326.2" x2="885.0" y2="601.0" stroke="#d13a2b" stroke-width="2.2"/>
<line x1="846.6" y1="326.2" x2="885.0" y2="601.0" stroke="#d13a2b" stroke-width="4.6" stroke-dasharray="3.5 5.5" stroke-linecap="round"/>
<line x1="852.7" y1="324.4" x2="890.7" y2="598.7" stroke="#d13a2b" stroke-width="2.2"/>
<line x1="852.7" y1="324.4" x2="890.7" y2="598.7" stroke="#d13a2b" stroke-width="4.6" stroke-dasharray="3.5 5.5" stroke-linecap="round"/>
<line x1="858.8" y1="322.6" x2="896.5" y2="596.5" stroke="#d13a2b" stroke-width="2.2"/>
<line x1="858.8" y1="322.6" x2="896.5" y2="596.5" stroke="#d13a2b" stroke-width="4.6" stroke-dasharray="3.5 5.5" stroke-linecap="round"/>
<line x1="864.9" y1="320.8" x2="902.2" y2="594.2" stroke="#d13a2b" stroke-width="2.2"/>
<line x1="864.9" y1="320.8" x2="902.2" y2="594.2" stroke="#d13a2b" stroke-width="4.6" stroke-dasharray="3.5 5.5" stroke-linecap="round"/>
<line x1="871.0" y1="319.0" x2="908.0" y2="592.0" stroke="#d13a2b" stroke-width="2.2"/>
<line x1="871.0" y1="319.0" x2="908.0" y2="592.0" stroke="#d13a2b" stroke-width="4.6" stroke-dasharray="3.5 5.5" stroke-linecap="round"/>
<line x1="1713.0" y1="322.0" x2="1651.7" y2="596.5" stroke="#d13a2b" stroke-width="3.0"/>
<line x1="1713.0" y1="322.0" x2="1651.7" y2="596.5" stroke="#d13a2b" stroke-width="5.4" stroke-dasharray="3.5 5.5" stroke-linecap="round"/>
<line x1="1720.3" y1="324.4" x2="1661.3" y2="597.7" stroke="#d13a2b" stroke-width="3.0"/>
<line x1="1720.3" y1="324.4" x2="1661.3" y2="597.7" stroke="#d13a2b" stroke-width="5.4" stroke-dasharray="3.5 5.5" stroke-linecap="round"/>
<line x1="1726.3" y1="326.9" x2="1669.7" y2="601.4" stroke="#d13a2b" stroke-width="3.0"/>
<line x1="1726.3" y1="326.9" x2="1669.7" y2="601.4" stroke="#d13a2b" stroke-width="5.4" stroke-dasharray="3.5 5.5" stroke-linecap="round"/>
<line x1="1769.7" y1="338.9" x2="1695.0" y2="611.0" stroke="#d13a2b" stroke-width="3.0"/>
<line x1="1769.7" y1="338.9" x2="1695.0" y2="611.0" stroke="#d13a2b" stroke-width="5.4" stroke-dasharray="3.5 5.5" stroke-linecap="round"/>
<line x1="1781.7" y1="342.5" x2="1702.2" y2="613.4" stroke="#d13a2b" stroke-width="3.0"/>
<line x1="1781.7" y1="342.5" x2="1702.2" y2="613.4" stroke="#d13a2b" stroke-width="5.4" stroke-dasharray="3.5 5.5" stroke-linecap="round"/>
<line x1="1786.5" y1="347.3" x2="1711.9" y2="615.8" stroke="#d13a2b" stroke-width="3.0"/>
<line x1="1786.5" y1="347.3" x2="1711.9" y2="615.8" stroke="#d13a2b" stroke-width="5.4" stroke-dasharray="3.5 5.5" stroke-linecap="round"/>

<path d="M666.0 792.8 C654.0 794.8 653.8 796.9 648.2 801.7 C642.7 806.5 636.2 813.5 632.7 821.6 C629.2 829.7 627.2 840.8 627.2 850.4 C627.2 860.0 629.6 872.2 632.7 879.2 C635.8 886.2 639.7 889.5 646.0 892.5 C652.3 895.5 663.0 896.9 670.4 896.9 C677.8 896.9 684.8 890.6 690.3 892.5 C695.8 894.4 699.2 903.9 703.6 908.0 C708.0 912.1 711.4 915.4 716.9 916.9 C722.4 918.4 730.2 919.5 736.8 916.9 C743.4 914.3 752.3 907.7 756.7 901.4 C761.1 895.1 759.7 886.6 763.4 879.2 C767.1 871.8 775.6 865.2 778.9 857.1 C782.2 849.0 783.3 839.0 783.3 830.5 C783.3 822.0 781.1 812.4 778.9 806.1 C776.7 799.8 779.8 795.5 770.0 792.8 C760.2 790.1 737.3 790.0 720.0 790.0 C702.7 790.0 678.0 790.8 666.0 792.8 Z" fill="#2ce44e" stroke="#0a4a14" stroke-width="1.3" filter="url(#sh)"/>
<path d="M770.0 792.8 C763.9 798.9 778.9 808.7 783.3 812.8 C787.7 816.9 792.5 815.7 796.6 817.2 C800.7 818.7 807.7 817.9 807.7 821.6 C807.7 825.3 798.1 834.1 796.6 839.3 C795.1 844.5 796.6 848.9 798.8 852.6 C801.0 856.3 805.5 859.6 809.9 861.5 C814.3 863.4 820.6 864.8 825.4 863.7 C830.2 862.6 834.6 860.0 838.7 854.8 C842.8 849.6 846.8 844.5 849.8 832.7 C852.8 820.9 861.4 793.5 856.4 784.0 C851.4 774.5 834.4 774.5 820.0 776.0 C805.6 777.5 776.1 786.7 770.0 792.8 Z" fill="#2ce44e" stroke="#0a4a14" stroke-width="1.3" filter="url(#sh)"/>
<path d="M896.6 798.6 C893.4 809.4 888.4 841.2 885.6 858.8 C882.8 876.4 881.0 892.5 880.0 904.3 C879.1 916.1 879.0 924.7 880.0 929.8 C881.0 934.8 883.8 934.7 885.8 934.8 C887.8 934.9 890.6 935.1 892.0 930.2 C893.4 925.4 892.6 917.2 894.0 905.7 C895.4 894.2 897.5 878.6 900.4 861.2 C903.3 843.8 910.6 812.5 911.4 801.4 C912.2 790.2 907.5 794.5 905.1 794.1 C902.6 793.6 899.9 787.9 896.6 798.6 Z" fill="#2ce44e" stroke="#0a4a14" stroke-width="1.3" filter="url(#sh)"/>
<path d="M899.0 799.1 C896.4 810.2 893.6 839.4 893.0 859.7 C892.4 880.0 892.3 899.4 895.6 921.2 C898.9 943.0 906.0 971.8 912.9 990.5 C919.9 1009.2 931.9 1025.8 937.3 1033.1 C942.7 1040.5 943.6 1035.6 945.5 1034.6 C947.4 1033.5 951.8 1035.1 948.7 1026.9 C945.6 1018.7 933.1 1003.5 927.1 985.5 C921.0 967.5 915.1 939.7 912.4 918.8 C909.7 898.0 910.2 880.0 911.0 860.3 C911.8 840.6 917.3 812.1 917.0 800.9 C916.6 789.7 911.7 793.1 908.7 792.8 C905.7 792.5 901.7 788.0 899.0 799.1 Z" fill="#2ce44e" stroke="#0a4a14" stroke-width="1.3" filter="url(#sh)"/>
<path d="M893.0 726.0 C889.5 719.0 889.5 719.8 900.0 716.0 C910.5 712.2 949.8 702.0 956.0 703.0 C962.2 704.0 942.8 712.8 937.0 722.0 C931.2 731.2 928.3 757.3 921.0 758.0 C913.7 758.7 896.5 733.0 893.0 726.0 Z" fill="#000"/>
<path d="M956.3 692.8 C950.8 698.2 942.7 712.1 937.1 722.6 C931.5 733.1 926.0 743.3 922.5 755.9 C919.0 768.4 917.6 783.7 916.2 797.7 C914.7 811.6 914.0 821.1 914.0 839.7 C914.0 858.2 909.8 887.0 916.2 908.9 C922.6 930.7 938.1 949.9 952.3 970.7 C966.5 991.5 986.3 1014.7 1001.5 1033.7 C1016.7 1052.7 1033.6 1076.1 1043.5 1084.5 C1053.4 1093.0 1057.3 1087.2 1060.8 1084.4 C1064.3 1081.5 1070.7 1078.8 1064.5 1067.5 C1058.2 1056.1 1038.2 1035.2 1023.5 1016.3 C1008.8 997.5 989.4 973.6 976.3 954.3 C963.2 935.0 950.4 919.5 945.0 900.5 C939.6 881.5 943.2 856.7 944.0 840.3 C944.8 824.0 947.6 815.0 949.8 802.3 C952.1 789.6 955.3 775.6 957.5 764.1 C959.7 752.7 959.9 743.6 962.9 733.4 C965.9 723.3 974.5 710.4 975.7 703.2 C976.9 696.0 973.4 692.0 970.1 690.2 C966.9 688.5 961.8 687.4 956.3 692.8 Z" fill="#2ce44e" stroke="#0a4a14" stroke-width="1.3" filter="url(#sh)"/>
<path d="M1000.0 700.0 C1003.2 684.0 1003.0 655.4 1009.5 643.7 C1016.0 632.0 1027.7 634.1 1039.3 629.8 C1050.9 625.5 1067.4 620.4 1079.0 617.9 C1090.6 615.4 1099.0 614.2 1108.9 614.9 C1118.8 615.6 1130.1 618.5 1138.6 621.9 C1147.1 625.2 1151.4 629.5 1160.0 635.0 C1168.6 640.5 1180.7 647.5 1190.0 655.0 C1199.3 662.5 1211.7 669.2 1216.0 680.0 C1220.3 690.8 1216.3 703.3 1216.0 720.0 C1215.7 736.7 1214.7 766.7 1214.0 780.0 C1213.3 793.3 1218.0 802.5 1212.0 800.0 C1206.0 797.5 1188.7 772.8 1178.0 765.0 C1167.3 757.2 1157.8 756.7 1148.0 753.0 C1138.2 749.3 1128.5 745.0 1119.0 743.0 C1109.5 741.0 1100.8 738.2 1091.0 741.0 C1081.2 743.8 1068.0 757.7 1060.0 760.0 C1052.0 762.3 1053.7 753.8 1043.0 755.0 C1032.3 756.2 1004.8 769.5 996.0 767.0 C987.2 764.5 989.3 751.2 990.0 740.0 C990.7 728.8 996.8 716.0 1000.0 700.0 Z" fill="#2ce44e" stroke="#0a4a14" stroke-width="1.3" filter="url(#sh)"/>
<path d="M1095.0 719.0 C1102.3 718.7 1124.7 715.5 1138.6 717.2 C1152.5 718.9 1166.8 723.4 1178.4 729.0 C1190.0 734.6 1203.2 747.3 1208.2 751.0" fill="none" stroke="#0a4a14" stroke-width="1.3" stroke-linecap="round" opacity="1"/>
<path d="M1093.0 737.0 C1100.6 737.3 1124.4 736.7 1138.6 739.0 C1152.8 741.3 1166.8 746.0 1178.4 751.0 C1190.0 756.0 1203.2 765.9 1208.2 768.9" fill="none" stroke="#0a4a14" stroke-width="1.3" stroke-linecap="round" opacity="1"/>
<path d="M1100.0 703.0 C1106.4 702.7 1125.5 699.9 1138.6 701.3 C1151.7 702.7 1167.5 706.9 1178.4 711.2 C1189.3 715.5 1199.9 724.4 1204.2 727.0" fill="none" stroke="#0a4a14" stroke-width="1.3" stroke-linecap="round" opacity="1"/>
<path d="M1005.6 711.0 C1009.6 708.1 1020.5 698.6 1029.4 693.4 C1038.3 688.1 1050.8 683.1 1059.2 679.5 C1067.6 675.9 1076.5 673.2 1080.0 672.0" fill="none" stroke="#0a4a14" stroke-width="1.3" stroke-linecap="round" opacity="1"/>
<path d="M997.6 757.0 C1001.2 755.0 1011.5 749.7 1019.5 745.0 C1027.5 740.3 1041.0 731.7 1045.3 729.0" fill="none" stroke="#0a4a14" stroke-width="1.3" stroke-linecap="round" opacity="1"/>
<path d="M1009.5 657.6 C1014.5 655.5 1029.2 647.9 1039.3 645.0 C1049.4 642.1 1064.9 640.8 1070.0 640.0" fill="none" stroke="#0a4a14" stroke-width="1.3" stroke-linecap="round" opacity="1"/>
<path d="M996.0 767.0 C1003.8 756.7 1035.3 750.8 1043.0 753.0 C1050.7 755.2 1040.7 766.2 1042.0 780.0 C1043.3 793.8 1058.7 830.2 1051.0 836.0 C1043.3 841.8 1005.2 826.5 996.0 815.0 C986.8 803.5 988.2 777.3 996.0 767.0 Z" fill="#000"/>
<path d="M957.0 690.0 C953.8 701.0 957.8 723.1 958.0 739.8 C958.2 756.5 957.3 775.1 958.0 790.4 C958.7 805.7 960.2 817.1 962.1 831.9 C964.0 846.6 963.1 863.4 969.4 878.9 C975.7 894.4 986.7 909.6 999.9 925.0 C1013.2 940.4 1033.5 958.3 1048.9 971.1 C1064.3 983.8 1082.3 997.0 1092.4 1001.3 C1102.5 1005.5 1107.0 1000.4 1109.7 996.6 C1112.5 992.9 1115.8 986.9 1109.0 978.7 C1102.2 970.5 1083.1 960.1 1069.1 947.5 C1055.1 935.0 1036.4 917.1 1025.1 903.6 C1013.7 890.1 1005.9 878.9 1001.0 866.3 C996.1 853.7 997.1 840.9 995.9 828.1 C994.7 815.3 994.0 804.3 994.0 789.6 C994.0 774.9 995.5 756.8 996.0 740.2 C996.5 723.6 1000.2 701.0 997.0 690.0 C993.8 679.0 983.7 674.0 977.0 674.0 C970.3 674.0 960.2 679.0 957.0 690.0 Z" fill="#2ce44e" stroke="#0a4a14" stroke-width="1.3" filter="url(#sh)"/>
<path d="M1065.0 683.4 C1059.7 691.3 1054.8 700.3 1051.2 711.2 C1047.6 722.1 1044.6 737.7 1043.3 749.0 C1042.0 760.3 1042.0 767.2 1043.3 778.8 C1044.6 790.4 1048.9 808.6 1051.2 818.5 C1053.5 828.4 1047.3 835.1 1057.2 838.4 C1067.1 841.7 1103.8 845.0 1110.8 838.4 C1117.8 831.8 1102.2 811.9 1098.9 798.6 C1095.6 785.4 1092.3 770.5 1091.0 758.9 C1089.7 747.3 1089.7 737.0 1091.0 729.0 C1092.3 721.0 1094.9 716.5 1098.9 711.2 C1102.9 705.9 1108.2 700.9 1114.8 697.3 C1121.4 693.7 1131.3 690.7 1138.6 689.4 C1145.9 688.1 1150.2 688.4 1158.5 689.4 C1166.8 690.4 1180.0 693.8 1188.3 695.4 C1196.6 697.0 1203.6 700.2 1208.2 699.3 C1212.8 698.4 1215.3 693.3 1216.0 690.0 C1216.7 686.7 1216.8 683.6 1212.2 679.5 C1207.6 675.4 1197.2 670.2 1188.3 665.6 C1179.3 661.0 1166.1 655.6 1158.5 651.6 C1150.9 647.6 1147.6 643.5 1142.6 641.7 C1137.6 639.9 1134.3 639.7 1128.7 640.7 C1123.1 641.7 1116.5 643.9 1108.9 647.7 C1101.3 651.5 1090.3 657.7 1083.0 663.6 C1075.7 669.5 1070.3 675.5 1065.0 683.4 Z" fill="#2ce44e" stroke="#0a4a14" stroke-width="1.3" filter="url(#sh)"/>
<path d="M1092.0 744.0 C1094.8 735.2 1110.6 745.5 1118.8 747.0 C1127.0 748.5 1131.1 749.3 1141.0 753.0 C1150.9 756.7 1167.2 762.5 1178.0 769.0 C1188.8 775.5 1200.2 786.8 1206.0 792.0 C1211.8 797.2 1211.5 791.2 1213.0 800.0 C1214.5 808.8 1219.5 837.0 1215.0 845.0 C1210.5 853.0 1192.2 850.8 1186.0 848.0 C1179.8 845.2 1181.6 832.9 1178.0 828.0 C1174.4 823.1 1171.1 818.1 1164.5 818.5 C1157.9 818.9 1147.2 827.1 1138.6 830.4 C1130.0 833.7 1119.1 843.5 1113.0 838.4 C1106.9 833.3 1105.5 815.7 1102.0 800.0 C1098.5 784.3 1089.2 752.8 1092.0 744.0 Z" fill="#000"/>
<path d="M657.1 733.0 C658.2 724.1 663.4 718.3 666.0 710.9 C668.6 703.5 669.3 694.2 672.6 688.7 C675.9 683.2 677.0 682.5 685.9 677.7 C694.8 672.9 711.7 666.3 725.7 660.0 C739.7 653.7 755.3 645.4 770.0 640.0 C784.7 634.6 792.3 631.9 813.9 627.7 C835.5 623.5 880.0 619.1 899.4 615.0 C918.8 610.9 917.8 606.6 930.0 603.0 C942.2 599.4 958.5 595.1 972.8 593.5 C987.0 591.9 1008.4 592.4 1015.5 593.5 C1022.6 594.6 1016.2 594.0 1015.5 600.0 C1014.8 606.0 1012.8 619.9 1011.5 629.8 C1010.2 639.7 1008.5 650.0 1007.5 659.6 C1006.5 669.2 1007.6 681.1 1005.6 687.4 C1003.6 693.7 1000.6 695.0 995.6 697.3 C990.6 699.6 985.1 700.3 975.8 701.3 C966.5 702.3 953.8 701.2 940.0 703.3 C926.2 705.4 903.8 711.3 893.0 714.0 C882.2 716.7 884.4 721.0 875.0 719.7 C865.6 718.4 848.5 709.4 836.5 706.4 C824.5 703.4 812.5 702.7 803.3 702.0 C794.0 701.3 788.4 701.6 781.0 702.0 C773.6 702.4 765.2 702.4 759.0 704.2 C752.8 706.0 748.3 708.2 743.5 713.0 C738.7 717.8 734.3 726.0 730.2 733.0 C726.1 740.0 720.0 748.6 719.1 755.2 C718.2 761.9 724.2 767.0 724.6 772.9 C725.0 778.8 724.4 785.6 721.3 790.6 C718.2 795.6 710.6 800.4 705.8 802.8 C701.0 805.2 696.6 805.5 692.5 805.0 C688.4 804.5 685.4 803.4 681.4 799.5 C677.4 795.6 671.9 787.6 668.2 781.7 C664.5 775.8 661.1 772.1 659.3 764.0 C657.4 755.9 656.0 741.9 657.1 733.0 Z" fill="#2ce44e" stroke="#0a4a14" stroke-width="1.3" filter="url(#sh)"/>
<path d="M700.0 690.0 C710.0 686.7 735.0 676.7 760.0 670.0 C785.0 663.3 820.0 655.0 850.0 650.0 C880.0 645.0 915.0 643.3 940.0 640.0 C965.0 636.7 990.0 631.7 1000.0 630.0" fill="none" stroke="#1aa032" stroke-width="1" stroke-linecap="round" opacity="0.5"/>
<path d="M735.0 724.0 C733.0 723.7 742.2 710.0 748.0 706.0 C753.8 702.0 759.0 701.2 770.0 700.0 C781.0 698.8 810.3 698.5 814.0 699.0 C817.7 699.5 801.0 701.5 792.0 703.0 C783.0 704.5 769.5 704.5 760.0 708.0 C750.5 711.5 737.0 724.3 735.0 724.0 Z" fill="#000"/>
<path d="M723.5 746.3 C724.6 740.4 727.6 734.5 732.4 728.6 C737.2 722.7 745.3 715.3 752.3 710.9 C759.3 706.5 767.9 703.7 774.5 702.0 C781.1 700.3 785.6 700.5 792.2 700.9 C798.8 701.3 806.9 702.9 814.3 704.2 C821.7 705.5 826.4 705.4 836.5 708.7 C846.6 712.0 860.1 715.6 875.0 724.2 C889.9 732.9 911.6 749.6 925.6 760.6 C939.6 771.6 950.2 783.7 959.2 790.0 C968.2 796.3 969.7 793.2 979.7 798.6 C989.8 804.0 1006.2 816.2 1019.5 822.5 C1032.8 828.8 1046.0 833.8 1059.2 836.4 C1072.5 839.0 1085.8 839.4 1099.0 838.4 C1112.2 837.4 1127.5 833.6 1138.6 830.4 C1149.7 827.2 1158.4 819.0 1165.4 819.0 C1172.4 819.0 1176.9 824.6 1180.5 830.3 C1184.1 836.0 1186.0 845.0 1186.8 853.0 C1187.6 861.0 1187.4 871.5 1185.5 878.2 C1183.6 884.9 1182.2 891.3 1175.5 893.4 C1168.8 895.5 1154.5 892.1 1145.2 890.8 C1136.0 889.5 1130.0 888.6 1120.0 885.8 C1110.0 883.0 1100.8 878.1 1085.2 874.0 C1069.6 869.9 1044.6 867.0 1026.4 861.4 C1008.2 855.8 991.4 849.5 976.0 840.4 C960.6 831.3 947.3 815.9 934.0 806.8 C920.7 797.7 906.0 790.0 896.2 785.8 C886.4 781.6 885.0 783.5 875.0 781.7 C865.0 779.9 848.5 775.5 836.5 775.1 C824.5 774.7 814.4 776.5 803.3 779.5 C792.2 782.5 778.5 790.6 770.0 792.8 C761.5 795.0 758.2 794.6 752.3 792.8 C746.4 790.9 739.0 786.5 734.6 781.7 C730.2 776.9 727.6 769.9 725.7 764.0 C723.9 758.1 722.4 752.2 723.5 746.3 Z" fill="#2ce44e" stroke="#0a4a14" stroke-width="1.3" filter="url(#sh)"/>
<path d="M1150.0 836.0 C1151.0 837.7 1155.5 842.3 1156.0 846.0 C1156.5 849.7 1152.7 854.7 1153.0 858.0 C1153.3 861.3 1158.3 863.0 1158.0 866.0 C1157.7 869.0 1151.5 873.0 1151.0 876.0 C1150.5 879.0 1154.3 882.7 1155.0 884.0" fill="none" stroke="#063a0e" stroke-width="1.6" stroke-linecap="round" opacity="1"/>
<path d="M1146.0 852.0 C1147.0 852.7 1149.7 856.3 1152.0 856.0 C1154.3 855.7 1158.7 851.0 1160.0 850.0" fill="none" stroke="#063a0e" stroke-width="1.1" stroke-linecap="round" opacity="1"/>
<path d="M1140.0 625.4 C1141.0 621.2 1143.6 621.0 1148.2 619.9 C1152.8 618.8 1161.3 619.9 1167.5 618.5 C1173.7 617.1 1179.2 613.3 1185.4 611.6 C1191.6 609.9 1198.9 608.2 1204.6 608.2 C1210.3 608.2 1213.7 613.2 1219.4 611.5 C1225.1 609.8 1233.6 602.3 1239.0 597.7 C1244.4 593.1 1249.2 588.3 1252.0 584.0 C1254.8 579.7 1255.3 576.7 1256.0 572.0 C1256.7 567.3 1256.7 561.2 1256.0 556.0 C1255.3 550.8 1251.7 544.7 1252.0 541.0 C1252.3 537.3 1255.3 535.2 1258.0 534.0 C1260.7 532.8 1264.7 533.0 1268.0 534.0 C1271.3 535.0 1275.8 537.2 1278.0 540.0 C1280.2 542.8 1281.3 547.2 1281.0 551.0 C1280.7 554.8 1276.7 558.8 1276.0 563.0 C1275.3 567.2 1275.8 572.2 1277.0 576.0 C1278.2 579.8 1280.9 581.9 1283.5 585.5 C1286.1 589.1 1288.6 593.6 1292.7 597.7 C1296.8 601.8 1303.0 607.5 1308.0 610.0 C1313.0 612.5 1317.0 612.0 1322.9 613.0 C1328.8 614.0 1336.2 614.3 1343.5 615.7 C1350.8 617.1 1361.4 618.9 1366.9 621.2 C1372.4 623.5 1374.7 625.8 1376.5 629.5 C1378.3 633.2 1379.3 639.0 1377.5 643.7 C1375.7 648.4 1373.4 653.2 1365.5 657.6 C1357.6 662.0 1338.9 664.6 1330.0 670.0 C1321.1 675.4 1317.3 682.4 1311.9 690.0 C1306.5 697.6 1300.4 695.8 1297.8 715.8 C1295.2 735.8 1296.7 790.3 1296.5 810.2 C1296.3 830.1 1299.9 828.7 1296.5 835.4 C1293.1 842.1 1288.1 848.0 1276.3 850.5 C1264.5 853.0 1236.0 852.2 1225.9 850.5 C1215.8 848.8 1217.5 850.5 1215.8 840.4 C1214.1 830.3 1215.8 810.8 1215.8 790.0 C1215.8 769.2 1216.3 729.7 1216.0 715.8 C1215.7 701.9 1218.5 712.5 1214.2 706.5 C1209.9 700.5 1199.0 687.8 1190.0 680.0 C1181.0 672.2 1168.0 665.8 1160.0 660.0 C1152.0 654.2 1145.3 650.8 1142.0 645.0 C1138.7 639.2 1139.0 629.6 1140.0 625.4 Z" fill="#2ce44e" stroke="#0a4a14" stroke-width="1.3" filter="url(#sh)"/>
<path d="M1219.7 639.0 C1220.2 645.2 1217.9 666.1 1222.5 676.2 C1227.1 686.3 1236.7 695.5 1247.2 699.6 C1257.7 703.7 1275.4 704.9 1285.7 701.0 C1296.0 697.1 1304.6 684.9 1309.0 676.2 C1313.4 667.5 1311.4 653.3 1311.9 648.7" fill="none" stroke="#0a4a14" stroke-width="1.3" stroke-linecap="round" opacity="1"/>
<path d="M1229.4 628.0 C1235.1 626.0 1252.2 615.5 1263.7 615.7 C1275.2 616.0 1292.4 627.2 1298.1 629.5" fill="none" stroke="#0a4a14" stroke-width="1.3" stroke-linecap="round" opacity="1"/>
<path d="M1232.0 612.0 C1237.5 610.0 1254.0 600.0 1265.0 600.0 C1276.0 600.0 1292.5 610.0 1298.0 612.0" fill="none" stroke="#0a4a14" stroke-width="1.3" stroke-linecap="round" opacity="1"/>
<path d="M1216 706 L1297 706 L1296.5 835 L1276 850 L1226 850 L1215.8 840 Z" fill="#063010" opacity="0.22"/>
<path d="M1217.0 708.0 C1223.5 710.2 1243.0 721.0 1256.0 721.0 C1269.0 721.0 1288.5 710.2 1295.0 708.0" fill="none" stroke="#0a4a14" stroke-width="1.2" stroke-linecap="round" opacity="0.75"/>
<path d="M1217.0 718.0 C1223.5 720.2 1243.0 731.0 1256.0 731.0 C1269.0 731.0 1288.5 720.2 1295.0 718.0" fill="none" stroke="#0a4a14" stroke-width="0.9" stroke-linecap="round" opacity="0.75"/>
<path d="M1217.0 728.0 C1223.5 730.2 1243.0 741.0 1256.0 741.0 C1269.0 741.0 1288.5 730.2 1295.0 728.0" fill="none" stroke="#0a4a14" stroke-width="1.2" stroke-linecap="round" opacity="0.75"/>
<path d="M1217.0 738.0 C1223.5 740.2 1243.0 751.0 1256.0 751.0 C1269.0 751.0 1288.5 740.2 1295.0 738.0" fill="none" stroke="#0a4a14" stroke-width="0.9" stroke-linecap="round" opacity="0.75"/>
<path d="M1217.0 748.0 C1223.5 750.2 1243.0 761.0 1256.0 761.0 C1269.0 761.0 1288.5 750.2 1295.0 748.0" fill="none" stroke="#0a4a14" stroke-width="1.2" stroke-linecap="round" opacity="0.75"/>
<path d="M1217.0 758.0 C1223.5 760.2 1243.0 771.0 1256.0 771.0 C1269.0 771.0 1288.5 760.2 1295.0 758.0" fill="none" stroke="#0a4a14" stroke-width="0.9" stroke-linecap="round" opacity="0.75"/>
<path d="M1217.0 768.0 C1223.5 770.2 1243.0 781.0 1256.0 781.0 C1269.0 781.0 1288.5 770.2 1295.0 768.0" fill="none" stroke="#0a4a14" stroke-width="1.2" stroke-linecap="round" opacity="0.75"/>
<path d="M1217.0 778.0 C1223.5 780.2 1243.0 791.0 1256.0 791.0 C1269.0 791.0 1288.5 780.2 1295.0 778.0" fill="none" stroke="#0a4a14" stroke-width="0.9" stroke-linecap="round" opacity="0.75"/>
<path d="M1217.0 788.0 C1223.5 790.2 1243.0 801.0 1256.0 801.0 C1269.0 801.0 1288.5 790.2 1295.0 788.0" fill="none" stroke="#0a4a14" stroke-width="1.2" stroke-linecap="round" opacity="0.75"/>
<path d="M1217.0 798.0 C1223.5 800.2 1243.0 811.0 1256.0 811.0 C1269.0 811.0 1288.5 800.2 1295.0 798.0" fill="none" stroke="#0a4a14" stroke-width="0.9" stroke-linecap="round" opacity="0.75"/>
<path d="M1217.0 808.0 C1223.5 810.2 1243.0 821.0 1256.0 821.0 C1269.0 821.0 1288.5 810.2 1295.0 808.0" fill="none" stroke="#0a4a14" stroke-width="1.2" stroke-linecap="round" opacity="0.75"/>
<path d="M1217.0 818.0 C1223.5 820.2 1243.0 831.0 1256.0 831.0 C1269.0 831.0 1288.5 820.2 1295.0 818.0" fill="none" stroke="#0a4a14" stroke-width="0.9" stroke-linecap="round" opacity="0.75"/>
<path d="M1217.0 828.0 C1223.5 830.2 1243.0 841.0 1256.0 841.0 C1269.0 841.0 1288.5 830.2 1295.0 828.0" fill="none" stroke="#0a4a14" stroke-width="1.2" stroke-linecap="round" opacity="0.75"/>
<path d="M1217.0 838.0 C1223.5 840.2 1243.0 851.0 1256.0 851.0 C1269.0 851.0 1288.5 840.2 1295.0 838.0" fill="none" stroke="#0a4a14" stroke-width="0.9" stroke-linecap="round" opacity="0.75"/>
<path d="M1203.2 855.5 C1209.1 851.3 1213.7 851.3 1225.9 850.5 C1238.1 849.7 1264.5 849.7 1276.3 850.5 C1288.1 851.3 1290.6 852.1 1296.5 855.5 C1302.4 858.9 1306.6 865.7 1311.6 870.7 C1316.6 875.8 1321.7 881.6 1326.7 885.8 C1331.7 890.0 1338.8 892.5 1341.8 895.9 C1344.8 899.3 1345.2 902.6 1344.4 906.0 C1343.6 909.4 1340.6 913.2 1336.8 916.1 C1333.0 919.0 1325.9 920.2 1321.7 923.6 C1317.5 927.0 1315.0 929.9 1311.6 936.2 C1308.2 942.5 1304.9 953.0 1301.5 961.4 C1298.1 969.8 1294.3 977.4 1291.4 986.6 C1288.5 995.9 1286.5 1010.0 1283.9 1016.9 C1281.3 1023.8 1276.8 1019.6 1276.0 1028.0 C1275.2 1036.4 1277.5 1056.5 1278.8 1067.3 C1280.1 1078.0 1283.5 1085.3 1283.9 1092.5 C1284.3 1099.7 1296.0 1107.2 1281.3 1110.2 C1266.6 1113.2 1209.9 1113.6 1195.6 1110.2 C1181.3 1106.8 1195.2 1098.0 1195.6 1090.0 C1196.0 1082.0 1197.3 1072.0 1198.2 1062.3 C1199.1 1052.6 1199.6 1039.5 1200.7 1032.0 C1201.8 1024.5 1205.0 1023.7 1205.0 1017.0 C1205.0 1010.3 1202.7 1002.2 1200.7 991.7 C1198.7 981.2 1196.0 964.8 1193.1 953.9 C1190.1 943.0 1187.6 932.4 1183.0 926.1 C1178.4 919.8 1169.2 920.3 1165.4 916.1 C1161.6 911.9 1159.5 905.1 1160.3 900.9 C1161.1 896.7 1165.4 895.0 1170.4 890.8 C1175.5 886.6 1185.1 881.6 1190.6 875.7 C1196.1 869.8 1197.3 859.7 1203.2 855.5 Z" fill="#2ce44e" stroke="#0a4a14" stroke-width="1.3" filter="url(#sh)"/>
<path d="M1205.0 1025.0 C1210.8 1025.8 1228.2 1029.5 1240.0 1030.0 C1251.8 1030.5 1270.0 1028.3 1276.0 1028.0" fill="none" stroke="#0a4a14" stroke-width="1.3" stroke-linecap="round" opacity="1"/>
<path d="M1726.8 843.7 C1730.0 836.2 1736.7 831.8 1745.8 827.0 C1754.9 822.2 1769.5 816.4 1781.3 815.2 C1793.1 814.0 1807.7 817.6 1816.8 820.0 C1825.9 822.4 1829.1 827.9 1835.8 829.5 C1842.5 831.1 1851.2 826.8 1857.1 829.5 C1863.0 832.2 1867.8 840.1 1871.3 846.0 C1874.8 851.9 1877.2 855.9 1878.4 865.0 C1879.6 874.1 1879.6 891.4 1878.4 900.5 C1877.2 909.6 1875.7 914.3 1871.3 919.4 C1866.9 924.5 1861.4 928.9 1852.3 931.3 C1843.2 933.7 1824.7 932.5 1816.8 933.7 C1808.9 934.9 1811.7 937.6 1805.0 938.4 C1798.3 939.2 1784.5 940.8 1776.6 938.4 C1768.7 936.0 1764.3 931.3 1757.6 924.2 C1750.9 917.1 1741.4 904.5 1736.3 895.8 C1731.2 887.1 1728.4 880.8 1726.8 872.1 C1725.2 863.4 1723.6 851.2 1726.8 843.7 Z" fill="#2ce44e" stroke="#0a4a14" stroke-width="1.3" filter="url(#sh)"/>
<path d="M1658.1 810.5 C1651.0 817.6 1661.7 840.5 1665.3 853.1 C1668.9 865.7 1674.0 879.4 1679.5 886.3 C1685.0 893.2 1692.5 894.6 1698.4 894.6 C1704.3 894.6 1711.8 893.2 1715.0 886.3 C1718.2 879.4 1718.6 865.7 1717.4 853.1 C1716.2 840.5 1717.8 817.6 1707.9 810.5 C1698.0 803.4 1665.2 803.4 1658.1 810.5 Z" fill="#2ce44e" stroke="#0a4a14" stroke-width="1.3" filter="url(#sh)"/>
<path d="M1705.5 803.4 C1709.5 802.2 1732.0 814.9 1736.3 820.0 C1740.6 825.1 1735.5 833.0 1731.6 834.2 C1727.6 835.4 1716.9 832.1 1712.6 827.0 C1708.2 821.9 1701.5 804.6 1705.5 803.4 Z" fill="#2ce44e" stroke="#0a4a14" stroke-width="1.3" filter="url(#sh)"/>
<path d="M1590.5 830.8 C1590.6 840.1 1594.8 866.6 1596.5 880.8 C1598.3 894.9 1599.2 909.2 1601.0 915.7 C1602.9 922.2 1605.6 920.0 1607.5 919.8 C1609.5 919.5 1612.6 921.1 1613.0 914.3 C1613.3 907.6 1611.0 893.4 1609.5 879.2 C1607.9 865.1 1605.6 838.3 1603.5 829.2 C1601.3 820.2 1598.5 824.6 1596.4 824.8 C1594.2 825.1 1590.5 821.5 1590.5 830.8 Z" fill="#2ce44e" stroke="#0a4a14" stroke-width="1.3" filter="url(#sh)"/>
<path d="M1593.5 819.6 C1591.2 836.6 1590.7 889.7 1588.5 915.2 C1586.3 940.8 1584.7 955.9 1580.3 972.9 C1575.8 989.8 1567.6 1005.0 1561.8 1016.7 C1556.0 1028.4 1547.9 1037.4 1545.5 1042.9 C1543.1 1048.4 1546.0 1048.6 1547.5 1049.6 C1549.0 1050.7 1550.1 1053.5 1554.5 1049.1 C1559.0 1044.7 1567.3 1035.3 1574.2 1023.3 C1581.0 1011.3 1590.5 994.9 1595.7 977.1 C1600.9 959.4 1603.0 942.9 1605.5 916.8 C1607.9 890.6 1611.0 837.7 1610.5 820.4 C1610.0 803.2 1605.2 813.4 1602.4 813.2 C1599.5 813.1 1595.8 802.6 1593.5 819.6 Z" fill="#2ce44e" stroke="#0a4a14" stroke-width="1.3" filter="url(#sh)"/>
<path d="M1542.7 716.3 C1544.1 726.5 1555.1 745.8 1559.4 763.2 C1563.7 780.5 1567.9 798.2 1568.5 820.6 C1569.2 843.0 1567.8 872.9 1563.2 897.4 C1558.6 921.9 1551.6 947.4 1540.8 967.6 C1530.1 987.8 1513.6 1003.9 1498.8 1018.6 C1484.0 1033.2 1468.4 1044.4 1451.9 1055.4 C1435.3 1066.4 1408.7 1076.8 1399.4 1084.7 C1390.1 1092.5 1393.9 1098.2 1396.1 1102.3 C1398.3 1106.4 1400.6 1112.9 1412.6 1109.3 C1424.6 1105.7 1450.0 1091.9 1468.1 1080.6 C1486.2 1069.3 1504.4 1057.8 1521.2 1041.4 C1538.0 1025.1 1557.2 1005.6 1569.2 982.4 C1581.1 959.3 1588.4 929.7 1592.8 902.6 C1597.2 875.4 1596.8 843.7 1595.5 819.4 C1594.1 795.1 1589.3 775.5 1584.6 756.8 C1579.9 738.2 1572.8 716.8 1567.3 707.7 C1561.7 698.6 1555.6 700.8 1551.5 702.2 C1547.4 703.6 1541.4 706.2 1542.7 716.3 Z" fill="#2ce44e" stroke="#0a4a14" stroke-width="1.3" filter="url(#sh)"/>
<path d="M1390.6 643.0 C1398.5 645.3 1415.4 641.8 1426.9 644.7 C1438.3 647.6 1448.8 652.7 1459.2 660.6 C1469.5 668.5 1480.4 680.3 1489.0 692.0 C1497.6 703.7 1506.0 714.4 1510.8 730.7 C1515.7 747.1 1517.5 768.5 1518.0 790.3 C1518.5 812.1 1518.5 839.8 1513.6 861.4 C1508.6 882.9 1499.9 902.9 1488.3 919.6 C1476.7 936.4 1456.8 951.0 1444.2 961.8 C1431.6 972.7 1420.9 979.7 1412.6 984.9 C1404.4 990.1 1398.6 988.8 1394.8 993.0 C1391.0 997.2 1387.9 1005.8 1389.6 1010.2 C1391.3 1014.5 1398.9 1018.8 1405.2 1019.0 C1411.5 1019.1 1417.3 1016.2 1427.4 1011.1 C1437.5 1005.9 1450.7 999.9 1465.8 988.2 C1480.8 976.4 1503.6 960.0 1517.7 940.4 C1531.8 920.8 1543.7 895.7 1550.4 870.6 C1557.1 845.5 1558.2 814.9 1558.0 789.7 C1557.8 764.5 1555.3 739.5 1549.2 719.3 C1543.0 699.0 1532.4 683.0 1521.0 668.0 C1509.6 653.0 1495.5 638.8 1480.8 629.4 C1466.2 619.9 1448.4 613.4 1433.1 611.3 C1417.9 609.2 1398.3 613.8 1389.4 617.0 C1380.4 620.2 1379.4 626.2 1379.6 630.5 C1379.8 634.8 1382.8 640.6 1390.6 643.0 Z" fill="#2ce44e" stroke="#0a4a14" stroke-width="1.3" filter="url(#sh)"/>
<path d="M1300.0 650.0 C1307.3 640.0 1326.8 642.4 1340.0 640.0 C1353.2 637.6 1366.3 638.5 1379.5 635.8 C1392.7 633.1 1407.6 624.5 1419.2 623.8 C1430.8 623.1 1439.1 627.8 1449.0 631.8 C1458.9 635.8 1470.5 642.4 1478.8 647.7 C1487.1 653.0 1492.0 654.9 1498.6 663.6 C1505.2 672.3 1514.8 680.8 1518.5 700.0 C1522.2 719.2 1523.6 765.5 1520.5 778.8 C1517.4 792.1 1506.8 781.5 1500.0 780.0 C1493.2 778.5 1491.8 773.5 1480.0 770.0 C1468.2 766.5 1439.1 762.2 1429.0 759.0 C1418.9 755.8 1425.8 753.0 1419.2 751.0 C1412.6 749.0 1401.0 746.3 1389.4 747.0 C1377.8 747.7 1363.3 750.4 1349.7 755.0 C1336.1 759.6 1317.0 774.0 1308.0 774.8 C1299.0 775.6 1298.0 772.5 1296.0 760.0 C1294.0 747.5 1295.3 718.3 1296.0 700.0 C1296.7 681.7 1292.7 660.0 1300.0 650.0 Z" fill="#2ce44e" stroke="#0a4a14" stroke-width="1.3" filter="url(#sh)"/>
<path d="M1306.0 719.2 C1314.9 717.9 1342.4 713.5 1359.6 711.2 C1376.8 708.9 1401.0 706.3 1409.3 705.3" fill="none" stroke="#0a4a14" stroke-width="1.3" stroke-linecap="round" opacity="1"/>
<path d="M1312.0 739.0 C1319.9 736.4 1341.7 726.5 1359.6 723.2 C1377.5 719.9 1409.3 719.9 1419.2 719.2" fill="none" stroke="#0a4a14" stroke-width="1.3" stroke-linecap="round" opacity="1"/>
<path d="M1329.8 745.0 C1338.1 742.0 1364.0 729.3 1379.5 727.0 C1395.0 724.7 1415.8 730.3 1423.0 731.0" fill="none" stroke="#0a4a14" stroke-width="1.3" stroke-linecap="round" opacity="1"/>
<path d="M1470.0 700.0 C1475.0 705.0 1492.5 720.0 1500.0 730.0 C1507.5 740.0 1512.5 755.0 1515.0 760.0" fill="none" stroke="#0a4a14" stroke-width="1.3" stroke-linecap="round" opacity="1"/>
<path d="M1480.0 775.0 C1483.2 773.3 1493.5 778.7 1500.0 780.0 C1506.5 781.3 1515.8 776.2 1519.0 783.0 C1522.2 789.8 1522.2 813.8 1519.0 821.0 C1515.8 828.2 1507.2 823.2 1500.0 826.0 C1492.8 828.8 1479.2 844.0 1476.0 838.0 C1472.8 832.0 1480.3 800.5 1481.0 790.0 C1481.7 779.5 1476.8 776.7 1480.0 775.0 Z" fill="#000"/>
<path d="M1310.0 685.4 C1319.6 679.5 1345.7 665.5 1359.6 659.6 C1373.5 653.7 1383.5 650.4 1393.4 649.7 C1403.3 649.0 1410.9 651.6 1419.2 655.6 C1427.5 659.6 1436.4 666.9 1443.0 673.5 C1449.6 680.1 1454.3 687.8 1458.9 695.4 C1463.5 703.0 1467.5 708.6 1470.8 719.2 C1474.1 729.8 1477.1 747.3 1478.8 758.9 C1480.5 770.5 1481.5 775.5 1480.8 788.7 C1480.1 802.0 1488.4 830.1 1474.8 838.4 C1461.2 846.7 1408.6 845.0 1399.3 838.4 C1390.0 831.8 1414.2 811.9 1419.2 798.6 C1424.2 785.4 1427.4 770.5 1429.1 758.9 C1430.8 747.3 1430.8 737.3 1429.1 729.0 C1427.4 720.7 1424.2 714.6 1419.2 709.3 C1414.2 704.0 1409.2 699.3 1399.3 697.3 C1389.4 695.3 1372.8 696.6 1359.6 697.3 C1346.4 698.0 1328.5 700.0 1319.9 701.3 C1311.3 702.6 1311.0 706.3 1308.0 705.3 C1305.0 704.2 1301.7 698.3 1302.0 695.0 C1302.3 691.7 1300.4 691.3 1310.0 685.4 Z" fill="#2ce44e" stroke="#0a4a14" stroke-width="1.3" filter="url(#sh)"/>
<path d="M1308.0 774.8 C1316.8 769.0 1336.1 759.1 1349.7 755.0 C1363.3 750.9 1377.8 750.3 1389.4 750.0 C1401.0 749.7 1412.6 751.0 1419.2 753.0 C1425.8 755.0 1429.0 754.2 1429.0 762.0 C1429.0 769.8 1424.0 787.3 1419.0 800.0 C1414.0 812.7 1409.2 832.7 1399.3 838.4 C1389.4 844.1 1371.2 837.7 1359.6 834.4 C1348.0 831.1 1339.7 822.2 1329.8 818.5 C1319.9 814.8 1305.5 816.8 1300.0 812.0 C1294.5 807.2 1295.7 796.2 1297.0 790.0 C1298.3 783.8 1299.2 780.6 1308.0 774.8 Z" fill="#000"/>
<path d="M1349.7 776.2 C1346.4 777.2 1335.4 781.9 1328.9 784.8 C1322.4 787.6 1316.1 789.8 1310.6 793.3 C1305.1 796.8 1297.5 801.7 1295.9 805.6 C1294.3 809.5 1299.4 816.2 1300.8 816.6 C1302.2 817.0 1302.6 809.8 1304.4 808.0 C1306.2 806.2 1307.7 808.1 1311.8 805.6 C1315.9 803.1 1322.8 797.8 1328.9 793.3 C1335.0 788.8 1345.0 781.6 1348.5 778.7 C1352.0 775.9 1353.0 775.2 1349.7 776.2 Z" fill="#2ce44e" />
<path d="M1502.6 611.9 C1508.3 607.9 1525.8 611.9 1543.0 615.7 C1560.2 619.5 1584.0 628.2 1606.0 634.6 C1628.0 641.0 1651.4 646.6 1674.7 654.2 C1698.0 661.8 1726.1 672.4 1745.8 680.3 C1765.5 688.2 1779.3 694.5 1793.1 701.6 C1806.9 708.7 1819.6 716.6 1828.7 722.9 C1837.8 729.2 1843.1 734.8 1847.6 739.5 C1852.1 744.2 1854.5 745.8 1855.9 751.3 C1857.3 756.8 1856.9 764.3 1855.9 772.6 C1854.9 780.9 1853.3 793.1 1850.0 801.0 C1846.7 808.9 1840.5 816.0 1835.8 820.0 C1831.1 824.0 1826.3 825.5 1821.6 824.7 C1816.8 823.9 1811.2 820.3 1807.3 815.2 C1803.3 810.1 1800.3 801.0 1797.9 793.9 C1795.5 786.8 1795.9 779.7 1793.1 772.6 C1790.3 765.5 1785.2 757.6 1781.3 751.3 C1777.4 745.0 1775.4 739.0 1769.5 734.7 C1763.6 730.4 1755.7 726.5 1745.8 725.3 C1735.9 724.1 1724.1 724.9 1710.3 727.6 C1696.5 730.4 1674.8 737.4 1662.9 741.8 C1651.1 746.1 1647.1 753.3 1639.2 753.7 C1631.3 754.1 1623.4 748.6 1615.5 744.2 C1607.6 739.9 1600.4 731.5 1591.8 727.6 C1583.2 723.7 1572.9 723.1 1564.0 721.0 C1555.1 718.9 1545.0 716.8 1538.4 715.2 C1531.8 713.6 1528.2 714.5 1524.5 711.2 C1520.8 707.9 1519.2 707.3 1516.5 695.4 C1513.8 683.5 1510.9 653.6 1508.6 639.7 C1506.3 625.8 1496.9 615.9 1502.6 611.9 Z" fill="#2ce44e" stroke="#0a4a14" stroke-width="1.3" filter="url(#sh)"/>
<path d="M1520.0 640.0 C1533.3 643.3 1570.0 651.7 1600.0 660.0 C1630.0 668.3 1670.0 680.0 1700.0 690.0 C1730.0 700.0 1766.7 715.0 1780.0 720.0" fill="none" stroke="#1aa032" stroke-width="1" stroke-linecap="round" opacity="0.5"/>
<path d="M1564.0 722.0 C1570.2 719.7 1603.0 739.5 1615.5 745.0 C1628.0 750.5 1641.8 747.5 1639.2 755.0 C1636.6 762.5 1608.9 784.2 1600.0 790.0 C1591.1 795.8 1589.7 795.2 1586.0 790.0 C1582.3 784.8 1581.7 770.3 1578.0 759.0 C1574.3 747.7 1557.8 724.3 1564.0 722.0 Z" fill="#000"/>
<path d="M1321.7 865.6 C1320.9 857.2 1322.1 843.2 1324.2 835.4 C1326.3 827.6 1330.0 820.8 1334.3 819.0 C1338.5 817.2 1342.2 821.9 1349.7 824.5 C1357.2 827.1 1367.9 831.8 1379.5 834.4 C1391.1 837.0 1402.7 840.4 1419.2 840.4 C1435.8 840.4 1462.2 837.7 1478.8 834.4 C1495.3 831.1 1505.3 825.8 1518.5 820.5 C1531.7 815.2 1548.0 807.4 1558.2 802.6 C1568.5 797.8 1568.5 797.8 1580.0 791.6 C1591.5 785.4 1611.6 773.8 1627.4 765.5 C1643.2 757.2 1660.9 747.7 1674.7 741.8 C1688.5 735.9 1700.4 732.4 1710.3 730.0 C1720.2 727.6 1725.6 726.4 1733.9 727.6 C1742.2 728.8 1752.9 733.0 1760.0 737.0 C1767.1 741.0 1771.9 746.5 1776.6 751.3 C1781.3 756.0 1786.0 759.6 1788.4 765.5 C1790.8 771.4 1791.6 780.1 1790.8 786.8 C1790.0 793.5 1788.0 800.3 1783.7 805.8 C1779.4 811.3 1771.8 818.8 1764.7 820.0 C1757.6 821.2 1748.1 815.7 1741.0 812.9 C1733.9 810.1 1731.2 805.4 1722.1 803.4 C1713.0 801.4 1697.3 800.2 1686.6 801.0 C1675.9 801.8 1668.0 804.5 1658.1 808.1 C1648.2 811.7 1640.4 817.6 1627.4 822.4 C1614.4 827.1 1597.6 832.2 1580.0 836.6 C1562.4 841.0 1542.2 844.0 1522.0 848.8 C1501.8 853.6 1480.0 861.4 1459.0 865.6 C1438.0 869.8 1412.8 870.5 1396.0 874.0 C1379.2 877.5 1366.2 883.8 1358.0 886.6 C1349.8 889.4 1351.7 890.9 1346.9 890.8 C1342.1 890.7 1333.4 890.0 1329.2 885.8 C1325.0 881.6 1322.5 874.0 1321.7 865.6 Z" fill="#2ce44e" stroke="#0a4a14" stroke-width="1.3" filter="url(#sh)"/>
<path d="M1341.0 832.0 C1341.8 834.2 1345.5 840.7 1346.0 845.0 C1346.5 849.3 1343.7 854.5 1344.0 858.0 C1344.3 861.5 1347.8 863.0 1348.0 866.0 C1348.2 869.0 1345.5 874.3 1345.0 876.0" fill="none" stroke="#063a0e" stroke-width="1.6" stroke-linecap="round" opacity="1"/>
<path d="M1350.0 846.0 C1351.3 846.7 1355.7 850.0 1358.0 850.0 C1360.3 850.0 1363.0 846.7 1364.0 846.0" fill="none" stroke="#063a0e" stroke-width="1.1" stroke-linecap="round" opacity="1"/>
<path d="M1046.0 1064.0 C1046.7 1063.2 1050.0 1064.2 1052.0 1065.0 C1054.0 1065.8 1056.0 1068.0 1058.0 1069.0 C1060.0 1070.0 1063.2 1069.8 1064.0 1071.0 C1064.8 1072.2 1064.5 1075.5 1063.0 1076.0 C1061.5 1076.5 1057.5 1075.0 1055.0 1074.0 C1052.5 1073.0 1049.5 1071.7 1048.0 1070.0 C1046.5 1068.3 1045.3 1064.8 1046.0 1064.0 Z" fill="#041c08"/>
<path d="M1098.0 982.0 C1099.0 982.7 1102.3 984.2 1104.0 986.0 C1105.7 987.8 1108.0 990.7 1108.0 993.0 C1108.0 995.3 1104.7 998.8 1104.0 1000.0" fill="none" stroke="#041c08" stroke-width="1.3" stroke-linecap="round" opacity="1"/>
<path d="M1391.0 1003.0 C1392.0 1002.3 1394.8 999.5 1397.0 999.0 C1399.2 998.5 1402.8 999.8 1404.0 1000.0" fill="none" stroke="#041c08" stroke-width="2" stroke-linecap="round" opacity="1"/>
<path d="M1404.0 1000.0 L1402.0 1008.0" fill="none" stroke="#041c08" stroke-width="1.2" stroke-linecap="round" opacity="1"/>
<path d="M670.0 825.0 C670.2 823.7 672.8 821.7 674.0 822.0 C675.2 822.3 677.2 825.7 677.0 827.0 C676.8 828.3 674.2 830.3 673.0 830.0 C671.8 829.7 669.8 826.3 670.0 825.0 Z" fill="#041c08"/>
<path d="M673.0 834.0 C673.3 833.0 675.2 831.5 676.0 832.0 C676.8 832.5 678.3 836.0 678.0 837.0 C677.7 838.0 674.8 838.5 674.0 838.0 C673.2 837.5 672.7 835.0 673.0 834.0 Z" fill="#041c08"/>
<path d="M697.0 852.0 C696.3 850.3 701.5 847.5 704.0 847.0 C706.5 846.5 709.7 848.0 712.0 849.0 C714.3 850.0 718.7 851.7 718.0 853.0 C717.3 854.3 711.5 857.2 708.0 857.0 C704.5 856.8 697.7 853.7 697.0 852.0 Z" fill="#041c08"/>
<path d="M706.0 854.0 C707.7 854.7 713.0 857.7 716.0 858.0 C719.0 858.3 721.0 854.7 724.0 856.0 C727.0 857.3 732.3 864.3 734.0 866.0" fill="none" stroke="#0a4012" stroke-width="1.1" stroke-linecap="round" opacity="1"/>
<path d="M656.0 796.0 C656.5 793.3 661.3 790.8 663.0 792.0 C664.7 793.2 666.5 800.3 666.0 803.0 C665.5 805.7 661.7 809.2 660.0 808.0 C658.3 806.8 655.5 798.7 656.0 796.0 Z" fill="#041c08"/>
<path d="M1770.0 893.0 C1771.0 892.5 1774.2 889.7 1776.0 890.0 C1777.8 890.3 1779.3 894.8 1781.0 895.0 C1782.7 895.2 1784.0 890.7 1786.0 891.0 C1788.0 891.3 1790.7 895.7 1793.0 897.0 C1795.3 898.3 1798.2 898.2 1800.0 899.0 C1801.8 899.8 1803.3 901.5 1804.0 902.0" fill="none" stroke="#062a0a" stroke-width="1.6" stroke-linecap="round" opacity="1"/>
<path d="M1818.0 886.0 C1818.0 884.7 1819.8 882.2 1821.0 882.0 C1822.2 881.8 1825.0 883.7 1825.0 885.0 C1825.0 886.3 1822.2 889.8 1821.0 890.0 C1819.8 890.2 1818.0 887.3 1818.0 886.0 Z" fill="#041c08"/>
<path d="M1836.0 858.0 C1836.8 856.3 1840.2 854.3 1842.0 855.0 C1843.8 855.7 1847.0 859.8 1847.0 862.0 C1847.0 864.2 1843.7 867.5 1842.0 868.0 C1840.3 868.5 1838.0 866.7 1837.0 865.0 C1836.0 863.3 1835.2 859.7 1836.0 858.0 Z" fill="#041c08"/>

<g fill="none" stroke-width="3">
<circle cx="548" cy="84.5" r="14.5" stroke="#2ad44a"/>
<path d="M540.4 85.2 L546.4 90.8 L556.8 79.6" stroke="#2ad44a" stroke-width="2.6"/>
<circle cx="601.5" cy="84.5" r="14.5" stroke="#f4443a"/>
<path d="M595 78 L608 91 M608 78 L595 91" stroke="#f4443a" stroke-width="2.6"/>
</g>
<circle cx="541.5" cy="1229" r="11" fill="#e53a2e"/>
<path d="M586.5 1210 V1228 H618" fill="none" stroke="#0a7aff" stroke-width="2.2"/>
<path d="M587 1228 H618" fill="none" stroke="#f4443a" stroke-width="2.2"/>
<circle cx="587.6" cy="1197" r="13.2" fill="#0a7aff"/>
<text x="587.6" y="1202.5" font-family="Liberation Sans" font-weight="bold" font-size="15" text-anchor="middle" fill="#000">Z</text>
<circle cx="631.5" cy="1228" r="11" fill="#f4443a"/>
<text x="631.5" y="1233.5" font-family="Liberation Sans" font-weight="bold" font-size="14" text-anchor="middle" fill="#000">X</text>
<circle cx="586.5" cy="1251" r="9.5" fill="#0a6ee0"/>
<circle cx="588" cy="1269.5" r="12.5" fill="#22b63e"/>

</svg><!--/SCENE--><div class="inb"></div>
 </div>
</div>
</body></html>
